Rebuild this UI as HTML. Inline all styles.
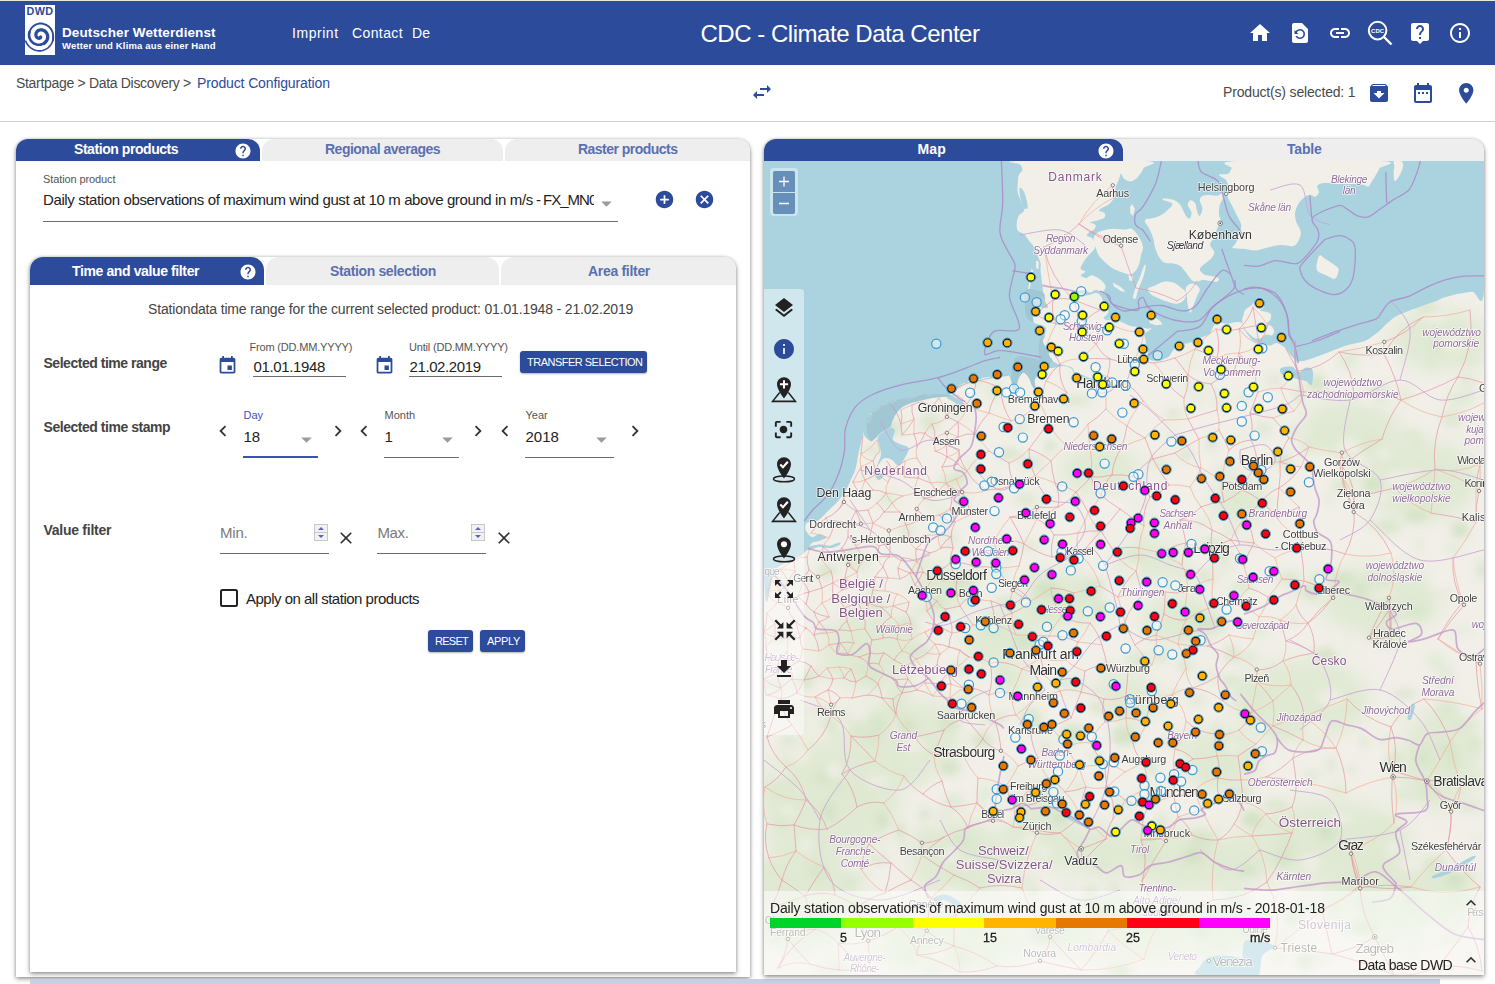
<!DOCTYPE html>
<html lang="en"><head><meta charset="utf-8"><title>CDC - Climate Data Center</title>
<style>
*{box-sizing:border-box;margin:0;padding:0}
html,body{width:1495px;height:984px;overflow:hidden;background:#fff}
body{position:relative;font-family:"Liberation Sans",sans-serif;color:#3c3c3c;font-size:14px}
.a{position:absolute;white-space:nowrap;line-height:1}
svg{position:absolute;display:block}
.hdr{left:0;top:0;width:1495px;height:65px;background:#2d4b9b}
.w{color:#fff}.b{font-weight:bold}.blue{color:#2d4b9b}
.ic{fill:#2d4b9b}.icw{fill:#fff}
.tab{position:absolute;height:23px;background:#eeeeee;border-radius:12px 12px 0 0}
.tab.on{background:#2d4b9b}
.tl{color:#5b70b0;font-weight:bold;font-size:14px}
.ul{position:absolute;height:1px;background:#6b6b6b}
.btn{position:absolute;background:#2d4b9b;color:#fff;border-radius:3px;box-shadow:0 1px 2px rgba(0,0,0,.3)}
.lbl{font-size:11px;color:#555}
</style></head><body>
<!--HEADER-->
<div class="a hdr"></div>
<div class="a" style="left:25px;top:5px;width:30px;height:50px;background:#fff"></div>
<span class="a b blue" id="t_dwd" style="letter-spacing:0.434px;left:26.500px;top:6px;font-size:10.800px">DWD</span>
<svg style="left:25px;top:20px" width="30" height="35" viewBox="0 0 30 35"><g fill="none" stroke="#2d4b9b" stroke-linecap="round" stroke-linejoin="round"><path d="M15.7 17.0 15.6 17.3 15.5 17.5 15.3 17.8 15.0 17.9 14.7 18.1 14.4 18.2 14.0 18.3 13.6 18.2 13.2 18.1 12.8 18.0 12.3 17.7 12.0 17.4 11.6 17.0 11.3 16.5 11.1 16.0 11.0 15.4 10.9 14.8 10.9 14.1 11.1 13.5 11.3 12.8 11.7 12.2 12.1 11.6 12.7 11.1 13.3 10.6 14.1 10.2 14.9 10.0 15.7 9.8 16.6 9.9 17.5 10.0 18.4 10.3 19.2 10.7 20.0 11.2 20.8 11.9 21.4 12.7 21.9 13.5 22.3 14.5 22.6 15.5 22.7 16.5 22.7 17.6 22.5 18.7 22.1 19.7 21.6 20.7 20.9 21.6 20.1 22.4 19.2 23.2" stroke-width="3.3"/><path d="M21.3 21.2 20.5 22.0 19.7 22.8 18.7 23.5 17.7 24.0 16.6 24.4 15.4 24.6 14.2 24.7 12.9 24.7 11.7 24.5 10.4 24.1 9.2 23.6 8.0 22.8 7.0 21.9 6.0 20.8 5.3 19.6 4.7 18.2 4.2 16.8 4.1 15.2 4.1 13.7 4.5 12.1" stroke-width="2.6"/><path d="M4.1 16.0 4.1 14.5 4.3 12.9 4.7 11.4 5.3 9.9 6.2 8.5 7.2 7.2 8.4 6.1 9.8 5.2 11.3 4.4 13.0 3.9 14.7 3.5 16.4 3.5 18.1 3.8 19.8 4.3 21.5 5.0 23.0 6.0 24.3 7.1 25.5 8.4 26.5 9.9 27.3 11.6 27.8 13.3 28.1 15.1 28.2 16.9 28.1 18.8 27.8 20.6" stroke-width="1.9"/><path d="M28.2 16.0 28.2 17.8 28.0 19.7 27.5 21.5 26.8 23.3 25.7 24.9 24.5 26.4 23.1 27.8 21.4 28.9 19.6 29.8 17.7 30.5 15.6 30.9 13.5 30.9 11.5 30.5 9.5 29.9 7.6 29.1 5.8 27.9 4.2 26.5 2.8 24.9 1.6 23.2 0.7 21.2" stroke-width="1.6"/></g></svg>
<span class="a b w" id="t_dw" style="letter-spacing:0.109px;left:62px;top:26px;font-size:13.500px">Deutscher Wetterdienst</span>
<span class="a b w" id="t_wk" style="letter-spacing:0.161px;left:62px;top:41px;font-size:9.500px">Wetter und Klima aus einer Hand</span>
<span class="a w" id="t_imp" style="letter-spacing:0.543px;left:292px;top:26px;font-size:14px">Imprint</span>
<span class="a w" id="t_con" style="letter-spacing:0.393px;left:352px;top:26px;font-size:14px">Contact</span>
<span class="a w" id="t_de" style="letter-spacing:0.047px;left:412px;top:26px;font-size:14px">De</span>
<span class="a w" id="t_title" style="letter-spacing:-0.470px;left:700.500px;top:22px;font-size:24px">CDC - Climate Data Center</span>
<div class="a" id="topstrip" style="left:0;top:0;width:1495px;height:1px;background:#e9e6dc"></div>
<svg style="left:1248.0px;top:21.0px" width="24" height="24" viewBox="0 0 24 24"><path fill="#fff" d="M10 20v-6h4v6h5v-8h3L12 3 2 12h3v8z"/></svg>
<svg style="left:1288.0px;top:21.0px" width="24" height="24" viewBox="0 0 24 24"><path fill="#fff" d="M14 2H6c-1.1 0-1.99.9-1.99 2L4 20c0 1.1.89 2 1.99 2H18c1.1 0 2-.9 2-2V8l-6-6zm-2 16c-2.05 0-3.81-1.24-4.58-3h1.71c.63.9 1.68 1.5 2.87 1.5 1.93 0 3.5-1.57 3.5-3.5S13.93 9.5 12 9.5c-1.35 0-2.52.78-3.1 1.9l1.6 1.6h-4V9l1.3 1.3C8.69 8.92 10.23 8 12 8c2.76 0 5 2.24 5 5s-2.24 5-5 5z"/></svg>
<svg style="left:1328.0px;top:21.0px" width="24" height="24" viewBox="0 0 24 24"><path fill="#fff" d="M3.9 12c0-1.71 1.39-3.1 3.1-3.1h4V7H7c-2.76 0-5 2.24-5 5s2.24 5 5 5h4v-1.9H7c-1.71 0-3.1-1.39-3.1-3.1zM8 13h8v-2H8v2zm9-6h-4v1.9h4c1.71 0 3.1 1.39 3.1 3.1s-1.39 3.1-3.1 3.1h-4V17h4c2.76 0 5-2.24 5-5s-2.24-5-5-5z"/></svg>
<svg style="left:1364px;top:18px" width="32" height="32" viewBox="0 0 32 32"><circle cx="13.6" cy="12.600" r="8.800" fill="none" stroke="#fff" stroke-width="2"/><path d="M20 19l7.500 7.500" stroke="#fff" stroke-width="2.400" fill="none"/><text x="13.600" y="14.600" text-anchor="middle" font-family="Liberation Sans,sans-serif" font-weight="bold" font-size="6" fill="#fff" id="t_cdc">CDC</text></svg>
<svg style="left:1408.0px;top:21.0px" width="24" height="24" viewBox="0 0 24 24"><path fill="#fff" d="M19 2H5c-1.11 0-2 .9-2 2v14c0 1.1.89 2 2 2h4l3 3 3-3h4c1.1 0 2-.9 2-2V4c0-1.1-.9-2-2-2zm-6 16h-2v-2h2v2zm2.070-7.750l-.9.920C13.450 11.900 13 12.500 13 14h-2v-.5c0-1.100.450-2.100 1.170-2.830l1.240-1.260c.370-.360.590-.860.590-1.410 0-1.100-.9-2-2-2s-2 .9-2 2H8c0-2.210 1.790-4 4-4s4 1.790 4 4c0 .880-.360 1.680-.930 2.250z"/></svg>
<svg style="left:1448.0px;top:21.0px" width="24" height="24" viewBox="0 0 24 24"><path fill="#fff" d="M11 17h2v-6h-2v6zm1-15C6.480 2 2 6.480 2 12s4.480 10 10 10 10-4.480 10-10S17.520 2 12 2zm0 18c-4.410 0-8-3.590-8-8s3.590-8 8-8 8 3.590 8 8-3.590 8-8 8zM11 9h2V7h-2v2z"/></svg>
<svg style="left:750.0px;top:80.0px" width="24" height="24" viewBox="0 0 24 24"><path fill="#2d4b9b" d="M6.990 11L3 15l3.990 4v-3H14v-2H6.990v-3zM21 9l-3.990-4v3H10v2h7.010v3L21 9z"/></svg>
<svg style="left:1367.3px;top:81.0px" width="24" height="24" viewBox="0 0 24 24"><path fill="#2d4b9b" d="M20.540 5.230l-1.390-1.680C18.880 3.210 18.470 3 18 3H6c-.470 0-.880.210-1.160.550L3.460 5.230C3.170 5.570 3 6.020 3 6.500V19c0 1.100.9 2 2 2h14c1.100 0 2-.9 2-2V6.500c0-.480-.170-.930-.460-1.270zM12 17.500L6.500 12H10v-2h4v2h3.500L12 17.500zM5.120 5l.810-1h12l.940 1H5.120z"/></svg>
<svg style="left:1410.7px;top:81.0px" width="24" height="24" viewBox="0 0 24 24"><path fill="#2d4b9b" d="M9 11H7v2h2v-2zm4 0h-2v2h2v-2zm4 0h-2v2h2v-2zm2-7h-1V2h-2v2H8V2H6v2H5c-1.110 0-1.990.9-1.990 2L3 20c0 1.100.890 2 2 2h14c1.100 0 2-.9 2-2V6c0-1.100-.9-2-2-2zm0 16H5V9h14v11z"/></svg>
<svg style="left:1453.8px;top:80.8px" width="24.5" height="24.5" viewBox="0 0 24 24"><path fill="#2d4b9b" d="M12 2C8.130 2 5 5.130 5 9c0 5.250 7 13 7 13s7-7.750 7-13c0-3.870-3.130-7-7-7zm0 9.500c-1.380 0-2.500-1.120-2.500-2.500s1.120-2.500 2.500-2.500 2.500 1.120 2.500 2.500-1.120 2.500-2.500 2.500z"/></svg>
<!--SUBHEADER-->
<span class="a" id="t_bc1" style="letter-spacing:-0.313px;left:16px;top:76px;font-size:14px;color:#4a4a4a">Startpage &gt; Data Discovery &gt;</span>
<span class="a blue" id="t_bc2" style="letter-spacing:-0.125px;left:197px;top:76px;font-size:14px">Product Configuration</span>
<span class="a" id="t_ps" style="letter-spacing:-0.171px;left:1223px;top:85px;font-size:14px;color:#4a4a4a">Product(s) selected: 1</span>
<div class="a" style="left:0;top:121px;width:1495px;height:1px;background:#cfcfcf"></div>
<div class="a" style="left:16px;top:139px;width:734px;height:838px;background:#fff;border-radius:12px 12px 0 0;box-shadow:0 2px 5px rgba(0,0,0,.38),0 0 3px rgba(0,0,0,.2)"></div>
<div class="tab on" style="left:16px;top:139px;width:244px;height:22px"></div>
<div class="tab" style="left:262px;top:139px;width:241px;height:22px"></div>
<div class="tab" style="left:505px;top:139px;width:245px;height:22px"></div>
<span class="a b w" id="t_tab1" style="letter-spacing:-0.440px;left:74px;top:142px;font-size:14px">Station products</span>
<svg style="left:233.8px;top:141.5px" width="18" height="18" viewBox="0 0 24 24"><path fill="#fff" d="M12 2C6.480 2 2 6.480 2 12s4.480 10 10 10 10-4.480 10-10S17.520 2 12 2zm1 17h-2v-2h2v2zm2.070-7.750l-.9.920C13.450 12.900 13 13.500 13 15h-2v-.5c0-1.100.450-2.100 1.170-2.830l1.240-1.260c.370-.360.590-.860.590-1.410 0-1.100-.9-2-2-2s-2 .9-2 2H8c0-2.210 1.790-4 4-4s4 1.790 4 4c0 .880-.360 1.680-.930 2.250z"/></svg>
<span class="a tl" id="t_tab2" style="letter-spacing:-0.508px;left:325px;top:142px">Regional averages</span>
<span class="a tl" id="t_tab3" style="letter-spacing:-0.524px;left:578px;top:142px">Raster products</span>
<span class="a lbl" id="t_sp" style="letter-spacing:-0.107px;left:43px;top:174px;font-size:11px">Station product</span>
<span class="a" id="t_daily" style="letter-spacing:-0.384px;left:43px;top:190.300px;line-height:20px;height:20px;font-size:15px;color:#222;width:551px;overflow:hidden">Daily station observations of maximum wind gust at 10 m above ground in m/s<span style="letter-spacing:-1px"> - FX_MN003</span></span>
<svg style="left:593.7px;top:191.2px" width="25" height="25" viewBox="0 0 24 24"><path fill="#9a9a9a" d="M7 10l5 5 5-5z"/></svg>
<div class="ul" style="left:43px;top:221px;width:575px"></div>
<svg style="left:653.5px;top:189.0px" width="21" height="21" viewBox="0 0 24 24"><path fill="#2d4b9b" d="M12 2C6.480 2 2 6.480 2 12s4.480 10 10 10 10-4.480 10-10S17.520 2 12 2zm5 11h-4v4h-2v-4H7v-2h4V7h2v4h4v2z"/></svg>
<svg style="left:693.9px;top:189.0px" width="21" height="21" viewBox="0 0 24 24"><path fill="#2d4b9b" d="M12 2C6.470 2 2 6.470 2 12s4.470 10 10 10 10-4.470 10-10S17.530 2 12 2zm5 13.590L15.590 17 12 13.410 8.410 17 7 15.590 10.590 12 7 8.410 8.410 7 12 10.590 15.590 7 17 8.410 13.410 12 17 15.590z"/></svg>
<div class="a" style="left:30px;top:257px;width:706px;height:715px;background:#fff;border-radius:12px 12px 0 0;box-shadow:0 2px 5px rgba(0,0,0,.4),0 0 3px rgba(0,0,0,.2)"></div>
<div class="tab on" style="left:30px;top:257px;width:234px;height:27.500px;border-radius:13px 13px 0 0"></div>
<div class="tab" style="left:266px;top:257px;width:233px;height:27.500px;border-radius:13px 13px 0 0"></div>
<div class="tab" style="left:501px;top:257px;width:235px;height:27.500px;border-radius:13px 13px 0 0"></div>
<span class="a b w" id="t_itab1" style="letter-spacing:-0.382px;left:72px;top:264px;font-size:14px">Time and value filter</span>
<svg style="left:238.8px;top:262.6px" width="18" height="18" viewBox="0 0 24 24"><path fill="#fff" d="M12 2C6.480 2 2 6.480 2 12s4.480 10 10 10 10-4.480 10-10S17.520 2 12 2zm1 17h-2v-2h2v2zm2.070-7.750l-.9.920C13.450 12.900 13 13.500 13 15h-2v-.5c0-1.100.450-2.100 1.170-2.830l1.240-1.260c.370-.360.590-.860.590-1.410 0-1.100-.9-2-2-2s-2 .9-2 2H8c0-2.210 1.790-4 4-4s4 1.790 4 4c0 .880-.360 1.680-.930 2.250z"/></svg>
<span class="a tl" id="t_itab2" style="letter-spacing:-0.361px;left:330px;top:264px">Station selection</span>
<span class="a tl" id="t_itab3" style="letter-spacing:-0.305px;left:588px;top:264px">Area filter</span>
<span class="a" id="t_range" style="letter-spacing:-0.172px;left:148px;top:302px;font-size:14px;color:#444">Stationdata time range for the current selected product: 01.01.1948 - 21.02.2019</span>
<span class="a b" id="t_str" style="letter-spacing:-0.473px;left:43.500px;top:356px;font-size:14px;color:#444">Selected time range</span>
<svg style="left:217.0px;top:355.0px" width="21" height="21" viewBox="0 0 24 24"><path fill="#2d4b9b" d="M17 12h-5v5h5v-5zM16 1v2H8V1H6v2H5c-1.110 0-1.990.9-1.990 2L3 19c0 1.100.890 2 2 2h14c1.100 0 2-.9 2-2V5c0-1.100-.9-2-2-2h-1V1h-2zm3 18H5V8h14v11z"/></svg>
<span class="a lbl" id="t_from" style="letter-spacing:-0.178px;left:249.500px;top:342px">From (DD.MM.YYYY)</span>
<span class="a" id="t_d1" style="letter-spacing:-0.358px;left:253.500px;top:359px;font-size:15px;color:#222">01.01.1948</span>
<div class="ul" style="left:253px;top:376px;width:93px"></div>
<svg style="left:373.5px;top:355.0px" width="21" height="21" viewBox="0 0 24 24"><path fill="#2d4b9b" d="M17 12h-5v5h5v-5zM16 1v2H8V1H6v2H5c-1.110 0-1.990.9-1.990 2L3 19c0 1.100.890 2 2 2h14c1.100 0 2-.9 2-2V5c0-1.100-.9-2-2-2h-1V1h-2zm3 18H5V8h14v11z"/></svg>
<span class="a lbl" id="t_until" style="letter-spacing:-0.181px;left:409px;top:342px">Until (DD.MM.YYYY)</span>
<span class="a" id="t_d2" style="letter-spacing:-0.398px;left:409.500px;top:359px;font-size:15px;color:#222">21.02.2019</span>
<div class="ul" style="left:409px;top:376px;width:93px"></div>
<div class="btn" style="left:520px;top:351px;width:127px;height:22px"></div>
<span class="a w" id="t_trans" style="letter-spacing:-0.510px;left:527px;top:357px;font-size:11px;font-weight:500">TRANSFER SELECTION</span>
<span class="a b" id="t_sts" style="letter-spacing:-0.457px;left:43.500px;top:420px;font-size:14px;color:#444">Selected time stamp</span>
<svg style="left:211.5px;top:419.5px" width="22" height="22" viewBox="0 0 24 24"><path fill="#333" d="M15.410 7.410L14 6l-6 6 6 6 1.410-1.410L10.830 12z"/></svg>
<svg style="left:353.0px;top:419.5px" width="22" height="22" viewBox="0 0 24 24"><path fill="#333" d="M15.410 7.410L14 6l-6 6 6 6 1.410-1.410L10.830 12z"/></svg>
<svg style="left:494.0px;top:419.5px" width="22" height="22" viewBox="0 0 24 24"><path fill="#333" d="M15.410 7.410L14 6l-6 6 6 6 1.410-1.410L10.830 12z"/></svg>
<svg style="left:327.0px;top:419.5px" width="22" height="22" viewBox="0 0 24 24"><path fill="#333" d="M10 6L8.590 7.410 13.170 12l-4.580 4.590L10 18l6-6z"/></svg>
<svg style="left:467.0px;top:419.5px" width="22" height="22" viewBox="0 0 24 24"><path fill="#333" d="M10 6L8.590 7.410 13.170 12l-4.580 4.590L10 18l6-6z"/></svg>
<svg style="left:623.5px;top:419.5px" width="22" height="22" viewBox="0 0 24 24"><path fill="#333" d="M10 6L8.590 7.410 13.170 12l-4.580 4.590L10 18l6-6z"/></svg>
<span class="a lbl" id="t_day" style="left:243.500px;top:410px;color:#3f51b5">Day</span>
<span class="a lbl" id="t_month" style="left:384.500px;top:410px">Month</span>
<span class="a lbl" id="t_year" style="left:525.500px;top:410px">Year</span>
<span class="a" id="t_18" style="left:243.500px;top:429px;font-size:15px;color:#222">18</span>
<span class="a" id="t_1" style="left:384.500px;top:429px;font-size:15px;color:#222">1</span>
<span class="a" id="t_2018" style="left:525.500px;top:429px;font-size:15px;color:#222">2018</span>
<svg style="left:293.5px;top:427.0px" width="25" height="25" viewBox="0 0 24 24"><path fill="#9a9a9a" d="M7 10l5 5 5-5z"/></svg>
<svg style="left:434.5px;top:427.0px" width="25" height="25" viewBox="0 0 24 24"><path fill="#9a9a9a" d="M7 10l5 5 5-5z"/></svg>
<svg style="left:588.5px;top:427.0px" width="25" height="25" viewBox="0 0 24 24"><path fill="#9a9a9a" d="M7 10l5 5 5-5z"/></svg>
<div class="ul" style="left:243px;top:456px;width:75px;height:2px;background:#3f51b5"></div>
<div class="ul" style="left:384px;top:457px;width:75px"></div>
<div class="ul" style="left:525px;top:457px;width:89px"></div>
<span class="a b" id="t_vf" style="letter-spacing:-0.268px;left:43.500px;top:523px;font-size:14px;color:#444">Value filter</span>
<span class="a" id="t_min" style="letter-spacing:-0.186px;left:220px;top:525px;font-size:15px;color:#7a7a7a">Min.</span>
<span class="a" id="t_max" style="letter-spacing:-0.379px;left:377.500px;top:525px;font-size:15px;color:#7a7a7a">Max.</span>
<svg style="left:314px;top:524px" width="14" height="17" viewBox="0 0 14 17"><rect x=".5" y=".5" width="13" height="16" fill="#f1f1f1" stroke="#c8c8c8"/><path d="M0 8.500h14" stroke="#c8c8c8"/><path d="M4 6l3-3 3 3zM4 11l3 3 3-3z" fill="#5566bb"/></svg>
<svg style="left:471px;top:524px" width="14" height="17" viewBox="0 0 14 17"><rect x=".5" y=".5" width="13" height="16" fill="#f1f1f1" stroke="#c8c8c8"/><path d="M0 8.500h14" stroke="#c8c8c8"/><path d="M4 6l3-3 3 3zM4 11l3 3 3-3z" fill="#5566bb"/></svg>
<div class="ul" style="left:220px;top:553px;width:109px"></div>
<div class="ul" style="left:377px;top:553px;width:109px"></div>
<svg style="left:336.0px;top:527.5px" width="20" height="20" viewBox="0 0 24 24"><path fill="#333" d="M19 6.410L17.590 5 12 10.590 6.410 5 5 6.410 10.590 12 5 17.590 6.410 19 12 13.410 17.590 19 19 17.590 13.410 12z"/></svg>
<svg style="left:493.5px;top:527.5px" width="20" height="20" viewBox="0 0 24 24"><path fill="#333" d="M19 6.410L17.590 5 12 10.590 6.410 5 5 6.410 10.590 12 5 17.590 6.410 19 12 13.410 17.590 19 19 17.590 13.410 12z"/></svg>
<div class="a" style="left:220px;top:589px;width:18px;height:18px;border:2px solid #222;border-radius:2.500px"></div>
<span class="a" id="t_apply" style="letter-spacing:-0.501px;left:246px;top:591px;font-size:15px;color:#222">Apply on all station products</span>
<div class="btn" style="left:428px;top:630px;width:45px;height:21.500px"></div>
<div class="btn" style="left:480px;top:630px;width:45px;height:21.500px"></div>
<span class="a w" id="t_reset" style="letter-spacing:-0.737px;left:435px;top:636px;font-size:11px">RESET</span>
<span class="a w" id="t_appl" style="letter-spacing:-0.351px;left:487px;top:636px;font-size:11px">APPLY</span>
<div class="a" style="left:30px;top:979px;width:1410px;height:5px;background:#c9d0e6"></div>
<div class="a" style="left:764px;top:139px;width:720px;height:836px;background:#f2efe9;border-radius:12px 12px 0 0;box-shadow:0 2px 5px rgba(0,0,0,.4),0 0 3px rgba(0,0,0,.2)"></div>
<div class="tab on" style="left:764px;top:139px;width:359px;height:22px"></div>
<div class="tab" style="left:1125px;top:139px;width:359px;height:22px"></div>
<span class="a b w" id="t_map" style="letter-spacing:0.200px;left:917.500px;top:142px;font-size:14px">Map</span>
<svg style="left:1097.0px;top:141.5px" width="18" height="18" viewBox="0 0 24 24"><path fill="#fff" d="M12 2C6.480 2 2 6.480 2 12s4.480 10 10 10 10-4.480 10-10S17.520 2 12 2zm1 17h-2v-2h2v2zm2.070-7.750l-.9.920C13.450 12.900 13 13.500 13 15h-2v-.5c0-1.100.450-2.100 1.170-2.830l1.240-1.260c.370-.360.590-.860.590-1.410 0-1.100-.9-2-2-2s-2 .9-2 2H8c0-2.210 1.790-4 4-4s4 1.790 4 4c0 .880-.360 1.680-.930 2.250z"/></svg>
<span class="a tl" id="t_table" style="letter-spacing:-0.166px;left:1287px;top:142px">Table</span>
<svg style="left:764px;top:161px" width="720" height="814" viewBox="764 161 720 814" font-family="Liberation Sans,sans-serif">
<defs><filter id="bl" x="-30%" y="-30%" width="160%" height="160%"><feGaussianBlur stdDeviation="9"/></filter><filter id="bs" x="-30%" y="-30%" width="160%" height="160%"><feGaussianBlur stdDeviation="4"/></filter></defs>
<rect x="764" y="161" width="720" height="814" fill="#f1efe8"/>
<g filter="url(#bl)" fill="#d3e5c3" opacity=".55">
<ellipse cx="830" cy="800" rx="70" ry="60"/>
<ellipse cx="900" cy="740" rx="60" ry="40"/>
<ellipse cx="870" cy="650" rx="50" ry="40"/>
<ellipse cx="960" cy="860" rx="50" ry="40"/>
<ellipse cx="1000" cy="640" rx="35" ry="30"/>
<ellipse cx="1060" cy="600" rx="40" ry="30"/>
<ellipse cx="1130" cy="700" rx="30" ry="25"/>
<ellipse cx="1180" cy="620" rx="40" ry="25"/>
<ellipse cx="1040" cy="820" rx="30" ry="40"/>
<ellipse cx="1100" cy="850" rx="60" ry="25"/>
<ellipse cx="1200" cy="860" rx="80" ry="30"/>
<ellipse cx="1330" cy="840" rx="80" ry="40"/>
<ellipse cx="1300" cy="700" rx="70" ry="40"/>
<ellipse cx="1380" cy="600" rx="60" ry="35"/>
<ellipse cx="1420" cy="480" rx="60" ry="40"/>
<ellipse cx="1350" cy="430" rx="50" ry="30"/>
<ellipse cx="1240" cy="500" rx="30" ry="25"/>
<ellipse cx="1100" cy="470" rx="40" ry="25"/>
<ellipse cx="1150" cy="560" rx="35" ry="20"/>
<ellipse cx="1300" cy="200" rx="50" ry="25"/>
<ellipse cx="800" cy="900" rx="60" ry="50"/>
<ellipse cx="950" cy="940" rx="80" ry="30"/>
<ellipse cx="1150" cy="930" rx="120" ry="30"/>
<ellipse cx="1400" cy="900" rx="80" ry="40"/>
<ellipse cx="1440" cy="760" rx="40" ry="50"/>
<ellipse cx="1440" cy="340" rx="50" ry="30"/>
<ellipse cx="940" cy="590" rx="30" ry="25"/>
<ellipse cx="1220" cy="760" rx="40" ry="30"/>
</g>
<g filter="url(#bs)">
<ellipse cx="935" cy="604" rx="9" ry="7" fill="#cde1be" opacity="0.7"/>
<ellipse cx="1102" cy="609" rx="10" ry="6" fill="#c8ddb8" opacity="0.6"/>
<ellipse cx="872" cy="678" rx="9" ry="7" fill="#cde1be" opacity="0.4"/>
<ellipse cx="1326" cy="831" rx="9" ry="9" fill="#c8ddb8" opacity="0.5"/>
<ellipse cx="981" cy="574" rx="7" ry="7" fill="#dae9ce" opacity="0.6"/>
<ellipse cx="1174" cy="742" rx="11" ry="6" fill="#cde1be" opacity="0.5"/>
<ellipse cx="1224" cy="555" rx="5" ry="8" fill="#c8ddb8" opacity="0.7"/>
<ellipse cx="1128" cy="974" rx="5" ry="7" fill="#d4e5c6" opacity="0.7"/>
<ellipse cx="1009" cy="454" rx="12" ry="5" fill="#c8ddb8" opacity="0.6"/>
<ellipse cx="1193" cy="616" rx="12" ry="6" fill="#d4e5c6" opacity="0.7"/>
<ellipse cx="1079" cy="371" rx="7" ry="8" fill="#dae9ce" opacity="0.4"/>
<ellipse cx="1207" cy="676" rx="10" ry="6" fill="#dae9ce" opacity="0.6"/>
<ellipse cx="1030" cy="672" rx="9" ry="4" fill="#dae9ce" opacity="0.7"/>
<ellipse cx="954" cy="802" rx="11" ry="9" fill="#d4e5c6" opacity="0.5"/>
<ellipse cx="924" cy="815" rx="6" ry="6" fill="#cde1be" opacity="0.6"/>
<ellipse cx="1447" cy="710" rx="11" ry="9" fill="#d4e5c6" opacity="0.7"/>
<ellipse cx="1089" cy="344" rx="9" ry="4" fill="#d4e5c6" opacity="0.7"/>
<ellipse cx="1009" cy="835" rx="10" ry="7" fill="#dae9ce" opacity="0.5"/>
<ellipse cx="1212" cy="576" rx="13" ry="7" fill="#c8ddb8" opacity="0.7"/>
<ellipse cx="1241" cy="583" rx="7" ry="4" fill="#dae9ce" opacity="0.4"/>
<ellipse cx="1342" cy="578" rx="12" ry="6" fill="#c8ddb8" opacity="0.6"/>
<ellipse cx="1241" cy="588" rx="12" ry="7" fill="#dae9ce" opacity="0.7"/>
<ellipse cx="1154" cy="822" rx="6" ry="4" fill="#cde1be" opacity="0.4"/>
<ellipse cx="1334" cy="911" rx="11" ry="3" fill="#c8ddb8" opacity="0.4"/>
<ellipse cx="1144" cy="505" rx="11" ry="3" fill="#d4e5c6" opacity="0.4"/>
<ellipse cx="788" cy="741" rx="8" ry="4" fill="#c8ddb8" opacity="0.6"/>
<ellipse cx="1186" cy="455" rx="7" ry="4" fill="#c8ddb8" opacity="0.7"/>
<ellipse cx="1096" cy="690" rx="10" ry="3" fill="#cde1be" opacity="0.5"/>
<ellipse cx="1121" cy="733" rx="10" ry="6" fill="#dae9ce" opacity="0.6"/>
<ellipse cx="1033" cy="892" rx="6" ry="6" fill="#c8ddb8" opacity="0.6"/>
<ellipse cx="1292" cy="620" rx="9" ry="3" fill="#c8ddb8" opacity="0.4"/>
<ellipse cx="781" cy="846" rx="12" ry="7" fill="#dae9ce" opacity="0.6"/>
<ellipse cx="1317" cy="577" rx="5" ry="7" fill="#cde1be" opacity="0.6"/>
<ellipse cx="820" cy="974" rx="8" ry="7" fill="#dae9ce" opacity="0.5"/>
<ellipse cx="1050" cy="446" rx="5" ry="6" fill="#c8ddb8" opacity="0.7"/>
<ellipse cx="1181" cy="913" rx="5" ry="5" fill="#d4e5c6" opacity="0.4"/>
<ellipse cx="1303" cy="907" rx="8" ry="7" fill="#dae9ce" opacity="0.7"/>
<ellipse cx="1377" cy="599" rx="10" ry="8" fill="#dae9ce" opacity="0.7"/>
<ellipse cx="908" cy="625" rx="8" ry="8" fill="#c8ddb8" opacity="0.6"/>
<ellipse cx="816" cy="932" rx="12" ry="3" fill="#d4e5c6" opacity="0.6"/>
<ellipse cx="1405" cy="793" rx="10" ry="7" fill="#dae9ce" opacity="0.4"/>
<ellipse cx="829" cy="811" rx="6" ry="8" fill="#c8ddb8" opacity="0.6"/>
<ellipse cx="1250" cy="167" rx="8" ry="6" fill="#c8ddb8" opacity="0.5"/>
<ellipse cx="962" cy="703" rx="12" ry="8" fill="#dae9ce" opacity="0.6"/>
<ellipse cx="1246" cy="930" rx="5" ry="9" fill="#cde1be" opacity="0.6"/>
<ellipse cx="1130" cy="209" rx="11" ry="7" fill="#d4e5c6" opacity="0.4"/>
<ellipse cx="1405" cy="694" rx="12" ry="4" fill="#c8ddb8" opacity="0.6"/>
<ellipse cx="1230" cy="534" rx="6" ry="3" fill="#c8ddb8" opacity="0.5"/>
<ellipse cx="794" cy="572" rx="11" ry="5" fill="#c8ddb8" opacity="0.5"/>
<ellipse cx="1123" cy="971" rx="9" ry="7" fill="#cde1be" opacity="0.4"/>
<ellipse cx="1351" cy="770" rx="5" ry="5" fill="#d4e5c6" opacity="0.6"/>
<ellipse cx="1040" cy="611" rx="10" ry="9" fill="#dae9ce" opacity="0.7"/>
<ellipse cx="1245" cy="186" rx="10" ry="4" fill="#d4e5c6" opacity="0.5"/>
<ellipse cx="1141" cy="536" rx="9" ry="3" fill="#c8ddb8" opacity="0.4"/>
<ellipse cx="968" cy="696" rx="8" ry="4" fill="#cde1be" opacity="0.5"/>
<ellipse cx="1152" cy="918" rx="12" ry="7" fill="#cde1be" opacity="0.6"/>
<ellipse cx="1435" cy="862" rx="11" ry="6" fill="#cde1be" opacity="0.5"/>
<ellipse cx="1373" cy="736" rx="8" ry="3" fill="#d4e5c6" opacity="0.6"/>
<ellipse cx="1282" cy="460" rx="9" ry="7" fill="#cde1be" opacity="0.7"/>
<ellipse cx="780" cy="637" rx="10" ry="4" fill="#c8ddb8" opacity="0.5"/>
<ellipse cx="1212" cy="443" rx="4" ry="7" fill="#c8ddb8" opacity="0.7"/>
<ellipse cx="1479" cy="419" rx="8" ry="4" fill="#cde1be" opacity="0.4"/>
<ellipse cx="1235" cy="894" rx="13" ry="6" fill="#dae9ce" opacity="0.7"/>
<ellipse cx="1201" cy="931" rx="7" ry="8" fill="#c8ddb8" opacity="0.6"/>
<ellipse cx="1150" cy="795" rx="12" ry="8" fill="#dae9ce" opacity="0.7"/>
<ellipse cx="1025" cy="499" rx="11" ry="6" fill="#d4e5c6" opacity="0.6"/>
<ellipse cx="1306" cy="906" rx="13" ry="3" fill="#cde1be" opacity="0.7"/>
<ellipse cx="830" cy="724" rx="7" ry="7" fill="#cde1be" opacity="0.7"/>
<ellipse cx="1292" cy="433" rx="5" ry="5" fill="#cde1be" opacity="0.5"/>
<ellipse cx="1377" cy="581" rx="12" ry="5" fill="#d4e5c6" opacity="0.5"/>
<ellipse cx="1345" cy="648" rx="5" ry="9" fill="#cde1be" opacity="0.5"/>
<ellipse cx="924" cy="836" rx="10" ry="8" fill="#dae9ce" opacity="0.5"/>
<ellipse cx="1240" cy="794" rx="13" ry="6" fill="#cde1be" opacity="0.6"/>
<ellipse cx="1098" cy="754" rx="7" ry="6" fill="#dae9ce" opacity="0.5"/>
<ellipse cx="1231" cy="654" rx="7" ry="9" fill="#c8ddb8" opacity="0.5"/>
<ellipse cx="1394" cy="759" rx="10" ry="8" fill="#d4e5c6" opacity="0.7"/>
<ellipse cx="974" cy="921" rx="5" ry="7" fill="#cde1be" opacity="0.6"/>
<ellipse cx="793" cy="768" rx="8" ry="5" fill="#dae9ce" opacity="0.4"/>
<ellipse cx="1084" cy="900" rx="6" ry="6" fill="#dae9ce" opacity="0.7"/>
<ellipse cx="1469" cy="874" rx="5" ry="5" fill="#d4e5c6" opacity="0.5"/>
<ellipse cx="1378" cy="393" rx="12" ry="8" fill="#d4e5c6" opacity="0.7"/>
<ellipse cx="1472" cy="807" rx="13" ry="5" fill="#c8ddb8" opacity="0.4"/>
<ellipse cx="942" cy="814" rx="6" ry="3" fill="#d4e5c6" opacity="0.7"/>
<ellipse cx="1346" cy="362" rx="11" ry="8" fill="#dae9ce" opacity="0.6"/>
<ellipse cx="776" cy="684" rx="12" ry="6" fill="#c8ddb8" opacity="0.5"/>
<ellipse cx="1219" cy="400" rx="5" ry="8" fill="#dae9ce" opacity="0.5"/>
<ellipse cx="968" cy="592" rx="5" ry="3" fill="#d4e5c6" opacity="0.7"/>
<ellipse cx="1435" cy="660" rx="9" ry="6" fill="#dae9ce" opacity="0.7"/>
<ellipse cx="1077" cy="223" rx="8" ry="8" fill="#c8ddb8" opacity="0.4"/>
<ellipse cx="1427" cy="308" rx="11" ry="5" fill="#cde1be" opacity="0.7"/>
<ellipse cx="993" cy="481" rx="5" ry="5" fill="#cde1be" opacity="0.5"/>
<ellipse cx="1453" cy="761" rx="5" ry="7" fill="#cde1be" opacity="0.7"/>
<ellipse cx="1466" cy="724" rx="13" ry="6" fill="#cde1be" opacity="0.4"/>
<ellipse cx="872" cy="735" rx="8" ry="5" fill="#c8ddb8" opacity="0.4"/>
<ellipse cx="901" cy="831" rx="4" ry="9" fill="#c8ddb8" opacity="0.7"/>
<ellipse cx="1076" cy="309" rx="5" ry="4" fill="#c8ddb8" opacity="0.5"/>
<ellipse cx="1470" cy="361" rx="13" ry="6" fill="#dae9ce" opacity="0.5"/>
<ellipse cx="1296" cy="593" rx="8" ry="5" fill="#dae9ce" opacity="0.5"/>
<ellipse cx="1149" cy="839" rx="9" ry="9" fill="#d4e5c6" opacity="0.5"/>
<ellipse cx="1382" cy="942" rx="12" ry="4" fill="#cde1be" opacity="0.5"/>
<ellipse cx="774" cy="869" rx="13" ry="7" fill="#dae9ce" opacity="0.4"/>
<ellipse cx="1153" cy="520" rx="9" ry="5" fill="#dae9ce" opacity="0.6"/>
<ellipse cx="1190" cy="733" rx="11" ry="5" fill="#dae9ce" opacity="0.5"/>
<ellipse cx="1467" cy="381" rx="9" ry="7" fill="#d4e5c6" opacity="0.5"/>
<ellipse cx="1460" cy="530" rx="9" ry="8" fill="#c8ddb8" opacity="0.7"/>
<ellipse cx="1160" cy="658" rx="6" ry="5" fill="#cde1be" opacity="0.5"/>
<ellipse cx="919" cy="608" rx="8" ry="8" fill="#dae9ce" opacity="0.4"/>
<ellipse cx="1032" cy="463" rx="12" ry="7" fill="#c8ddb8" opacity="0.4"/>
<ellipse cx="995" cy="391" rx="9" ry="9" fill="#dae9ce" opacity="0.7"/>
<ellipse cx="1367" cy="904" rx="10" ry="4" fill="#c8ddb8" opacity="0.4"/>
<ellipse cx="1162" cy="257" rx="12" ry="6" fill="#c8ddb8" opacity="0.4"/>
<ellipse cx="961" cy="477" rx="8" ry="7" fill="#c8ddb8" opacity="0.5"/>
<ellipse cx="1225" cy="768" rx="5" ry="8" fill="#dae9ce" opacity="0.4"/>
<ellipse cx="1068" cy="889" rx="7" ry="6" fill="#dae9ce" opacity="0.4"/>
<ellipse cx="783" cy="922" rx="9" ry="4" fill="#c8ddb8" opacity="0.7"/>
<ellipse cx="1425" cy="483" rx="8" ry="9" fill="#dae9ce" opacity="0.5"/>
<ellipse cx="1187" cy="635" rx="9" ry="5" fill="#d4e5c6" opacity="0.5"/>
<ellipse cx="1283" cy="859" rx="8" ry="8" fill="#cde1be" opacity="0.7"/>
<ellipse cx="850" cy="905" rx="6" ry="4" fill="#c8ddb8" opacity="0.4"/>
<ellipse cx="1398" cy="715" rx="6" ry="5" fill="#dae9ce" opacity="0.5"/>
<ellipse cx="954" cy="726" rx="5" ry="4" fill="#d4e5c6" opacity="0.4"/>
<ellipse cx="1247" cy="657" rx="11" ry="5" fill="#d4e5c6" opacity="0.6"/>
<ellipse cx="957" cy="893" rx="6" ry="8" fill="#dae9ce" opacity="0.5"/>
<ellipse cx="1210" cy="778" rx="8" ry="8" fill="#dae9ce" opacity="0.4"/>
<ellipse cx="1144" cy="854" rx="9" ry="8" fill="#c8ddb8" opacity="0.4"/>
<ellipse cx="1014" cy="678" rx="10" ry="9" fill="#dae9ce" opacity="0.6"/>
<ellipse cx="1476" cy="841" rx="7" ry="3" fill="#dae9ce" opacity="0.5"/>
<ellipse cx="1365" cy="741" rx="5" ry="8" fill="#c8ddb8" opacity="0.5"/>
<ellipse cx="1418" cy="611" rx="11" ry="7" fill="#d4e5c6" opacity="0.6"/>
<ellipse cx="1151" cy="912" rx="9" ry="5" fill="#dae9ce" opacity="0.6"/>
<ellipse cx="1030" cy="716" rx="11" ry="9" fill="#d4e5c6" opacity="0.7"/>
<ellipse cx="835" cy="734" rx="6" ry="6" fill="#dae9ce" opacity="0.7"/>
<ellipse cx="1117" cy="971" rx="12" ry="6" fill="#c8ddb8" opacity="0.7"/>
<ellipse cx="1074" cy="401" rx="12" ry="4" fill="#c8ddb8" opacity="0.6"/>
<ellipse cx="916" cy="778" rx="13" ry="8" fill="#dae9ce" opacity="0.5"/>
<ellipse cx="921" cy="939" rx="8" ry="5" fill="#dae9ce" opacity="0.6"/>
<ellipse cx="862" cy="670" rx="5" ry="3" fill="#c8ddb8" opacity="0.6"/>
<ellipse cx="1162" cy="701" rx="6" ry="8" fill="#c8ddb8" opacity="0.4"/>
<ellipse cx="788" cy="583" rx="13" ry="4" fill="#c8ddb8" opacity="0.4"/>
<ellipse cx="1150" cy="923" rx="10" ry="6" fill="#cde1be" opacity="0.5"/>
<ellipse cx="930" cy="500" rx="7" ry="6" fill="#d4e5c6" opacity="0.5"/>
<ellipse cx="1197" cy="700" rx="9" ry="6" fill="#cde1be" opacity="0.4"/>
<ellipse cx="1089" cy="593" rx="12" ry="9" fill="#d4e5c6" opacity="0.5"/>
<ellipse cx="1140" cy="345" rx="7" ry="3" fill="#d4e5c6" opacity="0.6"/>
<ellipse cx="1318" cy="178" rx="10" ry="3" fill="#c8ddb8" opacity="0.7"/>
<ellipse cx="799" cy="711" rx="8" ry="5" fill="#d4e5c6" opacity="0.5"/>
<ellipse cx="846" cy="715" rx="5" ry="5" fill="#d4e5c6" opacity="0.6"/>
<ellipse cx="824" cy="710" rx="13" ry="3" fill="#c8ddb8" opacity="0.7"/>
<ellipse cx="1068" cy="740" rx="8" ry="6" fill="#cde1be" opacity="0.5"/>
<ellipse cx="1110" cy="678" rx="11" ry="4" fill="#dae9ce" opacity="0.6"/>
<ellipse cx="1453" cy="549" rx="7" ry="3" fill="#cde1be" opacity="0.6"/>
<ellipse cx="1171" cy="438" rx="4" ry="7" fill="#dae9ce" opacity="0.7"/>
<ellipse cx="1046" cy="589" rx="12" ry="8" fill="#c8ddb8" opacity="0.6"/>
<ellipse cx="839" cy="785" rx="7" ry="6" fill="#d4e5c6" opacity="0.5"/>
<ellipse cx="806" cy="617" rx="4" ry="6" fill="#cde1be" opacity="0.7"/>
<ellipse cx="863" cy="793" rx="5" ry="7" fill="#dae9ce" opacity="0.6"/>
<ellipse cx="878" cy="723" rx="8" ry="7" fill="#cde1be" opacity="0.5"/>
<ellipse cx="777" cy="934" rx="7" ry="9" fill="#cde1be" opacity="0.4"/>
<ellipse cx="1044" cy="857" rx="7" ry="7" fill="#dae9ce" opacity="0.7"/>
<ellipse cx="1352" cy="356" rx="7" ry="7" fill="#dae9ce" opacity="0.4"/>
<ellipse cx="1422" cy="615" rx="8" ry="3" fill="#dae9ce" opacity="0.6"/>
<ellipse cx="1360" cy="589" rx="6" ry="5" fill="#c8ddb8" opacity="0.7"/>
<ellipse cx="1191" cy="365" rx="9" ry="3" fill="#dae9ce" opacity="0.6"/>
<ellipse cx="1325" cy="655" rx="12" ry="6" fill="#c8ddb8" opacity="0.7"/>
<ellipse cx="1079" cy="786" rx="5" ry="4" fill="#c8ddb8" opacity="0.5"/>
<ellipse cx="1291" cy="921" rx="9" ry="6" fill="#cde1be" opacity="0.6"/>
<ellipse cx="898" cy="960" rx="12" ry="4" fill="#dae9ce" opacity="0.5"/>
<ellipse cx="1025" cy="165" rx="7" ry="3" fill="#c8ddb8" opacity="0.4"/>
<ellipse cx="1225" cy="570" rx="8" ry="3" fill="#c8ddb8" opacity="0.7"/>
<ellipse cx="1279" cy="192" rx="12" ry="4" fill="#dae9ce" opacity="0.7"/>
<ellipse cx="1267" cy="173" rx="9" ry="9" fill="#c8ddb8" opacity="0.4"/>
<ellipse cx="1374" cy="523" rx="10" ry="4" fill="#dae9ce" opacity="0.7"/>
<ellipse cx="883" cy="893" rx="8" ry="6" fill="#dae9ce" opacity="0.5"/>
<ellipse cx="1012" cy="772" rx="7" ry="4" fill="#dae9ce" opacity="0.6"/>
<ellipse cx="1055" cy="941" rx="6" ry="4" fill="#dae9ce" opacity="0.5"/>
<ellipse cx="803" cy="683" rx="11" ry="5" fill="#c8ddb8" opacity="0.7"/>
<ellipse cx="827" cy="723" rx="11" ry="5" fill="#dae9ce" opacity="0.6"/>
<ellipse cx="1455" cy="899" rx="13" ry="9" fill="#d4e5c6" opacity="0.5"/>
<ellipse cx="1349" cy="707" rx="8" ry="6" fill="#dae9ce" opacity="0.7"/>
<ellipse cx="988" cy="962" rx="6" ry="4" fill="#cde1be" opacity="0.5"/>
<ellipse cx="1377" cy="634" rx="10" ry="7" fill="#d4e5c6" opacity="0.6"/>
<ellipse cx="994" cy="626" rx="7" ry="8" fill="#c8ddb8" opacity="0.4"/>
<ellipse cx="1073" cy="732" rx="12" ry="8" fill="#cde1be" opacity="0.7"/>
<ellipse cx="956" cy="410" rx="6" ry="8" fill="#cde1be" opacity="0.5"/>
<ellipse cx="1396" cy="779" rx="12" ry="3" fill="#dae9ce" opacity="0.4"/>
<ellipse cx="1417" cy="444" rx="4" ry="4" fill="#d4e5c6" opacity="0.6"/>
<ellipse cx="1351" cy="462" rx="10" ry="4" fill="#cde1be" opacity="0.4"/>
<ellipse cx="1311" cy="592" rx="8" ry="8" fill="#c8ddb8" opacity="0.7"/>
<ellipse cx="1477" cy="779" rx="6" ry="7" fill="#dae9ce" opacity="0.7"/>
<ellipse cx="1078" cy="684" rx="7" ry="9" fill="#dae9ce" opacity="0.6"/>
<ellipse cx="903" cy="726" rx="11" ry="7" fill="#d4e5c6" opacity="0.5"/>
<ellipse cx="1305" cy="961" rx="9" ry="9" fill="#c8ddb8" opacity="0.7"/>
<ellipse cx="787" cy="806" rx="9" ry="5" fill="#d4e5c6" opacity="0.6"/>
<ellipse cx="859" cy="903" rx="13" ry="8" fill="#dae9ce" opacity="0.6"/>
<ellipse cx="880" cy="859" rx="11" ry="3" fill="#cde1be" opacity="0.7"/>
<ellipse cx="1248" cy="870" rx="8" ry="4" fill="#c8ddb8" opacity="0.7"/>
<ellipse cx="1020" cy="891" rx="5" ry="9" fill="#dae9ce" opacity="0.5"/>
<ellipse cx="818" cy="628" rx="10" ry="7" fill="#dae9ce" opacity="0.4"/>
<ellipse cx="1330" cy="499" rx="4" ry="7" fill="#dae9ce" opacity="0.6"/>
<ellipse cx="897" cy="722" rx="8" ry="7" fill="#d4e5c6" opacity="0.6"/>
<ellipse cx="964" cy="883" rx="12" ry="7" fill="#dae9ce" opacity="0.7"/>
<ellipse cx="1452" cy="419" rx="11" ry="9" fill="#c8ddb8" opacity="0.4"/>
<ellipse cx="1463" cy="630" rx="12" ry="4" fill="#dae9ce" opacity="0.4"/>
<ellipse cx="1101" cy="865" rx="13" ry="3" fill="#d4e5c6" opacity="0.6"/>
<ellipse cx="1003" cy="906" rx="5" ry="8" fill="#dae9ce" opacity="0.6"/>
<ellipse cx="809" cy="927" rx="5" ry="5" fill="#dae9ce" opacity="0.6"/>
<ellipse cx="1211" cy="543" rx="12" ry="6" fill="#cde1be" opacity="0.5"/>
<ellipse cx="876" cy="606" rx="11" ry="5" fill="#c8ddb8" opacity="0.4"/>
<ellipse cx="949" cy="722" rx="10" ry="9" fill="#cde1be" opacity="0.6"/>
<ellipse cx="1444" cy="589" rx="10" ry="4" fill="#c8ddb8" opacity="0.5"/>
<ellipse cx="1239" cy="901" rx="11" ry="4" fill="#cde1be" opacity="0.4"/>
<ellipse cx="1062" cy="818" rx="9" ry="5" fill="#c8ddb8" opacity="0.7"/>
<ellipse cx="982" cy="740" rx="11" ry="8" fill="#c8ddb8" opacity="0.6"/>
<ellipse cx="951" cy="539" rx="6" ry="8" fill="#c8ddb8" opacity="0.4"/>
<ellipse cx="1121" cy="740" rx="11" ry="7" fill="#dae9ce" opacity="0.4"/>
<ellipse cx="1138" cy="660" rx="12" ry="8" fill="#cde1be" opacity="0.5"/>
<ellipse cx="1389" cy="527" rx="12" ry="7" fill="#cde1be" opacity="0.6"/>
<ellipse cx="1335" cy="672" rx="7" ry="7" fill="#dae9ce" opacity="0.5"/>
<ellipse cx="1278" cy="957" rx="6" ry="9" fill="#dae9ce" opacity="0.6"/>
<ellipse cx="814" cy="674" rx="12" ry="5" fill="#d4e5c6" opacity="0.6"/>
<ellipse cx="942" cy="515" rx="5" ry="8" fill="#cde1be" opacity="0.4"/>
<ellipse cx="1061" cy="932" rx="8" ry="8" fill="#d4e5c6" opacity="0.7"/>
<ellipse cx="1411" cy="900" rx="5" ry="8" fill="#cde1be" opacity="0.7"/>
<ellipse cx="858" cy="612" rx="9" ry="6" fill="#d4e5c6" opacity="0.4"/>
<ellipse cx="817" cy="871" rx="7" ry="7" fill="#cde1be" opacity="0.6"/>
<ellipse cx="935" cy="704" rx="10" ry="4" fill="#dae9ce" opacity="0.4"/>
<ellipse cx="1091" cy="895" rx="7" ry="8" fill="#cde1be" opacity="0.7"/>
<ellipse cx="1259" cy="632" rx="9" ry="5" fill="#dae9ce" opacity="0.7"/>
<ellipse cx="895" cy="701" rx="5" ry="7" fill="#d4e5c6" opacity="0.5"/>
<ellipse cx="871" cy="586" rx="9" ry="4" fill="#dae9ce" opacity="0.5"/>
<ellipse cx="1275" cy="805" rx="13" ry="4" fill="#cde1be" opacity="0.7"/>
<ellipse cx="1135" cy="558" rx="7" ry="4" fill="#cde1be" opacity="0.7"/>
<ellipse cx="1446" cy="749" rx="9" ry="4" fill="#c8ddb8" opacity="0.6"/>
<ellipse cx="1035" cy="573" rx="10" ry="5" fill="#dae9ce" opacity="0.4"/>
<ellipse cx="1332" cy="656" rx="4" ry="5" fill="#c8ddb8" opacity="0.4"/>
<ellipse cx="1000" cy="572" rx="7" ry="4" fill="#c8ddb8" opacity="0.6"/>
<ellipse cx="1230" cy="681" rx="11" ry="6" fill="#d4e5c6" opacity="0.7"/>
<ellipse cx="1309" cy="446" rx="8" ry="6" fill="#cde1be" opacity="0.4"/>
<ellipse cx="1084" cy="400" rx="9" ry="5" fill="#dae9ce" opacity="0.7"/>
<ellipse cx="1441" cy="692" rx="6" ry="4" fill="#cde1be" opacity="0.4"/>
<ellipse cx="802" cy="579" rx="6" ry="4" fill="#dae9ce" opacity="0.4"/>
<ellipse cx="1482" cy="570" rx="6" ry="9" fill="#cde1be" opacity="0.6"/>
<ellipse cx="858" cy="728" rx="5" ry="8" fill="#d4e5c6" opacity="0.6"/>
<ellipse cx="1251" cy="692" rx="12" ry="5" fill="#dae9ce" opacity="0.6"/>
<ellipse cx="1018" cy="862" rx="10" ry="6" fill="#d4e5c6" opacity="0.5"/>
<ellipse cx="1422" cy="758" rx="7" ry="8" fill="#cde1be" opacity="0.7"/>
<ellipse cx="1201" cy="523" rx="8" ry="3" fill="#cde1be" opacity="0.4"/>
<ellipse cx="1342" cy="485" rx="11" ry="7" fill="#d4e5c6" opacity="0.7"/>
<ellipse cx="1126" cy="803" rx="13" ry="3" fill="#c8ddb8" opacity="0.5"/>
<ellipse cx="1331" cy="575" rx="5" ry="7" fill="#dae9ce" opacity="0.4"/>
<ellipse cx="1114" cy="886" rx="6" ry="5" fill="#c8ddb8" opacity="0.4"/>
<ellipse cx="1042" cy="934" rx="13" ry="8" fill="#c8ddb8" opacity="0.7"/>
<ellipse cx="1189" cy="385" rx="5" ry="5" fill="#cde1be" opacity="0.5"/>
<ellipse cx="1163" cy="467" rx="8" ry="4" fill="#dae9ce" opacity="0.7"/>
<ellipse cx="1003" cy="673" rx="11" ry="5" fill="#d4e5c6" opacity="0.7"/>
<ellipse cx="1132" cy="824" rx="11" ry="4" fill="#dae9ce" opacity="0.7"/>
<ellipse cx="826" cy="777" rx="11" ry="6" fill="#cde1be" opacity="0.7"/>
<ellipse cx="804" cy="725" rx="8" ry="5" fill="#dae9ce" opacity="0.4"/>
<ellipse cx="1292" cy="916" rx="8" ry="7" fill="#c8ddb8" opacity="0.4"/>
<ellipse cx="1325" cy="439" rx="9" ry="6" fill="#dae9ce" opacity="0.6"/>
<ellipse cx="1015" cy="857" rx="9" ry="7" fill="#d4e5c6" opacity="0.5"/>
<ellipse cx="950" cy="768" rx="10" ry="8" fill="#c8ddb8" opacity="0.6"/>
<ellipse cx="1318" cy="383" rx="12" ry="9" fill="#c8ddb8" opacity="0.6"/>
<ellipse cx="1327" cy="831" rx="7" ry="8" fill="#cde1be" opacity="0.4"/>
<ellipse cx="900" cy="691" rx="12" ry="7" fill="#d4e5c6" opacity="0.5"/>
<ellipse cx="971" cy="465" rx="5" ry="3" fill="#cde1be" opacity="0.7"/>
<ellipse cx="926" cy="811" rx="4" ry="5" fill="#d4e5c6" opacity="0.6"/>
<ellipse cx="1386" cy="827" rx="12" ry="6" fill="#dae9ce" opacity="0.6"/>
<ellipse cx="1458" cy="880" rx="12" ry="5" fill="#d4e5c6" opacity="0.4"/>
<ellipse cx="920" cy="651" rx="13" ry="7" fill="#c8ddb8" opacity="0.4"/>
<ellipse cx="962" cy="580" rx="13" ry="7" fill="#c8ddb8" opacity="0.6"/>
<ellipse cx="780" cy="824" rx="5" ry="8" fill="#d4e5c6" opacity="0.6"/>
<ellipse cx="938" cy="583" rx="6" ry="6" fill="#dae9ce" opacity="0.6"/>
<ellipse cx="1363" cy="178" rx="12" ry="6" fill="#cde1be" opacity="0.5"/>
<ellipse cx="907" cy="531" rx="7" ry="8" fill="#d4e5c6" opacity="0.6"/>
<ellipse cx="1289" cy="578" rx="12" ry="7" fill="#d4e5c6" opacity="0.7"/>
<ellipse cx="1173" cy="414" rx="7" ry="4" fill="#cde1be" opacity="0.7"/>
<ellipse cx="1206" cy="623" rx="12" ry="7" fill="#cde1be" opacity="0.6"/>
<ellipse cx="1370" cy="445" rx="8" ry="8" fill="#d4e5c6" opacity="0.4"/>
<ellipse cx="959" cy="670" rx="8" ry="7" fill="#cde1be" opacity="0.5"/>
<ellipse cx="1312" cy="776" rx="9" ry="6" fill="#d4e5c6" opacity="0.5"/>
<ellipse cx="1232" cy="740" rx="12" ry="5" fill="#d4e5c6" opacity="0.6"/>
<ellipse cx="896" cy="705" rx="9" ry="6" fill="#d4e5c6" opacity="0.4"/>
<ellipse cx="1419" cy="545" rx="4" ry="8" fill="#dae9ce" opacity="0.5"/>
<ellipse cx="907" cy="726" rx="9" ry="6" fill="#c8ddb8" opacity="0.5"/>
<ellipse cx="1256" cy="757" rx="8" ry="4" fill="#d4e5c6" opacity="0.5"/>
<ellipse cx="1411" cy="951" rx="10" ry="8" fill="#dae9ce" opacity="0.4"/>
<ellipse cx="966" cy="852" rx="11" ry="9" fill="#dae9ce" opacity="0.5"/>
<ellipse cx="952" cy="710" rx="6" ry="4" fill="#dae9ce" opacity="0.7"/>
<ellipse cx="1243" cy="439" rx="7" ry="7" fill="#dae9ce" opacity="0.5"/>
<ellipse cx="1427" cy="760" rx="9" ry="9" fill="#dae9ce" opacity="0.4"/>
<ellipse cx="1020" cy="429" rx="10" ry="5" fill="#dae9ce" opacity="0.7"/>
<ellipse cx="1096" cy="756" rx="6" ry="3" fill="#d4e5c6" opacity="0.6"/>
<ellipse cx="1222" cy="923" rx="7" ry="4" fill="#d4e5c6" opacity="0.7"/>
<ellipse cx="1008" cy="686" rx="13" ry="8" fill="#d4e5c6" opacity="0.4"/>
<ellipse cx="1196" cy="398" rx="5" ry="6" fill="#d4e5c6" opacity="0.4"/>
<ellipse cx="1435" cy="510" rx="11" ry="7" fill="#dae9ce" opacity="0.4"/>
<ellipse cx="862" cy="564" rx="9" ry="8" fill="#dae9ce" opacity="0.6"/>
<ellipse cx="932" cy="974" rx="9" ry="3" fill="#cde1be" opacity="0.5"/>
<ellipse cx="1435" cy="871" rx="9" ry="4" fill="#d4e5c6" opacity="0.7"/>
<ellipse cx="1283" cy="938" rx="10" ry="4" fill="#c8ddb8" opacity="0.4"/>
<ellipse cx="1149" cy="972" rx="4" ry="6" fill="#d4e5c6" opacity="0.5"/>
<ellipse cx="1252" cy="819" rx="11" ry="9" fill="#c8ddb8" opacity="0.7"/>
<ellipse cx="1193" cy="856" rx="10" ry="7" fill="#c8ddb8" opacity="0.6"/>
<ellipse cx="828" cy="570" rx="11" ry="5" fill="#c8ddb8" opacity="0.5"/>
<ellipse cx="994" cy="716" rx="12" ry="7" fill="#c8ddb8" opacity="0.5"/>
<ellipse cx="1186" cy="574" rx="13" ry="8" fill="#dae9ce" opacity="0.6"/>
<ellipse cx="1274" cy="380" rx="9" ry="6" fill="#cde1be" opacity="0.4"/>
<ellipse cx="1162" cy="654" rx="9" ry="4" fill="#cde1be" opacity="0.4"/>
<ellipse cx="1470" cy="396" rx="4" ry="6" fill="#d4e5c6" opacity="0.6"/>
<ellipse cx="1432" cy="363" rx="6" ry="7" fill="#dae9ce" opacity="0.6"/>
<ellipse cx="1348" cy="929" rx="5" ry="5" fill="#dae9ce" opacity="0.4"/>
<ellipse cx="1475" cy="744" rx="7" ry="9" fill="#d4e5c6" opacity="0.7"/>
<ellipse cx="850" cy="882" rx="8" ry="5" fill="#c8ddb8" opacity="0.4"/>
<ellipse cx="1262" cy="225" rx="5" ry="7" fill="#dae9ce" opacity="0.5"/>
<ellipse cx="1024" cy="826" rx="4" ry="6" fill="#cde1be" opacity="0.6"/>
<ellipse cx="1374" cy="866" rx="12" ry="5" fill="#dae9ce" opacity="0.7"/>
<ellipse cx="1299" cy="395" rx="5" ry="9" fill="#cde1be" opacity="0.5"/>
<ellipse cx="1331" cy="765" rx="4" ry="8" fill="#cde1be" opacity="0.6"/>
<ellipse cx="1404" cy="395" rx="5" ry="7" fill="#dae9ce" opacity="0.7"/>
<ellipse cx="1174" cy="694" rx="4" ry="5" fill="#c8ddb8" opacity="0.5"/>
<ellipse cx="1382" cy="739" rx="8" ry="8" fill="#d4e5c6" opacity="0.4"/>
<ellipse cx="1095" cy="584" rx="10" ry="5" fill="#c8ddb8" opacity="0.5"/>
<ellipse cx="861" cy="876" rx="9" ry="6" fill="#dae9ce" opacity="0.5"/>
<ellipse cx="1194" cy="351" rx="6" ry="6" fill="#d4e5c6" opacity="0.5"/>
<ellipse cx="802" cy="949" rx="8" ry="6" fill="#dae9ce" opacity="0.6"/>
<ellipse cx="1331" cy="645" rx="4" ry="7" fill="#dae9ce" opacity="0.4"/>
<ellipse cx="1249" cy="543" rx="5" ry="6" fill="#d4e5c6" opacity="0.4"/>
<ellipse cx="872" cy="596" rx="5" ry="8" fill="#dae9ce" opacity="0.7"/>
<ellipse cx="1302" cy="907" rx="4" ry="7" fill="#d4e5c6" opacity="0.5"/>
<ellipse cx="1024" cy="167" rx="12" ry="8" fill="#cde1be" opacity="0.6"/>
<ellipse cx="918" cy="927" rx="6" ry="8" fill="#cde1be" opacity="0.4"/>
<ellipse cx="927" cy="748" rx="11" ry="6" fill="#d4e5c6" opacity="0.4"/>
<ellipse cx="1068" cy="920" rx="12" ry="3" fill="#d4e5c6" opacity="0.7"/>
<ellipse cx="961" cy="499" rx="7" ry="6" fill="#cde1be" opacity="0.5"/>
<ellipse cx="769" cy="837" rx="5" ry="5" fill="#dae9ce" opacity="0.5"/>
<ellipse cx="1263" cy="429" rx="9" ry="8" fill="#cde1be" opacity="0.4"/>
<ellipse cx="1030" cy="688" rx="11" ry="4" fill="#dae9ce" opacity="0.6"/>
<ellipse cx="888" cy="499" rx="8" ry="8" fill="#dae9ce" opacity="0.7"/>
<ellipse cx="1099" cy="913" rx="11" ry="8" fill="#cde1be" opacity="0.7"/>
<ellipse cx="1251" cy="712" rx="6" ry="5" fill="#d4e5c6" opacity="0.7"/>
<ellipse cx="1243" cy="401" rx="5" ry="6" fill="#dae9ce" opacity="0.6"/>
<ellipse cx="1271" cy="624" rx="7" ry="3" fill="#dae9ce" opacity="0.4"/>
<ellipse cx="1026" cy="642" rx="12" ry="8" fill="#c8ddb8" opacity="0.5"/>
<ellipse cx="852" cy="558" rx="10" ry="9" fill="#cde1be" opacity="0.5"/>
<ellipse cx="1045" cy="747" rx="5" ry="8" fill="#cde1be" opacity="0.5"/>
<ellipse cx="1035" cy="504" rx="5" ry="8" fill="#dae9ce" opacity="0.4"/>
<ellipse cx="1077" cy="624" rx="7" ry="3" fill="#cde1be" opacity="0.7"/>
<ellipse cx="949" cy="482" rx="11" ry="8" fill="#cde1be" opacity="0.5"/>
<ellipse cx="1280" cy="735" rx="12" ry="5" fill="#d4e5c6" opacity="0.5"/>
<ellipse cx="1337" cy="789" rx="8" ry="8" fill="#dae9ce" opacity="0.5"/>
<ellipse cx="963" cy="840" rx="11" ry="8" fill="#d4e5c6" opacity="0.5"/>
<ellipse cx="863" cy="910" rx="9" ry="3" fill="#c8ddb8" opacity="0.7"/>
<ellipse cx="1034" cy="725" rx="9" ry="8" fill="#c8ddb8" opacity="0.4"/>
<ellipse cx="1240" cy="923" rx="11" ry="7" fill="#d4e5c6" opacity="0.6"/>
<ellipse cx="920" cy="564" rx="8" ry="8" fill="#dae9ce" opacity="0.6"/>
<ellipse cx="1309" cy="910" rx="5" ry="4" fill="#dae9ce" opacity="0.7"/>
<ellipse cx="962" cy="958" rx="9" ry="6" fill="#c8ddb8" opacity="0.5"/>
<ellipse cx="1107" cy="667" rx="6" ry="6" fill="#dae9ce" opacity="0.5"/>
<ellipse cx="1206" cy="384" rx="4" ry="8" fill="#dae9ce" opacity="0.7"/>
<ellipse cx="1443" cy="668" rx="12" ry="5" fill="#dae9ce" opacity="0.4"/>
<ellipse cx="1026" cy="879" rx="12" ry="5" fill="#dae9ce" opacity="0.6"/>
<ellipse cx="1201" cy="839" rx="12" ry="9" fill="#c8ddb8" opacity="0.4"/>
<ellipse cx="1215" cy="627" rx="10" ry="5" fill="#d4e5c6" opacity="0.7"/>
<ellipse cx="1003" cy="552" rx="9" ry="8" fill="#dae9ce" opacity="0.7"/>
<ellipse cx="1028" cy="546" rx="13" ry="4" fill="#c8ddb8" opacity="0.4"/>
<ellipse cx="1098" cy="531" rx="7" ry="5" fill="#cde1be" opacity="0.4"/>
<ellipse cx="902" cy="917" rx="7" ry="6" fill="#cde1be" opacity="0.6"/>
<ellipse cx="1287" cy="845" rx="5" ry="8" fill="#d4e5c6" opacity="0.7"/>
<ellipse cx="1400" cy="797" rx="10" ry="6" fill="#d4e5c6" opacity="0.4"/>
<ellipse cx="1160" cy="821" rx="8" ry="8" fill="#c8ddb8" opacity="0.4"/>
<ellipse cx="873" cy="450" rx="10" ry="4" fill="#cde1be" opacity="0.6"/>
<ellipse cx="1217" cy="727" rx="4" ry="3" fill="#c8ddb8" opacity="0.7"/>
<ellipse cx="1358" cy="877" rx="8" ry="6" fill="#dae9ce" opacity="0.5"/>
<ellipse cx="1416" cy="516" rx="12" ry="6" fill="#c8ddb8" opacity="0.6"/>
<ellipse cx="978" cy="380" rx="6" ry="6" fill="#d4e5c6" opacity="0.6"/>
<ellipse cx="874" cy="478" rx="7" ry="5" fill="#cde1be" opacity="0.7"/>
<ellipse cx="985" cy="792" rx="6" ry="8" fill="#dae9ce" opacity="0.6"/>
<ellipse cx="1238" cy="495" rx="7" ry="5" fill="#dae9ce" opacity="0.6"/>
<ellipse cx="1412" cy="435" rx="11" ry="5" fill="#d4e5c6" opacity="0.7"/>
<ellipse cx="1460" cy="399" rx="13" ry="8" fill="#dae9ce" opacity="0.7"/>
<ellipse cx="898" cy="776" rx="12" ry="8" fill="#dae9ce" opacity="0.5"/>
<ellipse cx="1221" cy="947" rx="5" ry="3" fill="#c8ddb8" opacity="0.6"/>
<ellipse cx="782" cy="923" rx="10" ry="7" fill="#c8ddb8" opacity="0.5"/>
<ellipse cx="825" cy="917" rx="4" ry="4" fill="#d4e5c6" opacity="0.5"/>
<ellipse cx="1170" cy="894" rx="9" ry="6" fill="#dae9ce" opacity="0.6"/>
<ellipse cx="1446" cy="938" rx="13" ry="7" fill="#cde1be" opacity="0.4"/>
<ellipse cx="910" cy="960" rx="6" ry="4" fill="#cde1be" opacity="0.5"/>
<ellipse cx="1158" cy="462" rx="10" ry="6" fill="#dae9ce" opacity="0.6"/>
<ellipse cx="893" cy="428" rx="10" ry="8" fill="#c8ddb8" opacity="0.5"/>
<ellipse cx="1475" cy="964" rx="4" ry="4" fill="#dae9ce" opacity="0.5"/>
<ellipse cx="1455" cy="879" rx="9" ry="6" fill="#c8ddb8" opacity="0.7"/>
<ellipse cx="1387" cy="638" rx="11" ry="8" fill="#cde1be" opacity="0.5"/>
<ellipse cx="930" cy="422" rx="10" ry="9" fill="#cde1be" opacity="0.6"/>
<ellipse cx="1152" cy="767" rx="5" ry="9" fill="#cde1be" opacity="0.6"/>
<ellipse cx="1125" cy="736" rx="13" ry="9" fill="#cde1be" opacity="0.7"/>
<ellipse cx="1006" cy="601" rx="12" ry="5" fill="#cde1be" opacity="0.5"/>
<ellipse cx="1218" cy="197" rx="5" ry="8" fill="#c8ddb8" opacity="0.7"/>
<ellipse cx="1095" cy="708" rx="7" ry="5" fill="#cde1be" opacity="0.7"/>
<ellipse cx="1059" cy="683" rx="12" ry="6" fill="#d4e5c6" opacity="0.7"/>
<ellipse cx="1372" cy="485" rx="8" ry="8" fill="#c8ddb8" opacity="0.6"/>
<ellipse cx="1185" cy="665" rx="8" ry="8" fill="#d4e5c6" opacity="0.6"/>
<ellipse cx="1446" cy="679" rx="9" ry="8" fill="#d4e5c6" opacity="0.5"/>
<ellipse cx="1222" cy="470" rx="11" ry="3" fill="#d4e5c6" opacity="0.6"/>
<ellipse cx="882" cy="820" rx="5" ry="8" fill="#c8ddb8" opacity="0.7"/>
<ellipse cx="1280" cy="242" rx="9" ry="5" fill="#cde1be" opacity="0.5"/>
<ellipse cx="1440" cy="347" rx="9" ry="5" fill="#cde1be" opacity="0.5"/>
<ellipse cx="1321" cy="959" rx="10" ry="4" fill="#cde1be" opacity="0.6"/>
<ellipse cx="904" cy="844" rx="5" ry="7" fill="#dae9ce" opacity="0.6"/>
<ellipse cx="1364" cy="928" rx="12" ry="5" fill="#c8ddb8" opacity="0.7"/>
<ellipse cx="1305" cy="887" rx="10" ry="3" fill="#c8ddb8" opacity="0.5"/>
<ellipse cx="1389" cy="613" rx="5" ry="9" fill="#c8ddb8" opacity="0.6"/>
<ellipse cx="788" cy="773" rx="4" ry="9" fill="#c8ddb8" opacity="0.6"/>
<ellipse cx="834" cy="968" rx="12" ry="9" fill="#dae9ce" opacity="0.7"/>
<ellipse cx="981" cy="801" rx="4" ry="6" fill="#dae9ce" opacity="0.7"/>
<ellipse cx="825" cy="572" rx="7" ry="8" fill="#d4e5c6" opacity="0.6"/>
<ellipse cx="1113" cy="899" rx="12" ry="5" fill="#d4e5c6" opacity="0.7"/>
<ellipse cx="857" cy="649" rx="4" ry="8" fill="#dae9ce" opacity="0.5"/>
<ellipse cx="774" cy="790" rx="9" ry="7" fill="#d4e5c6" opacity="0.4"/>
<ellipse cx="1423" cy="792" rx="12" ry="8" fill="#d4e5c6" opacity="0.4"/>
<ellipse cx="1371" cy="374" rx="12" ry="6" fill="#f4f1ea" opacity=".7"/>
<ellipse cx="1220" cy="575" rx="14" ry="6" fill="#f4f1ea" opacity=".7"/>
<ellipse cx="1133" cy="569" rx="7" ry="9" fill="#f4f1ea" opacity=".7"/>
<ellipse cx="914" cy="746" rx="13" ry="7" fill="#f4f1ea" opacity=".7"/>
<ellipse cx="1453" cy="343" rx="13" ry="8" fill="#f4f1ea" opacity=".7"/>
<ellipse cx="1069" cy="502" rx="9" ry="8" fill="#f4f1ea" opacity=".7"/>
<ellipse cx="1082" cy="649" rx="7" ry="5" fill="#f4f1ea" opacity=".7"/>
<ellipse cx="1290" cy="232" rx="13" ry="7" fill="#f4f1ea" opacity=".7"/>
<ellipse cx="1372" cy="179" rx="12" ry="7" fill="#f4f1ea" opacity=".7"/>
<ellipse cx="1261" cy="324" rx="12" ry="5" fill="#f4f1ea" opacity=".7"/>
<ellipse cx="1189" cy="946" rx="10" ry="5" fill="#f4f1ea" opacity=".7"/>
<ellipse cx="938" cy="493" rx="12" ry="8" fill="#f4f1ea" opacity=".7"/>
<ellipse cx="1046" cy="639" rx="8" ry="6" fill="#f4f1ea" opacity=".7"/>
<ellipse cx="992" cy="930" rx="8" ry="6" fill="#f4f1ea" opacity=".7"/>
<ellipse cx="1212" cy="340" rx="6" ry="6" fill="#f4f1ea" opacity=".7"/>
<ellipse cx="1359" cy="460" rx="8" ry="5" fill="#f4f1ea" opacity=".7"/>
<ellipse cx="1198" cy="380" rx="10" ry="7" fill="#f4f1ea" opacity=".7"/>
<ellipse cx="1116" cy="505" rx="11" ry="4" fill="#f4f1ea" opacity=".7"/>
<ellipse cx="852" cy="490" rx="13" ry="7" fill="#f4f1ea" opacity=".7"/>
<ellipse cx="1384" cy="594" rx="14" ry="4" fill="#f4f1ea" opacity=".7"/>
<ellipse cx="1390" cy="369" rx="7" ry="7" fill="#f4f1ea" opacity=".7"/>
<ellipse cx="1065" cy="971" rx="13" ry="8" fill="#f4f1ea" opacity=".7"/>
<ellipse cx="1081" cy="422" rx="7" ry="5" fill="#f4f1ea" opacity=".7"/>
<ellipse cx="954" cy="404" rx="6" ry="6" fill="#f4f1ea" opacity=".7"/>
<ellipse cx="1449" cy="842" rx="11" ry="9" fill="#f4f1ea" opacity=".7"/>
<ellipse cx="1147" cy="973" rx="5" ry="7" fill="#f4f1ea" opacity=".7"/>
<ellipse cx="1335" cy="375" rx="12" ry="8" fill="#f4f1ea" opacity=".7"/>
<ellipse cx="831" cy="697" rx="9" ry="8" fill="#f4f1ea" opacity=".7"/>
<ellipse cx="872" cy="701" rx="5" ry="4" fill="#f4f1ea" opacity=".7"/>
<ellipse cx="1075" cy="443" rx="9" ry="5" fill="#f4f1ea" opacity=".7"/>
<ellipse cx="1481" cy="498" rx="9" ry="6" fill="#f4f1ea" opacity=".7"/>
<ellipse cx="1435" cy="317" rx="13" ry="6" fill="#f4f1ea" opacity=".7"/>
<ellipse cx="1196" cy="353" rx="12" ry="5" fill="#f4f1ea" opacity=".7"/>
<ellipse cx="1330" cy="697" rx="13" ry="9" fill="#f4f1ea" opacity=".7"/>
<ellipse cx="1348" cy="912" rx="6" ry="4" fill="#f4f1ea" opacity=".7"/>
<ellipse cx="1348" cy="446" rx="11" ry="8" fill="#f4f1ea" opacity=".7"/>
<ellipse cx="1442" cy="583" rx="13" ry="9" fill="#f4f1ea" opacity=".7"/>
<ellipse cx="1319" cy="462" rx="13" ry="6" fill="#f4f1ea" opacity=".7"/>
<ellipse cx="1413" cy="473" rx="9" ry="4" fill="#f4f1ea" opacity=".7"/>
<ellipse cx="840" cy="917" rx="9" ry="8" fill="#f4f1ea" opacity=".7"/>
<ellipse cx="1105" cy="752" rx="10" ry="5" fill="#f4f1ea" opacity=".7"/>
<ellipse cx="991" cy="678" rx="6" ry="9" fill="#f4f1ea" opacity=".7"/>
<ellipse cx="808" cy="620" rx="13" ry="8" fill="#f4f1ea" opacity=".7"/>
<ellipse cx="1273" cy="494" rx="6" ry="5" fill="#f4f1ea" opacity=".7"/>
<ellipse cx="1243" cy="182" rx="8" ry="9" fill="#f4f1ea" opacity=".7"/>
<ellipse cx="945" cy="854" rx="5" ry="5" fill="#f4f1ea" opacity=".7"/>
<ellipse cx="800" cy="756" rx="10" ry="8" fill="#f4f1ea" opacity=".7"/>
<ellipse cx="1350" cy="749" rx="6" ry="6" fill="#f4f1ea" opacity=".7"/>
<ellipse cx="788" cy="810" rx="8" ry="6" fill="#f4f1ea" opacity=".7"/>
<ellipse cx="1406" cy="968" rx="10" ry="6" fill="#f4f1ea" opacity=".7"/>
<ellipse cx="1392" cy="848" rx="7" ry="6" fill="#f4f1ea" opacity=".7"/>
<ellipse cx="1447" cy="962" rx="13" ry="6" fill="#f4f1ea" opacity=".7"/>
<ellipse cx="882" cy="886" rx="7" ry="7" fill="#f4f1ea" opacity=".7"/>
<ellipse cx="1044" cy="851" rx="8" ry="6" fill="#f4f1ea" opacity=".7"/>
<ellipse cx="1375" cy="752" rx="14" ry="5" fill="#f4f1ea" opacity=".7"/>
<ellipse cx="859" cy="712" rx="9" ry="8" fill="#f4f1ea" opacity=".7"/>
<ellipse cx="1098" cy="200" rx="9" ry="5" fill="#f4f1ea" opacity=".7"/>
<ellipse cx="1340" cy="819" rx="13" ry="5" fill="#f4f1ea" opacity=".7"/>
<ellipse cx="1233" cy="745" rx="7" ry="7" fill="#f4f1ea" opacity=".7"/>
<ellipse cx="1081" cy="713" rx="13" ry="5" fill="#f4f1ea" opacity=".7"/>
<ellipse cx="1107" cy="722" rx="8" ry="6" fill="#f4f1ea" opacity=".7"/>
<ellipse cx="1030" cy="840" rx="8" ry="8" fill="#f4f1ea" opacity=".7"/>
<ellipse cx="878" cy="483" rx="12" ry="7" fill="#f4f1ea" opacity=".7"/>
<ellipse cx="1479" cy="418" rx="8" ry="5" fill="#f4f1ea" opacity=".7"/>
<ellipse cx="1119" cy="262" rx="12" ry="6" fill="#f4f1ea" opacity=".7"/>
<ellipse cx="794" cy="573" rx="9" ry="5" fill="#f4f1ea" opacity=".7"/>
<ellipse cx="982" cy="706" rx="14" ry="7" fill="#f4f1ea" opacity=".7"/>
<ellipse cx="1069" cy="527" rx="8" ry="5" fill="#f4f1ea" opacity=".7"/>
<ellipse cx="1434" cy="933" rx="12" ry="9" fill="#f4f1ea" opacity=".7"/>
<ellipse cx="1173" cy="764" rx="9" ry="7" fill="#f4f1ea" opacity=".7"/>
<ellipse cx="1374" cy="736" rx="12" ry="7" fill="#f4f1ea" opacity=".7"/>
<ellipse cx="1012" cy="814" rx="13" ry="5" fill="#f4f1ea" opacity=".7"/>
<ellipse cx="773" cy="911" rx="8" ry="8" fill="#f4f1ea" opacity=".7"/>
<ellipse cx="791" cy="912" rx="5" ry="6" fill="#f4f1ea" opacity=".7"/>
<ellipse cx="953" cy="685" rx="8" ry="8" fill="#f4f1ea" opacity=".7"/>
<ellipse cx="918" cy="599" rx="14" ry="7" fill="#f4f1ea" opacity=".7"/>
<ellipse cx="1398" cy="479" rx="14" ry="8" fill="#f4f1ea" opacity=".7"/>
<ellipse cx="948" cy="787" rx="7" ry="7" fill="#f4f1ea" opacity=".7"/>
<ellipse cx="806" cy="845" rx="7" ry="8" fill="#f4f1ea" opacity=".7"/>
<ellipse cx="1103" cy="319" rx="13" ry="6" fill="#f4f1ea" opacity=".7"/>
<ellipse cx="953" cy="892" rx="14" ry="6" fill="#f4f1ea" opacity=".7"/>
<ellipse cx="1335" cy="637" rx="7" ry="6" fill="#f4f1ea" opacity=".7"/>
<ellipse cx="994" cy="710" rx="9" ry="6" fill="#f4f1ea" opacity=".7"/>
<ellipse cx="1244" cy="444" rx="6" ry="6" fill="#f4f1ea" opacity=".7"/>
<ellipse cx="1387" cy="356" rx="7" ry="9" fill="#f4f1ea" opacity=".7"/>
<ellipse cx="881" cy="942" rx="8" ry="5" fill="#f4f1ea" opacity=".7"/>
<ellipse cx="1285" cy="886" rx="9" ry="5" fill="#f4f1ea" opacity=".7"/>
<ellipse cx="1271" cy="764" rx="8" ry="6" fill="#f4f1ea" opacity=".7"/>
<ellipse cx="1315" cy="728" rx="11" ry="9" fill="#f4f1ea" opacity=".7"/>
<ellipse cx="939" cy="953" rx="11" ry="6" fill="#f4f1ea" opacity=".7"/>
<ellipse cx="1255" cy="409" rx="9" ry="8" fill="#f4f1ea" opacity=".7"/>
<ellipse cx="1345" cy="648" rx="12" ry="8" fill="#f4f1ea" opacity=".7"/>
<ellipse cx="1044" cy="222" rx="13" ry="4" fill="#f4f1ea" opacity=".7"/>
<ellipse cx="1084" cy="244" rx="10" ry="8" fill="#f4f1ea" opacity=".7"/>
<ellipse cx="789" cy="565" rx="9" ry="7" fill="#f4f1ea" opacity=".7"/>
<ellipse cx="1383" cy="454" rx="8" ry="5" fill="#f4f1ea" opacity=".7"/>
<ellipse cx="1151" cy="818" rx="6" ry="6" fill="#f4f1ea" opacity=".7"/>
<ellipse cx="1050" cy="679" rx="11" ry="9" fill="#f4f1ea" opacity=".7"/>
<ellipse cx="1270" cy="918" rx="12" ry="7" fill="#f4f1ea" opacity=".7"/>
<ellipse cx="1411" cy="865" rx="12" ry="6" fill="#f4f1ea" opacity=".7"/>
<ellipse cx="967" cy="865" rx="5" ry="6" fill="#f4f1ea" opacity=".7"/>
<ellipse cx="1367" cy="400" rx="9" ry="6" fill="#f4f1ea" opacity=".7"/>
<ellipse cx="1225" cy="836" rx="6" ry="6" fill="#f4f1ea" opacity=".7"/>
<ellipse cx="1380" cy="497" rx="14" ry="5" fill="#f4f1ea" opacity=".7"/>
<ellipse cx="1389" cy="552" rx="12" ry="7" fill="#f4f1ea" opacity=".7"/>
<ellipse cx="953" cy="855" rx="6" ry="9" fill="#f4f1ea" opacity=".7"/>
<ellipse cx="1329" cy="361" rx="10" ry="6" fill="#f4f1ea" opacity=".7"/>
<ellipse cx="1101" cy="933" rx="9" ry="7" fill="#f4f1ea" opacity=".7"/>
<ellipse cx="1107" cy="504" rx="13" ry="7" fill="#f4f1ea" opacity=".7"/>
<ellipse cx="1404" cy="628" rx="13" ry="6" fill="#f4f1ea" opacity=".7"/>
<ellipse cx="783" cy="773" rx="11" ry="5" fill="#f4f1ea" opacity=".7"/>
<ellipse cx="920" cy="545" rx="13" ry="7" fill="#f4f1ea" opacity=".7"/>
<ellipse cx="1075" cy="627" rx="8" ry="6" fill="#f4f1ea" opacity=".7"/>
<ellipse cx="896" cy="727" rx="5" ry="7" fill="#f4f1ea" opacity=".7"/>
<ellipse cx="1311" cy="863" rx="10" ry="9" fill="#f4f1ea" opacity=".7"/>
<ellipse cx="1274" cy="600" rx="10" ry="4" fill="#f4f1ea" opacity=".7"/>
<ellipse cx="834" cy="771" rx="8" ry="9" fill="#f4f1ea" opacity=".7"/>
<ellipse cx="916" cy="919" rx="10" ry="5" fill="#f4f1ea" opacity=".7"/>
<ellipse cx="811" cy="635" rx="5" ry="8" fill="#f4f1ea" opacity=".7"/>
<ellipse cx="878" cy="781" rx="13" ry="5" fill="#f4f1ea" opacity=".7"/>
</g>
<path d="M764.0 161.0C884.0 161.0 1364.0 139.3 1484.0 161.0C1604.0 182.7 1485.9 269.4 1484.0 291.2C1482.1 313.0 1476.6 291.4 1472.6 291.8C1468.6 292.2 1464.4 292.7 1459.8 293.6C1455.2 294.5 1449.5 295.9 1445.2 297.3C1440.9 298.7 1437.9 300.4 1434.2 301.8C1430.5 303.2 1427.6 304.0 1423.3 305.5C1419.0 307.0 1413.2 309.2 1408.6 311.0C1404.0 312.8 1399.4 314.4 1395.8 316.5C1392.2 318.6 1389.4 321.4 1386.7 323.8C1384.0 326.2 1381.9 329.0 1379.4 331.1C1377.0 333.2 1374.5 335.0 1372.0 336.6C1369.5 338.2 1369.0 339.5 1364.7 341.0C1360.4 342.5 1351.9 343.9 1346.4 345.6C1340.9 347.3 1336.7 349.3 1331.8 351.1C1326.9 352.9 1321.8 354.9 1317.2 356.5C1312.6 358.1 1307.8 360.0 1304.4 360.8C1301.0 361.6 1298.0 361.1 1297.0 361.5C1296.0 361.9 1299.2 364.1 1298.3 363.2C1297.4 362.3 1294.1 358.9 1291.8 356.3C1289.5 353.7 1287.1 349.6 1284.6 347.4C1282.1 345.2 1279.0 343.2 1276.6 342.9C1274.2 342.6 1272.6 345.3 1270.2 345.5C1267.8 345.7 1264.8 344.6 1262.1 343.9C1259.4 343.1 1256.4 342.4 1254.1 341.0C1251.8 339.6 1250.1 337.3 1248.5 335.4C1246.9 333.5 1245.6 331.8 1244.5 329.8C1243.4 327.8 1243.4 324.6 1242.1 323.3C1240.8 322.0 1238.8 322.0 1236.5 322.1C1234.2 322.2 1231.1 323.6 1228.4 323.7C1225.7 323.8 1222.7 322.9 1220.4 323.0C1218.1 323.1 1216.2 323.6 1214.8 324.6C1213.4 325.6 1212.9 327.5 1212.1 329.0C1211.3 330.5 1211.6 332.5 1210.0 333.8C1208.4 335.1 1205.0 336.0 1202.7 337.0C1200.4 338.0 1198.6 338.7 1196.3 339.7C1194.0 340.7 1191.5 342.1 1189.1 342.9C1186.7 343.6 1184.2 343.4 1181.9 344.2C1179.6 344.9 1177.2 346.1 1175.5 347.4C1173.8 348.7 1173.1 350.6 1171.9 352.2C1170.7 353.8 1169.5 356.0 1168.2 357.1C1166.9 358.2 1165.8 358.3 1164.2 359.0C1162.6 359.7 1160.7 360.9 1158.6 361.1C1156.5 361.3 1153.3 361.0 1151.4 360.3C1149.5 359.6 1147.9 358.1 1147.4 356.7C1146.9 355.3 1148.3 353.8 1148.2 352.2C1148.1 350.6 1147.1 349.3 1146.6 347.4C1146.1 345.5 1145.7 343.1 1145.3 341.0C1144.9 338.9 1143.8 336.6 1144.1 334.6C1144.4 332.6 1157.9 326.3 1147.4 329.0C1136.9 331.7 1093.2 343.2 1081.2 350.9C1069.2 358.5 1077.3 371.9 1075.7 374.9C1074.1 377.9 1073.6 370.2 1071.6 368.7C1069.5 367.2 1065.9 366.2 1063.4 366.0C1060.9 365.8 1058.6 367.0 1056.5 367.3C1054.4 367.6 1052.8 368.0 1051.0 368.0C1049.2 368.0 1047.3 366.9 1045.5 367.3C1043.7 367.7 1041.4 368.7 1040.0 370.1C1038.6 371.5 1038.2 373.8 1037.3 375.6C1036.4 377.4 1034.7 378.6 1034.5 381.1C1034.3 383.6 1036.7 390.0 1036.2 390.7C1035.8 391.4 1033.0 387.3 1031.8 385.2C1030.6 383.1 1030.5 380.4 1029.1 378.3C1027.7 376.2 1025.3 372.8 1023.6 372.8C1021.9 372.8 1019.9 376.2 1018.8 378.3C1017.6 380.4 1016.8 382.9 1016.7 385.2C1016.6 387.5 1018.8 391.1 1018.1 392.0C1017.4 392.9 1013.8 392.5 1012.6 390.7C1011.5 388.9 1011.9 383.6 1011.2 381.1C1010.5 378.6 1010.1 376.5 1008.5 375.6C1006.9 374.7 1003.7 375.4 1001.6 375.6C999.5 375.8 998.8 376.4 996.1 376.9C993.4 377.3 988.9 377.7 985.2 378.3C981.6 378.9 977.6 379.5 974.2 380.4C970.8 381.3 967.4 382.6 964.6 383.8C961.9 385.1 959.8 386.8 957.7 387.9C955.6 389.0 953.6 389.5 952.2 390.7C950.8 391.9 949.0 393.7 949.5 394.8C950.0 395.9 953.2 396.6 955.0 397.5C956.8 398.4 958.9 399.2 960.5 400.3C962.1 401.4 964.8 403.6 964.6 404.4C964.4 405.2 961.2 405.7 959.1 405.1C957.0 404.5 954.3 402.3 952.2 401.0C950.1 399.7 946.4 398.4 946.7 397.5C947.0 396.6 954.8 396.0 954.2 395.9C953.6 395.8 946.9 396.5 943.3 396.8C939.6 397.1 936.0 397.1 932.3 397.7C928.6 398.3 925.0 399.5 921.3 400.4C917.6 401.3 913.6 402.0 910.3 403.2C906.9 404.4 903.6 406.0 901.2 407.8C898.8 409.6 897.2 411.9 895.7 414.2C894.2 416.5 892.9 419.4 892.0 421.5C891.1 423.6 892.0 425.2 890.2 427.0C888.4 428.8 883.5 430.7 881.1 432.5C878.7 434.3 877.4 436.5 875.6 437.9C873.8 439.3 871.9 441.0 870.1 440.7C868.3 440.4 865.7 437.5 864.6 436.1C863.5 434.7 864.3 431.3 863.7 432.5C863.1 433.7 861.8 439.8 860.9 443.4C860.0 447.0 859.1 450.1 858.2 454.4C857.3 458.7 856.9 464.4 855.5 469.0C854.1 473.6 851.8 477.8 850.0 481.8C848.2 485.8 846.6 489.4 844.5 492.8C842.4 496.2 839.7 499.2 837.2 502.0C834.8 504.8 832.2 506.9 829.8 509.3C827.3 511.7 824.6 514.6 822.5 516.6C820.4 518.6 819.6 520.0 817.0 521.0C814.4 522.0 808.9 521.3 807.0 522.8C805.1 524.3 804.9 527.7 805.7 530.1C806.5 532.5 809.7 536.4 811.9 537.1C814.1 537.8 816.5 534.1 818.9 534.2C821.3 534.3 826.2 536.4 826.2 537.5C826.2 538.6 821.3 540.2 818.9 541.1C816.5 542.0 813.7 541.7 811.9 542.9C810.1 544.1 809.8 546.2 807.9 548.4C806.0 550.5 804.3 553.3 800.6 555.8C796.9 558.2 790.2 561.0 785.9 563.1C781.6 565.2 778.6 566.9 775.0 568.6C771.4 570.3 765.8 641.0 764.0 573.1C762.2 505.2 764.0 229.7 764.0 161.0C764.0 92.3 644.0 161.0 764.0 161.0Z" fill="#aad3df"/>
<path d="M1017.7 161.0C997.0 161.6 1019.7 163.2 1020.5 164.7C1021.3 166.2 1022.6 168.3 1022.3 170.1C1022.0 171.9 1019.4 173.1 1018.6 175.6C1017.8 178.1 1017.9 182.1 1017.7 184.8C1017.6 187.6 1017.1 189.1 1017.7 192.1C1018.3 195.1 1020.3 200.0 1021.4 203.1C1022.5 206.2 1024.6 208.3 1024.1 210.4C1023.6 212.5 1019.8 213.8 1018.6 215.9C1017.4 218.0 1016.9 220.8 1016.8 223.2C1016.6 225.6 1016.5 228.7 1017.7 230.5C1018.9 232.3 1022.1 232.4 1024.1 234.2C1026.1 236.0 1027.9 239.4 1029.6 241.5C1031.3 243.6 1032.8 244.6 1034.2 247.0C1035.6 249.4 1036.7 253.4 1037.8 256.1C1038.9 258.8 1040.1 261.0 1040.6 263.4C1041.1 265.8 1040.3 267.0 1040.6 270.7C1040.9 274.4 1042.0 281.7 1042.4 285.4C1042.9 289.1 1042.8 290.0 1043.3 292.7C1043.8 295.4 1045.3 301.2 1045.2 301.8C1045.1 302.4 1043.7 295.6 1042.8 296.0C1041.9 296.4 1040.7 301.9 1040.0 304.2C1039.3 306.5 1039.8 308.1 1038.7 309.7C1037.6 311.3 1034.1 311.7 1033.2 313.8C1032.3 315.9 1032.1 320.3 1033.2 322.1C1034.3 323.9 1038.0 323.9 1040.0 324.8C1042.0 325.7 1044.7 325.8 1045.5 327.6C1046.3 329.4 1045.2 333.5 1044.8 335.8C1044.3 338.1 1042.7 339.5 1042.8 341.3C1042.9 343.1 1044.6 345.2 1045.5 346.8C1046.4 348.4 1047.6 349.3 1048.3 350.9C1049.0 352.5 1048.9 354.8 1049.6 356.4C1050.3 358.0 1051.0 359.2 1052.4 360.5C1053.8 361.8 1055.9 363.1 1057.9 363.9C1060.0 364.7 1062.3 364.6 1064.7 365.3C1067.1 366.0 1070.2 366.4 1072.3 368.0C1074.4 369.6 1073.3 373.2 1077.1 374.9C1080.9 376.6 1085.7 380.2 1094.9 378.3C1104.1 376.4 1123.8 369.2 1132.1 363.5C1140.4 357.8 1143.0 349.0 1145.0 344.2C1147.0 339.4 1143.7 337.1 1144.1 334.6C1144.5 332.1 1148.3 330.3 1147.4 329.0C1146.5 327.7 1141.6 327.6 1138.5 327.0C1135.4 326.4 1132.6 326.5 1128.9 325.4C1125.2 324.2 1119.8 321.2 1116.1 320.1C1112.3 319.0 1106.4 318.9 1106.4 318.5C1106.4 318.1 1115.0 318.4 1115.9 317.9C1116.8 317.4 1113.0 315.2 1111.9 315.6C1110.8 316.0 1110.6 319.7 1109.2 320.1C1107.8 320.6 1103.9 319.5 1103.7 318.3C1103.5 317.1 1107.8 314.6 1108.3 312.8C1108.8 311.0 1107.8 307.9 1106.4 307.3C1105.0 306.7 1100.6 309.5 1100.0 309.2C1099.4 308.9 1102.5 307.4 1102.8 305.5C1103.1 303.6 1103.0 299.9 1101.9 297.8C1100.8 295.7 1099.0 293.5 1096.4 293.1C1093.8 292.7 1089.5 295.6 1086.3 295.4C1083.1 295.2 1077.5 292.7 1077.2 291.8C1076.9 290.9 1082.4 289.9 1084.5 290.0C1086.6 290.1 1088.2 292.7 1090.0 292.7C1091.8 292.7 1093.4 290.2 1095.5 290.0C1097.6 289.8 1101.1 291.8 1102.8 291.2C1104.5 290.6 1105.8 288.2 1105.5 286.3C1105.2 284.4 1103.2 281.7 1100.9 279.9C1098.6 278.1 1094.2 275.6 1091.8 275.3C1089.4 275.0 1088.1 278.1 1086.3 278.1C1084.5 278.1 1080.9 276.4 1080.8 275.3C1080.7 274.2 1085.4 272.8 1085.4 271.7C1085.4 270.6 1081.4 270.0 1080.8 268.9C1080.2 267.8 1080.8 267.1 1081.7 265.3C1082.6 263.5 1084.7 260.0 1086.3 257.9C1087.9 255.8 1089.9 254.3 1091.4 252.5C1092.9 250.7 1094.9 249.3 1095.1 247.0C1095.3 244.7 1094.0 240.5 1092.7 238.7C1091.4 236.9 1088.0 236.9 1087.2 236.0C1086.4 235.1 1087.0 234.4 1088.1 233.3C1089.2 232.2 1092.8 231.0 1094.0 229.6C1095.2 228.2 1096.2 226.2 1095.5 225.0C1094.8 223.8 1089.7 223.1 1090.0 222.3C1090.3 221.5 1094.9 221.2 1097.3 220.4C1099.7 219.6 1103.0 218.9 1104.2 217.7C1105.4 216.5 1105.4 214.3 1104.6 213.1C1103.8 211.9 1099.4 211.3 1099.1 210.4C1098.8 209.5 1101.1 208.7 1102.8 207.6C1104.5 206.5 1107.4 205.5 1109.2 204.0C1111.0 202.5 1112.8 200.3 1113.7 198.5C1114.6 196.7 1114.4 195.0 1114.8 193.0C1115.2 191.0 1115.2 188.9 1115.9 186.6C1116.6 184.3 1118.0 181.4 1118.9 179.3C1119.8 177.2 1120.3 174.0 1121.1 173.8C1121.9 173.7 1122.3 177.1 1123.8 178.4C1125.3 179.7 1128.3 181.3 1130.2 181.5C1132.1 181.7 1133.7 180.4 1135.3 179.3C1136.9 178.2 1138.3 176.5 1139.7 174.7C1141.1 172.9 1142.6 170.6 1143.4 168.3C1144.2 166.0 1165.8 162.2 1144.8 161.0C1123.8 159.8 1038.4 160.4 1017.7 161.0Z" fill="#f1efe8"/>
<path d="M1148.2 318.2 1154.6 316.9 1160.2 320.9 1162.6 324.6 1156.2 325.3 1149.8 323.3Z" fill="#f1efe8"/>
<path d="M1031.4 268.9 1033.3 270.7 1031.4 279.9 1029.6 289.0 1028.1 289.0 1029.6 279.9Z" fill="#f1efe8"/>
<path d="M1034.2 299.1 1039.7 300.0 1039.7 303.7 1035.1 304.0Z" fill="#f1efe8"/>
<path d="M1035.1 247.0 1037.3 248.4 1038.0 253.4 1036.2 252.5Z" fill="#f1efe8"/>
<path d="M1036.0 260.7 1038.8 261.6 1038.4 268.9 1036.2 268.6Z" fill="#f1efe8"/>
<path d="M1095.5 234.2C1097.0 232.7 1099.8 231.4 1102.8 230.5C1105.8 229.6 1110.0 228.8 1113.7 228.7C1117.4 228.5 1121.7 229.5 1124.7 229.6C1127.8 229.7 1129.5 227.6 1132.0 229.0C1134.5 230.4 1137.6 234.8 1139.4 237.8C1141.2 240.8 1142.7 244.2 1143.0 247.0C1143.3 249.8 1141.8 251.6 1141.2 254.3C1140.6 257.0 1140.3 260.7 1139.4 263.4C1138.5 266.1 1137.2 268.9 1135.7 270.7C1134.2 272.5 1132.3 274.1 1130.2 274.4C1128.1 274.7 1125.7 273.5 1122.9 272.6C1120.2 271.7 1116.5 270.4 1113.7 268.9C1111.0 267.4 1108.8 265.5 1106.4 263.4C1104.0 261.3 1100.9 258.8 1099.1 256.1C1097.3 253.4 1096.4 249.7 1095.5 247.0C1094.6 244.3 1093.6 241.8 1093.6 239.7C1093.6 237.6 1094.0 235.7 1095.5 234.2Z" fill="#f1efe8"/>
<path d="M1145.8 266.2C1145.6 268.2 1144.2 274.3 1143.0 278.1C1141.8 281.9 1139.6 285.6 1138.4 289.0C1137.2 292.4 1136.6 296.8 1135.7 298.2C1134.8 299.6 1133.0 299.1 1133.0 297.3C1133.0 295.5 1134.5 290.7 1135.7 287.2C1136.9 283.7 1138.9 279.7 1140.3 276.2C1141.7 272.7 1143.0 267.9 1143.9 266.2C1144.8 264.5 1146.0 264.2 1145.8 266.2Z" fill="#f1efe8"/>
<path d="M1112.8 282.6 1121.1 287.2 1125.6 291.8 1121.1 291.2 1113.7 286.3Z" fill="#f1efe8"/>
<path d="M1128.4 275.3 1133.0 275.9 1133.5 280.8 1129.3 280.8Z" fill="#f1efe8"/>
<path d="M1132.0 204.0 1134.8 208.6 1133.0 215.9 1130.2 213.1 1130.2 206.7Z" fill="#f1efe8"/>
<path d="M1144.8 220.4C1145.4 218.6 1150.2 219.0 1153.0 218.1C1155.8 217.2 1159.0 216.2 1161.3 215.0C1163.6 213.8 1165.0 212.6 1166.8 210.8C1168.6 209.0 1172.8 205.8 1172.3 204.0C1171.8 202.2 1165.5 201.2 1164.0 200.3C1162.5 199.4 1161.6 198.6 1163.1 198.5C1164.6 198.4 1170.5 198.9 1173.2 199.8C1176.0 200.7 1177.9 202.2 1179.6 204.0C1181.3 205.8 1182.1 208.4 1183.2 210.4C1184.3 212.4 1184.9 214.5 1186.0 215.9C1187.1 217.3 1188.7 219.2 1189.6 218.6C1190.5 218.0 1191.8 214.5 1191.5 212.2C1191.2 209.9 1188.0 206.9 1187.8 204.9C1187.6 202.9 1189.3 200.6 1190.5 200.3C1191.7 200.0 1194.0 201.4 1195.1 203.1C1196.2 204.8 1196.1 208.3 1196.9 210.4C1197.7 212.5 1198.8 216.2 1199.7 215.9C1200.6 215.6 1202.4 211.2 1202.4 208.6C1202.4 206.0 1199.7 202.4 1199.7 200.3C1199.7 198.2 1200.7 197.0 1202.4 196.1C1204.1 195.2 1207.2 195.1 1209.7 195.0C1212.2 194.9 1215.0 196.0 1217.1 195.8C1219.2 195.6 1221.2 193.2 1222.2 193.6C1223.2 194.0 1223.3 196.6 1222.9 198.5C1222.5 200.4 1220.5 202.3 1219.8 204.9C1219.1 207.5 1218.8 211.2 1218.9 214.0C1219.1 216.8 1221.0 219.0 1220.7 221.4C1220.4 223.8 1218.2 226.0 1217.1 228.7C1215.9 231.4 1215.0 235.1 1213.8 237.8C1212.6 240.5 1210.0 242.4 1210.1 244.8C1210.2 247.2 1214.0 249.9 1214.3 252.1C1214.5 254.3 1213.1 256.0 1211.6 257.9C1210.1 259.8 1207.2 261.6 1205.2 263.4C1203.2 265.2 1199.9 267.1 1199.7 268.9C1199.5 270.7 1202.3 273.2 1204.3 274.4C1206.3 275.6 1209.2 275.3 1211.6 275.9C1214.0 276.5 1217.6 277.1 1218.5 278.1C1219.4 279.1 1218.6 281.2 1217.1 281.7C1215.6 282.1 1212.2 281.1 1209.7 280.8C1207.2 280.5 1204.5 279.8 1202.4 279.9C1200.3 280.0 1198.7 281.7 1196.9 281.7C1195.1 281.7 1193.3 281.4 1191.5 279.9C1189.7 278.4 1187.8 274.9 1186.0 272.6C1184.2 270.3 1182.6 267.7 1180.5 266.2C1178.4 264.7 1176.0 264.0 1173.2 263.4C1170.5 262.8 1166.5 263.7 1164.0 262.5C1161.5 261.3 1160.0 258.7 1158.5 256.1C1157.0 253.5 1155.8 250.1 1154.9 247.0C1154.0 243.9 1153.9 240.9 1153.0 237.8C1152.1 234.8 1150.8 231.6 1149.4 228.7C1148.0 225.8 1144.2 222.2 1144.8 220.4Z" fill="#f1efe8"/>
<path d="M1147.9 289.0C1148.5 287.5 1152.2 286.6 1154.9 285.4C1157.6 284.2 1161.0 282.2 1164.0 281.7C1167.0 281.2 1170.5 281.7 1173.2 282.6C1176.0 283.5 1178.4 285.5 1180.5 287.2C1182.6 288.9 1185.4 290.6 1186.0 292.7C1186.6 294.8 1185.6 298.2 1184.1 300.0C1182.6 301.8 1179.5 303.4 1176.8 303.7C1174.1 304.0 1170.8 302.7 1167.7 301.8C1164.7 300.9 1161.2 299.4 1158.5 298.2C1155.8 297.0 1153.0 296.0 1151.2 294.5C1149.4 293.0 1147.3 290.5 1147.9 289.0Z" fill="#f1efe8"/>
<path d="M1186.0 287.2C1187.1 285.1 1191.0 283.3 1193.3 283.6C1195.6 283.9 1199.1 286.9 1199.7 289.0C1200.3 291.1 1198.0 293.6 1196.9 296.4C1195.8 299.1 1194.4 302.8 1193.3 305.5C1192.2 308.2 1191.4 312.8 1190.5 312.8C1189.6 312.8 1188.4 308.2 1187.8 305.5C1187.2 302.8 1187.2 299.4 1186.9 296.4C1186.6 293.3 1184.9 289.3 1186.0 287.2Z" fill="#f1efe8"/>
<path d="M1236.3 161.0C1211.5 162.2 1233.1 166.2 1231.7 168.3C1230.3 170.4 1230.1 172.7 1228.0 173.8C1225.9 174.9 1219.2 173.6 1218.9 174.7C1218.6 175.8 1224.7 178.2 1226.2 180.2C1227.7 182.2 1227.9 184.3 1228.0 186.6C1228.1 188.9 1226.0 190.8 1226.6 193.9C1227.2 197.0 1229.9 201.2 1231.7 204.9C1233.5 208.6 1235.6 212.6 1237.2 215.9C1238.8 219.2 1240.8 221.9 1241.2 225.0C1241.6 228.1 1240.3 231.1 1239.4 234.2C1238.5 237.2 1236.8 241.0 1235.7 243.3C1234.6 245.6 1231.2 247.2 1232.6 248.1C1234.0 249.0 1240.3 248.4 1244.0 248.8C1247.7 249.2 1251.3 250.8 1255.0 250.6C1258.7 250.4 1261.6 248.8 1265.9 247.9C1270.2 247.0 1276.0 245.4 1280.6 245.1C1285.2 244.8 1290.4 247.0 1293.4 246.1C1296.5 245.2 1297.7 242.1 1298.9 239.7C1300.1 237.2 1301.2 234.4 1300.7 231.4C1300.2 228.4 1297.0 224.6 1296.1 221.4C1295.2 218.2 1294.7 215.2 1295.2 212.2C1295.7 209.1 1297.4 205.5 1298.9 203.1C1300.4 200.7 1302.6 199.0 1304.4 197.6C1306.2 196.2 1308.0 195.0 1309.8 194.8C1311.6 194.7 1313.8 197.1 1315.3 196.7C1316.8 196.2 1318.7 193.9 1319.0 192.1C1319.3 190.3 1316.3 187.2 1317.2 185.7C1318.1 184.2 1320.8 183.2 1324.5 182.9C1328.2 182.6 1334.2 183.7 1339.1 183.9C1344.0 184.1 1349.7 183.8 1353.7 183.9C1357.7 184.1 1360.5 184.4 1362.9 184.8C1365.4 185.2 1366.9 187.2 1368.4 186.6C1369.9 186.0 1370.6 183.2 1372.0 181.1C1373.4 179.0 1375.4 175.9 1376.6 173.8C1377.8 171.7 1378.8 170.4 1379.4 168.3C1380.0 166.2 1404.2 162.2 1380.3 161.0C1356.4 159.8 1261.1 159.8 1236.3 161.0Z" fill="#f1efe8"/>
<path d="M1394.0 161.0C1395.2 160.1 1399.8 160.1 1401.3 161.0C1402.8 161.9 1403.4 164.1 1403.1 166.5C1402.8 168.9 1400.9 173.2 1399.5 175.6C1398.1 178.0 1395.9 181.4 1394.9 181.1C1393.9 180.8 1393.7 176.2 1393.6 173.8C1393.5 171.4 1394.3 168.6 1394.4 166.5C1394.5 164.4 1392.8 161.9 1394.0 161.0Z" fill="#f1efe8"/>
<path d="M1319.9 255.2C1321.3 254.7 1322.5 256.9 1325.4 258.9C1328.3 260.9 1335.2 264.8 1337.3 267.1C1339.4 269.4 1338.7 270.6 1338.2 272.6C1337.7 274.6 1336.5 278.6 1334.5 279.0C1332.5 279.4 1329.2 276.7 1326.3 275.3C1323.4 273.9 1318.7 272.7 1317.2 270.4C1315.7 268.1 1316.8 264.1 1317.2 261.6C1317.7 259.1 1318.5 255.7 1319.9 255.2Z" fill="#f1efe8"/>
<path d="M1245.3 309.7C1246.5 308.2 1249.0 307.2 1250.9 305.7C1252.8 304.2 1254.6 301.6 1256.5 300.9C1258.4 300.2 1260.9 300.6 1262.1 301.7C1263.3 302.8 1264.1 305.8 1263.8 307.3C1263.5 308.8 1260.0 309.7 1260.5 310.5C1261.0 311.3 1265.2 311.4 1267.0 312.1C1268.8 312.8 1270.5 313.2 1271.0 314.5C1271.5 315.8 1270.9 318.6 1270.2 320.1C1269.5 321.6 1266.7 322.2 1267.0 323.3C1267.3 324.4 1270.6 325.2 1271.8 326.6C1273.0 328.0 1274.2 329.9 1274.2 331.4C1274.2 332.9 1273.1 334.9 1271.8 335.4C1270.5 335.9 1267.8 334.2 1266.2 334.6C1264.6 335.0 1263.7 337.1 1262.1 337.8C1260.5 338.5 1258.4 339.0 1256.5 338.6C1254.6 338.2 1252.5 336.6 1250.9 335.4C1249.3 334.2 1248.1 332.9 1246.9 331.4C1245.7 329.9 1244.5 328.5 1243.7 326.6C1242.9 324.7 1242.1 322.1 1242.1 320.1C1242.1 318.1 1243.2 316.2 1243.7 314.5C1244.2 312.8 1244.1 311.2 1245.3 309.7Z" fill="#f1efe8"/>
<path d="M866.4 422.4 871.0 413.3 873.7 414.2 869.2 423.3Z" fill="#f1efe8"/>
<path d="M873.7 411.4 880.2 406.8 881.1 408.3 875.2 412.7Z" fill="#f1efe8"/>
<path d="M882.9 404.7 896.6 399.9 897.2 401.4 883.8 406.3Z" fill="#f1efe8"/>
<path d="M904.8 398.6 917.6 395.5 918.0 397.0 905.4 400.1Z" fill="#f1efe8"/>
<path d="M925.9 395.0 933.2 393.7 933.4 395.1 926.4 396.4Z" fill="#f1efe8"/>
<path d="M957.7 385.9 964.6 383.1 964.9 384.2 958.3 387.0Z" fill="#f1efe8"/>
<path d="M968.0 381.1 978.3 378.7 978.6 379.8 968.4 382.2Z" fill="#f1efe8"/>
<path d="M981.7 378.0 990.0 376.7 990.1 377.8 982.0 379.1Z" fill="#f1efe8"/>
<path d="M992.7 376.3 999.6 375.2 999.7 376.3 993.0 377.4Z" fill="#f1efe8"/>
<path d="M878.3 436.1C880.1 433.2 887.5 428.8 890.2 427.9C893.0 427.0 894.3 428.6 894.8 430.6C895.3 432.6 892.1 437.5 893.0 439.8C893.9 442.1 897.7 442.9 900.3 444.3C902.9 445.7 907.8 445.7 908.5 448.0C909.2 450.3 906.5 455.2 904.8 458.1C903.1 461.0 900.5 465.1 898.4 465.4C896.3 465.7 894.3 461.1 892.0 459.9C889.7 458.7 886.8 457.5 884.7 458.1C882.6 458.7 880.4 461.8 879.2 463.6C878.0 465.4 876.8 467.0 877.4 469.0C878.0 471.0 882.6 473.6 882.9 475.4C883.2 477.2 880.4 479.8 879.2 480.0C878.0 480.2 876.1 478.5 875.6 476.4C875.1 474.3 875.6 470.9 876.5 467.2C877.4 463.5 880.6 458.0 881.1 454.4C881.6 450.8 879.7 448.4 879.2 445.3C878.7 442.2 876.5 439.0 878.3 436.1Z" fill="#aad3df"/>
<path d="M1280.6 368.4C1282.1 367.0 1288.5 366.0 1291.6 366.6C1294.6 367.2 1296.5 372.0 1298.9 372.1C1301.3 372.2 1303.9 367.8 1306.2 367.5C1308.5 367.2 1311.7 367.4 1312.6 370.3C1313.5 373.2 1312.8 383.1 1311.7 384.9C1310.6 386.7 1308.3 382.1 1306.2 381.2C1304.1 380.3 1301.3 380.0 1298.9 379.4C1296.5 378.8 1294.3 378.4 1291.6 377.6C1288.8 376.8 1284.2 376.3 1282.4 374.8C1280.6 373.3 1279.1 369.8 1280.6 368.4Z" fill="#aad3df"/>
<path d="M1066.2 816.2C1067.7 816.4 1073.9 818.4 1077.2 819.9C1080.5 821.4 1084.2 823.9 1086.3 825.4C1088.4 826.9 1090.3 828.7 1090.0 829.0C1089.7 829.3 1087.0 828.3 1084.5 827.2C1082.0 826.1 1078.0 824.0 1075.3 822.6C1072.5 821.2 1069.5 820.1 1068.0 819.0C1066.5 817.9 1064.7 816.1 1066.2 816.2Z" fill="#aad3df"/>
<path d="M1411.4 704.7C1412.5 703.6 1415.0 703.3 1415.0 705.6C1415.0 707.9 1412.6 716.1 1411.4 718.4C1410.2 720.7 1408.2 720.4 1407.7 719.3C1407.2 718.2 1408.0 714.4 1408.6 712.0C1409.2 709.6 1410.3 705.8 1411.4 704.7Z" fill="#aad3df"/>
<path d="M1433.3 875.5C1435.9 873.8 1444.2 871.4 1450.7 868.2C1457.2 865.0 1468.8 857.8 1472.6 856.3C1476.4 854.8 1476.9 856.4 1473.6 859.0C1470.2 861.6 1458.9 868.6 1452.5 871.8C1446.1 875.0 1438.3 877.6 1435.1 878.2C1431.9 878.8 1430.7 877.2 1433.3 875.5Z" fill="#aad3df"/>
<path d="M1244.0 943.2C1245.8 937.6 1250.7 941.3 1255.0 941.3C1259.3 941.3 1266.5 942.1 1269.6 943.2C1272.6 944.3 1274.5 945.6 1273.3 947.7C1272.1 949.8 1264.8 951.5 1262.3 956.0C1259.8 960.5 1261.6 971.8 1258.6 975.0C1255.5 978.2 1246.4 980.3 1244.0 975.0C1241.6 969.7 1242.2 948.8 1244.0 943.2Z" fill="#aad3df"/>
<path d="M1019.5 188.4C1020.0 186.6 1022.7 189.1 1024.1 192.1C1025.5 195.1 1027.8 203.9 1027.8 206.7C1027.8 209.4 1025.2 209.2 1024.1 208.6C1023.0 208.0 1022.2 206.5 1021.4 203.1C1020.6 199.7 1019.0 190.2 1019.5 188.4Z" fill="#aad3df"/>
<path d="M1075.3 372.1C1077.1 372.5 1082.9 375.3 1086.3 376.7C1089.7 378.1 1092.8 378.9 1095.5 380.3C1098.2 381.7 1101.6 383.9 1102.8 384.9C1104.0 385.8 1103.8 386.5 1102.4 386.0C1101.0 385.5 1097.3 383.2 1094.5 382.0C1091.7 380.8 1088.6 379.8 1085.4 378.5C1082.2 377.2 1077.0 375.4 1075.3 374.3C1073.6 373.2 1073.5 371.7 1075.3 372.1Z" fill="#aad3df"/>
<path d="M1199.7 966.9C1202.1 963.7 1205.1 957.2 1212.5 956.0C1219.9 954.8 1238.8 956.4 1244.0 959.6C1249.2 962.8 1251.7 972.4 1244.0 975.0C1236.3 977.6 1205.3 976.4 1197.9 975.0C1190.5 973.6 1197.3 970.1 1199.7 966.9Z" fill="#aad3df"/>
<path d="M934.1 897.4C935.9 896.2 942.5 893.8 946.9 894.7C951.3 895.6 958.8 900.9 960.6 902.9C962.4 904.9 960.5 907.0 957.9 906.6C955.3 906.2 948.8 901.0 945.1 900.2C941.4 899.4 937.7 902.5 935.9 902.0C934.1 901.5 932.3 898.6 934.1 897.4Z" fill="#aad3df"/>
<path d="M807.0 547.5C808.7 546.5 815.1 544.7 818.9 544.4C822.7 544.1 826.4 546.0 829.8 545.7C833.1 545.4 837.3 542.8 839.0 542.6C840.7 542.4 841.3 543.5 839.9 544.4C838.5 545.3 834.3 547.7 830.8 548.1C827.3 548.5 822.6 546.6 818.9 547.0C815.2 547.4 810.8 550.2 808.8 550.3C806.8 550.4 805.3 548.5 807.0 547.5Z" fill="#aad3df"/>
<g fill="#9fc4d2" opacity=".8">
<path d="M1026.3 296.0C1029.3 294.6 1040.5 294.6 1042.8 296.0C1045.1 297.4 1040.7 301.9 1040.0 304.2C1039.3 306.5 1039.8 308.1 1038.7 309.7C1037.6 311.3 1034.1 311.7 1033.2 313.8C1032.3 315.9 1034.4 321.6 1033.2 322.1C1032.0 322.6 1027.7 319.6 1026.3 316.6C1024.9 313.6 1024.9 307.6 1024.9 304.2C1024.9 300.8 1023.3 297.4 1026.3 296.0Z"/>
<path d="M1044.8 335.8C1045.1 336.5 1042.7 339.5 1042.8 341.3C1042.9 343.1 1044.6 345.2 1045.5 346.8C1046.4 348.4 1047.6 349.3 1048.3 350.9C1049.0 352.5 1048.9 354.8 1049.6 356.4C1050.3 358.0 1053.1 358.7 1052.4 360.5C1051.7 362.3 1047.6 367.1 1045.5 367.3C1043.4 367.5 1041.1 365.1 1040.0 361.9C1038.9 358.7 1038.6 352.2 1038.7 348.1C1038.8 344.0 1039.7 339.2 1040.7 337.2C1041.7 335.1 1044.5 335.1 1044.8 335.8Z"/>
<path d="M1018.1 356.4C1022.7 355.3 1035.4 358.7 1040.0 360.5C1044.6 362.3 1045.5 365.7 1045.5 367.3C1045.5 368.9 1041.4 368.7 1040.0 370.1C1038.6 371.5 1038.2 373.8 1037.3 375.6C1036.4 377.4 1034.7 378.6 1034.5 381.1C1034.3 383.6 1036.7 390.0 1036.2 390.7C1035.8 391.4 1033.0 387.3 1031.8 385.2C1030.6 383.1 1030.5 380.4 1029.1 378.3C1027.7 376.2 1025.3 372.8 1023.6 372.8C1021.9 372.8 1019.9 376.2 1018.8 378.3C1017.6 380.4 1017.7 384.3 1016.7 385.2C1015.7 386.1 1013.5 384.9 1012.6 383.8C1011.7 382.7 1011.2 381.1 1011.2 378.3C1011.2 375.6 1011.5 371.0 1012.6 367.3C1013.8 363.6 1013.5 357.5 1018.1 356.4Z"/>
<path d="M957.7 385.9C966.5 383.1 991.1 376.9 999.6 375.2C1008.1 373.5 1008.2 375.3 1008.5 375.6C1008.8 375.9 1005.5 376.3 1001.6 376.9C997.7 377.5 991.4 378.1 985.2 379.4C979.0 380.7 970.1 382.5 964.6 384.5C959.1 386.5 954.7 389.6 952.2 391.3C949.7 393.0 950.4 394.7 949.5 394.8C948.6 394.9 945.3 393.5 946.7 392.0C948.1 390.5 948.9 388.7 957.7 385.9Z"/>
<path d="M866.4 422.4C867.0 417.5 871.0 414.3 873.7 411.4C876.5 408.4 879.1 406.6 882.9 404.7C886.7 402.8 890.8 401.4 896.6 399.9C902.4 398.4 911.5 396.5 917.6 395.5C923.7 394.5 927.1 393.6 933.2 393.7C939.3 393.8 954.4 395.2 954.2 395.9C954.1 396.6 939.6 396.8 932.3 398.1C925.0 399.4 915.5 401.9 910.3 403.6C905.1 405.3 903.6 406.3 901.2 408.1C898.8 409.9 897.2 412.2 895.7 414.5C894.2 416.8 892.9 419.7 892.0 421.8C891.1 423.9 892.0 425.2 890.2 427.0C888.4 428.8 883.5 430.7 881.1 432.5C878.7 434.3 877.4 436.5 875.6 437.9C873.8 439.3 871.6 443.3 870.1 440.7C868.6 438.1 865.8 427.3 866.4 422.4Z"/>
<path d="M1027.8 289.0C1031.0 288.4 1040.4 290.6 1043.3 292.7C1046.2 294.8 1044.4 299.4 1045.2 301.8C1046.0 304.2 1048.7 306.4 1047.9 307.3C1047.1 308.2 1043.3 307.9 1040.6 307.3C1037.8 306.7 1034.2 305.5 1031.4 303.7C1028.7 301.9 1024.7 298.8 1024.1 296.4C1023.5 293.9 1024.6 289.6 1027.8 289.0Z"/>
</g>
<g fill="none" stroke-width=".750" stroke-linecap="round" opacity=".85">
<path stroke="#e78d9d" d="M1113 185Q1111 191 1113 198M1121 246Q1121 245 1121 243M1121 246Q1098 239 1079 224M1121 246Q1128 267 1136 288M947 417Q947 414 945 412M947 417Q949 409 955 405M947 417Q953 419 958 422M947 433Q952 427 958 422M844 502Q842 507 837 511M844 502Q849 507 856 511M962 492Q969 503 970 515M962 492Q953 490 946 483M917 509Q916 515 917 521M917 509Q921 515 928 517M1384 342Q1407 334 1423 317M1342 453Q1338 465 1342 477M1354 512Q1348 494 1342 477M1354 512Q1352 505 1354 497M1354 512Q1379 527 1391 553M1354 512Q1356 534 1345 554M1479 491Q1475 506 1476 522M861 524Q859 517 856 511M889 531Q890 537 890 543M848 565Q848 563 848 560M848 565Q846 571 845 578M818 577Q820 582 822 588M818 577Q813 573 809 570M788 608Q790 616 796 622M1333 598Q1319 609 1308 623M1389 598Q1377 617 1369 638M1389 598Q1391 604 1389 610M1389 598Q1393 617 1389 637M1464 605Q1464 603 1463 602M1464 605Q1451 583 1453 558M1464 605Q1450 621 1438 639M1369 638Q1380 624 1389 610M1369 638Q1379 640 1389 637M1257 670Q1256 676 1257 682M1257 670Q1272 670 1283 661M1480 664Q1478 663 1476 661M1480 664Q1458 653 1438 639M831 705Q837 703 840 698M1001 751Q1000 735 995 721M1001 751Q990 748 983 739M922 843Q934 843 944 837M922 843Q911 835 899 830M993 821Q985 812 977 803M993 821Q979 821 968 828M1037 833Q1048 836 1060 833M1037 833Q1026 828 1013 827M1166 841Q1167 839 1167 837M1166 841Q1153 861 1142 881M1081 849Q1083 857 1081 865M1081 849Q1094 844 1106 839M1393 777Q1410 777 1427 781M1393 777Q1392 774 1393 771M1427 781Q1410 776 1393 771M1427 781Q1444 778 1461 785M1427 781Q1437 797 1451 809M1451 812Q1452 831 1446 850M1351 854Q1353 872 1360 888M1351 854Q1352 851 1351 849M1351 854Q1356 869 1360 885M1360 888Q1361 914 1375 937M1360 888Q1352 869 1351 849M1360 888Q1385 883 1411 887M1375 937Q1355 949 1332 954M1375 937Q1384 956 1394 975M1275 948Q1304 949 1332 954M1013 590Q1012 589 1013 587M1013 590Q1021 598 1031 601M1037 507Q1035 513 1037 519M1037 507Q1025 516 1010 517M1037 507Q1048 508 1058 507M868 941Q884 936 898 927M927 931Q939 941 954 946M927 931Q928 914 931 898M927 931Q918 942 917 955M788 939Q798 952 810 964M788 939Q800 929 816 929M788 939Q777 925 771 908M788 939Q786 954 778 968M1050 937Q1049 951 1040 961M1050 937Q1065 954 1081 970M1040 961Q1019 969 997 966M1040 961Q1060 966 1081 970M1121 243Q1098 237 1079 224M945 412Q940 408 933 407M945 412Q949 406 955 405M946 445Q951 439 958 437M946 445Q947 451 947 457M946 445Q953 447 959 451M844 497Q852 493 860 493M844 497Q843 505 837 511M935 496Q930 497 924 499M935 496Q936 489 931 483M917 521Q912 524 906 525M970 515Q960 513 950 509M1132 363Q1121 363 1110 359M1132 363Q1143 361 1154 363M1132 363Q1130 374 1126 384M1167 382Q1178 378 1188 375M1167 382Q1174 392 1184 398M1103 387Q1110 374 1110 359M1103 387Q1115 387 1126 384M1048 423Q1039 436 1029 449M1242 490Q1234 497 1224 502M1242 490Q1234 482 1222 481M1242 490Q1253 494 1262 502M1037 519Q1023 520 1010 517M1037 519Q1048 524 1054 535M1015 485Q1001 490 987 490M1015 485Q1009 475 1009 463M1384 354Q1396 376 1401 400M1384 354Q1397 329 1423 317M1384 354Q1361 357 1339 352M1342 466Q1343 471 1342 477M1342 466Q1353 480 1354 497M1342 466Q1361 451 1382 439M1342 477Q1344 494 1354 509M1354 497Q1374 493 1395 488M1257 464Q1257 451 1251 440M1480 464Q1477 475 1476 487M1476 522Q1454 516 1431 513M1500 393Q1482 379 1458 377M833 528Q828 524 826 518M833 528Q832 533 829 538M833 528Q841 523 850 524M890 543Q891 550 889 557M890 543Q884 544 879 546M848 560Q845 554 842 548M803 582Q805 575 809 570M803 582Q807 586 809 592M803 582Q797 578 795 571M957 579Q966 573 975 567M957 579Q955 587 957 595M925 594Q921 589 915 585M971 597Q963 600 960 606M994 624Q995 613 991 601M994 624Q1001 616 1012 613M1080 555Q1066 556 1052 557M1080 555Q1090 543 1101 531M1212 552Q1213 566 1213 579M1212 552Q1210 541 1212 530M1212 552Q1219 543 1231 540M1187 592Q1176 594 1165 592M1013 587Q1024 592 1031 601M1013 587Q1003 579 997 568M1237 605Q1225 603 1213 607M1041 658Q1043 666 1043 674M1128 672Q1127 684 1126 696M1128 672Q1117 669 1107 665M1152 703Q1146 713 1146 724M1301 538Q1301 522 1299 507M1301 550Q1304 566 1304 581M1301 550Q1323 545 1345 554M1334 595Q1320 586 1304 581M1334 595Q1324 612 1308 623M1389 610Q1391 623 1389 637M1463 602Q1448 619 1438 639M1389 637Q1388 642 1390 648M1257 682Q1266 690 1273 701M1476 661Q1477 686 1482 709M831 716Q825 737 808 750M831 716Q833 706 840 698M966 719Q958 709 950 698M966 719Q953 720 944 730M966 719Q975 729 983 739M964 756Q949 751 934 755M964 756Q976 750 983 739M922 855Q932 845 944 837M922 855Q937 866 954 875M993 818Q986 810 977 803M993 818Q1004 820 1013 827M1031 734Q1032 747 1038 758M1031 734Q1041 732 1050 726M1144 763Q1135 755 1133 743M1029 790Q1017 786 1006 786M1029 790Q1040 787 1048 778M1029 790Q1022 798 1014 806M1039 802Q1027 807 1014 806M1174 796Q1186 797 1195 790M1174 796Q1175 807 1178 817M1242 802Q1241 814 1234 824M1242 802Q1243 791 1241 780M1242 802Q1231 797 1220 799M1037 830Q1048 833 1060 833M1167 837Q1154 841 1141 840M1081 865Q1092 850 1106 839M1393 771Q1390 797 1394 823M1393 771Q1399 748 1391 727M1451 809Q1452 830 1446 850M1446 850Q1461 871 1480 887M1360 885Q1385 891 1411 887M1360 885Q1343 901 1322 910M1150 497Q1145 485 1135 477M1150 497Q1161 493 1169 485M1150 497Q1142 511 1144 526M806 604Q809 609 814 612M806 604Q801 600 798 596M806 604Q808 598 809 592M1180 520Q1197 519 1212 530M1180 520Q1192 516 1201 507M1180 520Q1184 531 1186 543M1382 439Q1388 418 1401 400M894 660Q889 656 884 653M894 660Q900 663 905 666M894 660Q897 654 902 651M1224 502Q1212 502 1201 507M1224 502Q1221 491 1222 481M1254 543Q1247 554 1244 566M1254 543Q1252 530 1246 517M1254 543Q1242 542 1231 540M990 663Q994 679 989 695M990 663Q1007 660 1022 669M1090 447Q1079 444 1067 446M1336 748Q1313 747 1293 758M1336 748Q1346 769 1346 793M940 654Q937 659 937 665M1142 881Q1149 860 1141 840M1289 438Q1282 427 1273 418M1289 438Q1281 449 1280 462M1470 310Q1475 345 1458 377M1065 792Q1076 791 1086 787M1065 792Q1058 783 1048 778M873 590Q872 597 869 603M873 590Q875 584 875 577M792 725Q780 732 767 737M792 725Q782 714 781 699M1314 653Q1301 645 1286 641M1314 653Q1298 655 1283 661M1314 653Q1316 637 1308 623M1182 565Q1182 554 1186 543M1105 722Q1101 711 1104 699M780 569Q777 575 771 579M780 569Q785 574 788 581M806 800Q821 811 827 829M806 800Q802 780 786 767M806 800Q801 813 794 825M822 560Q822 554 823 547M1022 888Q1001 883 980 888M1188 419Q1203 414 1217 410M1188 419Q1193 429 1199 439M1450 742Q1442 717 1424 699M782 880Q786 864 796 851M782 880Q773 870 769 858M782 880Q794 888 805 896M782 880Q778 895 771 908M1100 586Q1109 591 1118 597M1011 421Q1001 406 1001 389M952 497Q952 503 950 509M884 803Q870 800 857 807M1147 808Q1148 797 1148 786M1001 389Q991 399 989 413M1001 389Q990 382 976 380M927 611Q932 618 936 625M927 611Q933 606 937 601M1439 966Q1454 947 1468 927M1439 966Q1461 965 1482 971M1213 900Q1243 900 1267 882M1234 824Q1229 834 1218 840M1304 581Q1293 579 1282 579M1286 349Q1292 360 1298 371M869 844Q880 854 891 863M869 844Q883 835 899 830M869 844Q862 856 861 869M951 537Q952 542 953 548M951 537Q951 529 955 522M951 537Q944 541 941 548M951 537Q945 535 939 534M858 907Q870 897 885 893M858 907Q847 900 835 895M1019 566Q1022 555 1024 544M1125 622Q1130 606 1143 595M1125 622Q1129 634 1135 645M1081 359Q1096 358 1110 359M767 824Q763 841 769 858M767 824Q780 827 794 825M888 578Q882 578 875 577M888 578Q886 572 883 567M1286 641Q1283 630 1280 620M1286 641Q1300 636 1308 623M840 643Q847 641 854 643M840 643Q845 648 848 654M840 643Q835 644 829 645M1090 623Q1075 624 1062 616M1090 623Q1098 632 1102 645M1108 931Q1097 952 1081 970M1267 882Q1283 859 1292 833M1442 417Q1432 442 1435 469M1442 417Q1446 395 1458 377M875 761Q857 765 842 774M875 761Q863 748 851 736M1239 329Q1228 332 1216 329M1239 329Q1247 340 1259 344M1239 329Q1249 320 1253 307M1239 329Q1254 325 1268 325M1051 588Q1063 588 1074 593M1135 477Q1124 474 1112 475M1135 477Q1141 465 1153 459M905 461Q897 465 892 472M1163 553Q1173 545 1186 543M810 964Q824 969 839 970M1332 954Q1327 932 1322 910M1332 954Q1364 962 1394 975M1175 749Q1186 751 1193 759M816 929Q791 943 778 968M824 867Q814 881 805 896M824 867Q834 879 835 895M1091 477Q1101 478 1112 475M1091 477Q1094 487 1101 495M1091 477Q1084 485 1076 492M1143 401Q1137 390 1126 384M989 451Q999 457 1009 463M900 579Q906 577 910 573M900 579Q898 574 898 568M1055 483Q1052 472 1051 461M1055 483Q1061 495 1058 507M1391 727Q1402 707 1424 699M1391 727Q1365 719 1347 699M967 404Q976 393 976 380M967 404Q961 396 952 393M975 567Q986 566 997 568M975 567Q963 561 950 563M877 557Q883 556 889 557M877 557Q878 552 879 546M954 946Q937 955 917 955M954 946Q977 952 997 966M954 946Q953 931 956 915M987 490Q974 484 967 471M909 602Q909 607 906 612M1186 620Q1174 621 1164 614M1304 717Q1303 699 1291 685M796 851Q795 838 794 825M1292 833Q1272 835 1252 836M864 616Q861 609 858 602M864 616Q866 623 865 629M1256 744Q1247 750 1238 756M860 493Q855 488 853 482M860 493Q867 492 873 490M1215 734Q1198 733 1186 721M1120 509Q1111 521 1101 531M1120 509Q1132 518 1144 526M1120 509Q1110 503 1101 495M1251 440Q1238 441 1229 450M1251 440Q1254 427 1250 413M1136 571Q1124 582 1118 597M1136 571Q1139 583 1143 595M1100 310Q1087 305 1074 300M1100 310Q1088 316 1080 327M1468 927Q1480 947 1482 971M1468 927Q1469 905 1480 887M1088 424Q1098 418 1106 409M916 659Q922 658 927 653M931 898Q945 904 956 915M931 898Q923 887 911 880M767 592Q771 586 771 579M865 480Q870 478 875 475M865 480Q861 474 861 467M865 480Q869 485 873 490M765 787Q778 780 786 767M1024 544Q1037 553 1052 557M1024 544Q1009 537 994 541M1024 544Q1018 530 1010 517M978 778Q977 791 977 803M1062 616Q1070 606 1074 593M1035 476Q1029 463 1029 449M1126 696Q1116 701 1104 699M1126 696Q1127 707 1126 718M1052 557Q1050 546 1054 535M1229 450Q1225 440 1219 430M933 407Q935 402 939 398M933 407Q928 404 923 402M1255 370Q1244 373 1233 374M1255 370Q1246 363 1239 353M1354 395Q1379 391 1401 400M1354 395Q1353 371 1339 352M923 794Q936 804 951 807M923 794Q931 785 942 781M923 794Q911 787 904 776M925 535Q923 544 916 549M925 535Q918 540 909 540M917 955Q940 960 960 972M1458 377Q1431 391 1401 400M903 496Q897 498 892 503M1060 833Q1071 826 1080 817M932 579Q928 576 923 572M788 638Q781 639 775 637M788 638Q794 637 800 638M833 597Q841 601 845 608M833 597Q832 590 833 583M1106 839Q1107 828 1113 819M951 807Q964 806 977 803M951 807Q945 795 942 781M951 807Q963 815 968 828M1193 688Q1210 690 1223 701M1193 688Q1206 684 1218 676M948 673Q943 668 937 665M948 673Q954 682 964 688M948 673Q943 678 940 684M948 673Q950 679 951 684M1233 374Q1221 376 1211 384M1233 374Q1237 364 1239 353M1049 636Q1064 635 1078 642M1096 344Q1086 337 1080 327M1096 344Q1104 334 1114 326M1096 344Q1101 354 1110 359M775 637Q775 631 775 624M775 637Q769 636 764 632M828 690Q836 692 840 698M828 690Q821 693 815 697M828 690Q832 685 833 679M1031 601Q1023 609 1012 613M1066 660Q1075 653 1078 642M1071 718Q1076 705 1081 692M1071 718Q1064 705 1060 691M1071 718Q1061 724 1050 726M781 688Q778 681 777 673M781 688Q775 694 766 695M781 688Q771 686 764 679M781 688Q786 683 792 679M856 546Q853 540 848 537M1292 807Q1280 813 1266 814M1292 807Q1297 795 1296 781M914 419Q909 428 902 435M914 419Q911 412 912 405M847 621Q847 614 845 608M847 621Q842 624 839 630M847 621Q849 627 851 631M839 970Q855 970 870 971M1188 375Q1198 383 1211 384M1188 375Q1182 366 1175 358M1188 375Q1189 387 1184 398M1169 485Q1160 472 1153 459M796 622Q800 626 806 628M796 622Q798 630 800 638M908 679Q912 685 917 690M908 679Q901 679 894 680M908 679Q904 686 902 693M1301 467Q1292 480 1279 488M1301 467Q1291 466 1280 462M1175 453Q1187 446 1199 439M1175 453Q1164 456 1153 459M917 690Q925 691 933 696M917 690Q910 692 902 693M1266 777Q1281 778 1296 781M1266 777Q1281 770 1293 758M811 666Q808 673 804 680M811 666Q806 662 799 661M811 666Q814 672 819 676M1268 597Q1259 591 1249 588M1241 780Q1229 781 1218 778M1241 780Q1240 768 1238 756M942 467Q950 467 958 464M942 467Q945 462 947 457M837 511Q832 516 826 518M1044 247Q1050 278 1074 300M1044 247Q1064 239 1079 224M866 676Q861 679 856 682M866 676Q873 679 878 684M1067 393Q1058 380 1060 364M989 695Q978 687 964 688M1217 410Q1218 396 1211 384M1212 530Q1222 534 1231 540M896 714Q889 706 882 698M896 714Q896 703 902 693M896 714Q893 707 893 699M837 654Q842 652 848 654M915 737Q922 749 934 755M915 737Q930 734 944 730M1046 381Q1052 371 1060 364M857 807Q844 820 827 829M857 807Q854 788 842 774M1102 645Q1105 655 1107 665M885 893Q890 878 891 863M885 893Q897 886 911 880M1223 701Q1217 689 1218 676M916 549Q923 549 930 553M916 549Q915 556 917 562M1127 426Q1135 433 1145 438M1127 426Q1125 437 1122 447M1244 566Q1241 551 1231 540M803 649Q800 644 800 638M767 737Q772 755 786 767M767 737Q773 717 781 699M1217 756Q1221 767 1218 778M1217 756Q1205 759 1193 759M827 829Q810 831 794 825M1107 665Q1096 665 1085 671M949 647Q949 639 952 633M949 647Q943 644 935 644M949 647Q960 649 969 657M1246 517Q1253 509 1262 502M865 558Q859 564 857 572M1216 329Q1221 343 1217 358M805 896Q820 891 835 895M767 613Q767 623 764 632M944 837Q955 831 968 828M777 673Q770 676 764 679M777 673Q782 668 789 667M777 673Q777 667 779 661M1056 324Q1045 321 1036 314M1056 324Q1051 313 1053 300M870 653Q865 655 859 657M870 653Q877 655 884 653M870 653Q870 646 872 640M1139 548Q1125 546 1113 550M851 669Q854 675 856 682M851 669Q847 673 844 678M827 633Q821 632 814 635M827 633Q824 627 819 622M1165 592Q1153 591 1143 595M1165 592Q1165 603 1164 614M875 475Q876 468 873 461M1296 781Q1295 770 1293 758M1081 692Q1093 694 1104 699M1081 692Q1084 682 1085 671M887 461Q891 466 892 472M1218 676Q1224 665 1234 657M1279 488Q1277 503 1277 518M1279 488Q1281 475 1280 462M1279 488Q1268 492 1262 502M1088 512Q1083 502 1076 492M939 515Q946 521 955 522M939 515Q945 513 950 509M1281 388Q1293 390 1304 392M1113 819Q1116 802 1107 787M902 435Q901 429 901 424M1018 766Q1028 761 1038 758M1273 418Q1261 417 1250 413M891 863Q875 861 861 869M891 863Q901 872 911 880M995 721Q1005 715 1016 715M1217 358Q1206 353 1195 349M952 633Q944 629 936 625M952 633Q953 626 950 619M1273 726Q1288 732 1303 740M980 888Q968 880 954 875M842 590Q842 583 845 578M842 590Q849 587 857 586M1259 344Q1256 326 1253 307M1259 344Q1265 335 1268 325M845 608Q852 605 858 602M917 447Q922 441 925 433M917 447Q917 440 914 434M1250 413Q1254 402 1258 392M903 558Q911 558 917 562M897 639Q898 632 899 626M897 639Q890 636 883 638M886 493Q883 499 877 503M886 493Q880 490 873 490M768 658Q767 652 766 647M768 658Q774 659 779 661M1296 605Q1299 616 1308 623M997 966Q979 973 960 972M1197 281Q1190 294 1177 301M899 626Q891 627 882 625M797 693Q801 687 804 680M797 693Q797 686 792 679M797 693Q789 698 781 699M842 774Q852 756 851 736M953 548Q950 555 950 563M953 548Q947 546 941 548M967 471Q962 469 958 464M967 471Q960 462 959 451M1074 300Q1078 313 1080 327M1074 300Q1063 297 1053 300M1156 635Q1144 638 1135 645M1156 635Q1161 625 1164 614M1051 461Q1041 453 1029 449M1229 635Q1219 643 1207 646M1299 507Q1288 512 1277 518M1277 518Q1270 509 1262 502M925 683Q932 683 940 684M1105 765Q1096 755 1091 743M1105 765Q1105 776 1107 787M909 540Q910 532 906 525M989 413Q980 422 975 434M925 632Q929 640 935 644M925 632Q931 630 936 625M831 571Q833 577 833 583M859 657Q865 659 868 664M859 657Q853 656 848 654M882 625Q883 631 883 638M882 625Q886 620 891 617M906 525Q904 519 900 512M851 736Q865 739 879 735M1086 787Q1080 802 1080 817M868 664Q874 662 879 664M1145 438Q1149 448 1153 459M814 635Q818 642 819 651M814 635Q810 631 806 628M814 635Q815 628 819 622M811 533Q817 524 826 518M807 557Q807 564 809 570M882 698Q875 695 868 695M882 698Q881 690 878 684M882 698Q887 698 893 699M912 405Q917 402 923 402M881 607Q875 607 869 603M881 607Q887 611 891 617M832 555Q828 550 823 547M832 555Q838 553 842 548M930 553Q922 555 917 562M930 553Q936 552 941 548M927 672Q933 670 937 665M950 563Q946 568 939 570M1175 358Q1164 362 1154 363M775 624Q769 628 764 632M804 680Q812 679 819 676M804 680Q798 680 792 679M1251 713Q1248 723 1239 730M918 478Q912 478 905 477M918 478Q919 472 923 468M918 478Q925 481 931 483M1298 371Q1321 369 1339 352M1177 301Q1157 291 1136 288M789 667Q794 664 799 661M789 667Q793 672 792 679M789 667Q784 664 779 661M991 601Q1003 604 1012 613M894 680Q897 688 902 693M894 680Q890 676 884 674M1174 770Q1184 765 1193 759M788 581Q786 587 780 591M788 581Q791 576 795 571M906 612Q910 617 911 624M906 612Q899 609 893 606M1112 475Q1113 460 1122 447M1112 475Q1103 484 1101 495M1207 646Q1221 650 1234 657M861 454Q862 444 863 435M794 560Q794 565 795 571M955 522Q953 515 950 509M935 451Q942 453 947 457M856 511Q852 517 850 524M856 511Q862 511 868 510M975 434Q966 433 958 437M1125 800Q1117 793 1107 787M1101 531Q1107 541 1113 550M1101 531Q1089 530 1078 533M814 612Q821 616 829 617M814 612Q816 618 819 622M945 609Q947 614 950 619M945 609Q952 608 960 606M936 625Q943 622 950 619M1192 835Q1205 841 1218 840M1192 835Q1188 824 1178 817M889 403Q898 412 901 424M853 482Q857 474 861 467M934 755Q939 742 944 730M856 682Q850 682 844 678M1218 778Q1216 789 1220 799M888 482Q891 477 892 472M869 603Q864 604 858 602M822 588Q815 590 809 592M822 588Q827 585 833 583M845 578Q850 583 857 586M960 606Q966 616 973 625M1146 724Q1137 718 1126 718M806 628Q801 632 800 638M958 437Q959 430 958 422M969 657Q963 655 960 650M873 523Q871 531 869 540M873 523Q880 519 884 512M873 523Q870 516 868 510M1054 535Q1066 536 1078 533M925 433Q919 432 914 434M925 433Q929 438 935 439M923 572Q920 579 915 585M923 572Q917 573 910 573M868 695Q860 696 852 698M932 424Q936 431 935 439M905 477Q900 472 892 472M848 537Q846 543 842 548M848 537Q847 530 850 524M900 512Q892 512 884 512M1060 364Q1055 353 1046 347M1036 314Q1044 307 1053 300M880 451Q875 455 873 461M829 617Q825 620 819 622M923 468Q920 463 917 458M924 499Q920 494 914 493M883 638Q878 640 872 640M798 596Q803 593 809 592M870 971Q852 959 838 943M915 585Q912 579 910 573M875 577Q878 572 883 567M884 653Q880 658 879 664M910 573Q904 571 898 568M940 684Q945 685 951 684M1280 462Q1296 457 1309 447M892 503Q889 508 884 512M889 557Q884 561 883 567M827 668Q831 673 833 679M872 640Q869 635 865 629M944 581Q943 575 939 570M901 424Q903 417 901 410M877 503Q882 507 884 512M958 464Q953 459 947 457M1058 507Q1069 502 1076 492M839 630Q845 630 851 631"/>
<path stroke="#f3aa94" d="M1113 185Q1092 201 1079 224M947 417Q941 423 932 424M947 433Q948 439 946 445M947 433Q953 434 958 437M947 433Q940 434 935 439M844 502Q845 499 844 497M962 492Q957 496 952 497M962 492Q975 495 987 490M962 492Q959 486 956 479M917 509Q919 503 924 499M1384 342Q1383 348 1384 354M1384 342Q1362 349 1339 352M1342 453Q1344 459 1342 466M1342 453Q1361 442 1382 439M1342 453Q1325 451 1309 447M1354 512Q1353 510 1354 509M1479 491Q1481 478 1480 464M1479 491Q1478 489 1476 487M861 524Q867 524 873 523M861 524Q855 523 850 524M889 531Q897 527 906 525M889 531Q881 527 873 523M848 565Q852 569 857 572M818 577Q825 574 831 571M788 608Q791 600 798 596M788 608Q783 603 777 603M1333 598Q1333 596 1334 595M1333 598Q1321 585 1304 581M1389 598Q1398 576 1391 553M1369 638Q1378 645 1390 648M1257 670Q1247 659 1234 657M1480 664Q1483 686 1482 709M831 705Q831 711 831 716M831 705Q830 697 828 690M831 705Q824 699 815 697M1001 751Q1012 756 1018 766M922 843Q921 849 922 855M993 821Q993 819 993 818M993 821Q1004 820 1013 827M1037 833Q1037 831 1037 830M1037 833Q1025 859 1022 888M1166 841Q1154 836 1141 840M1166 841Q1168 827 1178 817M1081 849Q1070 842 1060 833M1393 777Q1400 800 1394 823M1393 777Q1385 752 1391 727M1393 777Q1368 781 1346 793M1427 781Q1444 792 1451 812M1427 781Q1439 762 1450 742M1451 812Q1460 800 1461 785M1451 812Q1451 810 1451 809M1360 888Q1360 886 1360 885M1360 888Q1342 901 1322 910M1275 948Q1283 913 1267 882M1275 948Q1299 930 1322 910M1013 590Q1008 601 1012 613M868 941Q860 925 858 907M868 941Q870 956 870 971M868 941Q853 946 838 943M927 931Q913 925 898 927M927 931Q940 920 956 915M1050 937Q1031 915 1022 888M1113 198Q1094 208 1079 224M945 412Q943 404 939 398M946 445Q942 450 935 451M946 445Q941 443 935 439M935 496Q939 489 946 483M917 521Q922 519 928 517M970 515Q963 518 955 522M1132 363Q1142 349 1144 332M1167 382Q1162 371 1154 363M1103 387Q1107 397 1106 409M1039 403Q1046 412 1048 423M1039 403Q1028 416 1011 421M1039 403Q1054 402 1067 393M1039 403Q1043 392 1046 381M1048 423Q1055 436 1067 446M1242 490Q1248 476 1257 464M1037 519Q1031 531 1024 544M1037 519Q1047 513 1058 507M1015 485Q1025 480 1035 476M1342 477Q1349 487 1354 497M1354 497Q1355 503 1354 509M1257 464Q1269 462 1280 462M1480 464Q1458 474 1435 469M1476 487Q1476 504 1476 522M1476 487Q1456 476 1435 469M1476 522Q1466 541 1453 558M1500 393Q1474 412 1442 417M848 560Q851 567 857 572M803 582Q801 589 798 596M957 579Q952 572 950 563M957 579Q950 579 944 581M925 594Q927 603 927 611M925 594Q927 586 932 579M925 594Q931 597 937 601M971 597Q981 601 991 601M971 597Q964 594 957 595M994 624Q1006 628 1016 635M994 624Q983 622 973 625M1080 555Q1095 567 1100 586M1080 555Q1075 544 1078 533M1212 552Q1199 549 1186 543M1187 592Q1189 577 1182 565M1187 592Q1184 606 1186 620M1187 592Q1198 582 1213 579M1013 587Q1013 576 1019 566M1237 605Q1250 608 1259 617M1237 605Q1240 595 1249 588M1041 658Q1041 646 1049 636M1041 658Q1053 662 1066 660M1041 658Q1031 664 1022 669M1043 674Q1032 673 1022 669M1043 674Q1052 681 1060 691M1128 672Q1141 671 1152 665M1033 700Q1047 696 1060 691M1033 700Q1025 709 1016 715M1033 700Q1024 693 1012 693M1152 703Q1140 697 1126 696M1152 703Q1161 697 1172 695M1301 538Q1302 544 1301 550M1301 538Q1286 531 1277 518M1301 550Q1287 550 1275 558M1334 595Q1334 573 1345 554M1389 610Q1394 629 1390 648M1463 602Q1455 581 1453 558M1257 682Q1254 697 1251 713M1257 682Q1273 688 1291 685M1476 661Q1455 654 1438 639M831 716Q844 724 851 736M831 716Q821 709 815 697M964 756Q969 768 978 778M922 855Q918 868 911 880M1031 734Q1024 724 1016 715M1144 763Q1147 775 1148 786M1144 763Q1134 767 1125 772M1029 790Q1033 797 1039 802M1039 802Q1041 789 1048 778M1174 796Q1159 799 1147 808M1174 796Q1175 783 1174 770M1242 802Q1256 804 1266 814M1037 830Q1025 826 1013 827M1167 837Q1180 840 1192 835M1167 837Q1175 829 1178 817M1081 865Q1075 846 1060 833M1461 785Q1454 797 1451 809M1461 785Q1453 764 1450 742M1351 849Q1359 866 1360 885M1351 849Q1376 842 1394 823M1446 850Q1426 867 1411 887M1254 543Q1264 552 1275 558M990 663Q980 657 969 657M1090 447Q1093 462 1091 477M1090 447Q1088 435 1088 424M1336 748Q1324 729 1304 717M1336 748Q1347 725 1347 699M1336 748Q1318 749 1303 740M940 654Q945 651 949 647M940 654Q933 655 927 653M940 654Q937 649 935 644M1142 881Q1149 902 1162 920M1289 438Q1301 439 1309 447M1470 310Q1447 317 1423 317M1065 792Q1075 781 1079 767M1065 792Q1076 803 1080 817M873 590Q879 591 885 591M792 725Q801 737 808 750M1182 565Q1172 560 1163 553M1105 722Q1095 730 1091 743M1105 722Q1116 722 1126 718M808 750Q800 762 786 767M780 569Q788 565 794 560M780 569Q788 569 795 571M806 800Q784 801 765 787M822 560Q826 566 831 571M822 560Q828 559 832 555M1188 419Q1176 420 1164 420M1188 419Q1183 409 1184 398M1450 742Q1463 722 1482 709M946 483Q950 490 952 497M946 483Q946 475 942 467M946 483Q938 481 931 483M946 483Q951 481 956 479M1100 586Q1087 590 1074 593M1011 421Q1000 417 989 413M1144 332Q1128 333 1114 326M1144 959Q1125 947 1108 931M1144 959Q1149 937 1162 920M1144 959Q1114 971 1081 970M884 803Q898 792 904 776M884 803Q893 815 899 830M1147 808Q1141 823 1141 840M1147 808Q1136 806 1125 800M1439 966Q1418 977 1394 975M1213 900Q1190 914 1162 920M1213 900Q1210 869 1218 840M1234 824Q1243 831 1252 836M1304 581Q1299 593 1296 605M1016 635Q1032 635 1049 636M1016 635Q1011 625 1012 613M1019 566Q1008 568 997 568M1125 622Q1121 609 1118 597M1081 359Q1089 352 1096 344M1081 359Q1070 358 1060 364M767 824Q761 806 765 787M888 578Q894 578 900 579M888 578Q884 584 885 591M1286 641Q1287 651 1283 661M840 643Q840 649 837 654M1133 743Q1142 736 1146 724M1133 743Q1126 731 1126 718M1090 623Q1085 634 1078 642M1108 931Q1135 925 1162 920M1267 882Q1266 857 1252 836M1442 417Q1420 413 1401 400M875 761Q888 772 904 776M875 761Q879 748 879 735M1239 329Q1242 341 1239 353M1051 588Q1052 604 1062 616M1051 588Q1041 595 1031 601M905 461Q904 469 905 477M905 461Q910 458 917 458M1163 553Q1151 551 1139 548M1213 607Q1198 611 1186 620M1213 607Q1211 593 1213 579M810 964Q794 960 778 968M1175 749Q1184 737 1186 721M1175 749Q1172 760 1174 770M816 929Q809 913 805 896M816 929Q829 933 838 943M824 867Q809 861 796 851M1143 401Q1152 412 1164 420M1143 401Q1133 412 1127 426M989 451Q975 458 967 471M989 451Q982 442 975 434M1273 701Q1275 713 1273 726M1273 701Q1263 708 1251 713M1273 701Q1282 693 1291 685M1055 483Q1046 479 1035 476M1055 483Q1067 486 1076 492M967 404Q977 411 989 413M967 404Q961 405 955 405M967 404Q966 415 958 422M877 557Q871 558 865 558M877 557Q879 563 883 567M954 946Q960 958 960 972M909 602Q904 596 897 594M909 602Q901 604 893 606M1186 620Q1180 631 1178 644M1304 717Q1325 707 1347 699M1304 717Q1288 719 1273 726M1304 717Q1302 728 1303 740M796 851Q783 857 769 858M1292 833Q1297 820 1292 807M1292 833Q1276 828 1266 814M864 616Q868 610 869 603M1256 744Q1264 735 1273 726M1256 744Q1245 739 1239 730M860 493Q863 487 865 480M1215 734Q1214 745 1217 756M1215 734Q1228 736 1239 730M1294 411Q1284 401 1281 388M1294 411Q1283 414 1273 418M1294 411Q1302 402 1304 392M1136 571Q1140 560 1139 548M1136 571Q1121 564 1113 550M1088 424Q1080 437 1067 446M916 659Q920 667 927 672M916 659Q912 664 905 666M916 659Q910 653 902 651M931 898Q944 887 954 875M767 592Q773 589 780 591M767 592Q770 599 777 603M865 480Q859 483 853 482M978 778Q993 779 1006 786M1062 616Q1054 625 1049 636M1035 476Q1043 468 1051 461M1229 450Q1223 465 1222 481M1255 370Q1255 381 1258 392M1354 395Q1330 390 1304 392M925 535Q932 536 939 534M917 955Q913 938 898 927M1411 887Q1446 898 1480 887M1435 469Q1434 491 1431 513M1435 469Q1416 482 1395 488M903 496Q895 494 886 493M903 496Q909 495 914 493M1424 699Q1454 701 1482 709M932 579Q938 580 944 581M932 579Q936 575 939 570M1201 468Q1185 465 1175 453M1201 468Q1212 474 1222 481M1201 468Q1198 454 1199 439M1201 468Q1197 478 1190 487M788 638Q788 645 787 652M833 597Q838 593 842 590M833 597Q828 601 822 603M1275 558Q1278 569 1282 579M1106 839Q1095 826 1080 817M1193 688Q1182 688 1172 695M1193 688Q1186 679 1186 668M948 673Q951 668 957 667M1233 374Q1224 367 1217 358M775 637Q771 642 766 647M1431 513Q1410 505 1395 488M1066 660Q1074 668 1085 671M781 688Q783 693 781 699M856 546Q859 553 865 558M856 546Q862 541 869 540M914 419Q907 422 901 424M914 419Q914 427 914 434M839 970Q839 956 838 943M1186 721Q1184 706 1172 695M1188 375Q1189 362 1195 349M1169 485Q1180 484 1190 487M908 679Q904 673 905 666M1006 786Q1013 777 1018 766M1006 786Q1008 796 1014 806M1301 467Q1305 457 1309 447M1079 767Q1072 758 1067 747M1079 767Q1092 765 1105 765M1079 767Q1082 778 1086 787M917 690Q920 686 925 683M1266 777Q1254 781 1241 780M994 541Q998 554 997 568M994 541Q1001 528 1010 517M897 594Q891 592 885 591M897 594Q894 599 893 606M1268 597Q1276 589 1282 579M1268 597Q1266 608 1259 617M1266 814Q1255 823 1252 836M1044 247Q1048 273 1053 300M866 676Q868 670 868 664M1067 393Q1058 385 1046 381M989 695Q989 708 995 721M989 695Q1001 690 1012 693M1217 410Q1220 420 1219 430M1212 530Q1210 517 1201 507M896 714Q903 728 915 737M896 714Q891 727 879 735M837 654Q833 650 829 645M1067 747Q1059 736 1050 726M1067 747Q1078 741 1091 743M1102 645Q1090 643 1078 642M885 893Q870 884 861 869M1202 810Q1197 800 1195 790M1202 810Q1209 825 1218 840M1202 810Q1190 813 1178 817M1202 810Q1212 807 1220 799M1164 420Q1153 428 1145 438M1118 597Q1130 594 1143 595M1223 701Q1235 712 1251 713M916 549Q911 546 909 540M1127 426Q1115 419 1106 409M1244 566Q1248 577 1249 588M803 649Q811 650 819 651M803 649Q802 655 799 661M1217 756Q1228 755 1238 756M840 698Q846 697 852 698M949 647Q955 648 960 650M1246 517Q1236 527 1231 540M1216 329Q1204 337 1195 349M805 896Q788 902 771 908M767 613Q771 619 775 624M767 613Q773 609 777 603M777 673Q770 667 768 658M1056 324Q1068 325 1080 327M1056 324Q1050 335 1046 347M870 653Q867 658 868 664M1139 548Q1140 537 1144 526M851 669Q845 667 839 667M827 633Q830 639 829 645M827 633Q834 633 839 630M977 803Q970 815 968 828M1391 553Q1368 559 1345 554M875 475Q883 477 888 482M1296 781Q1321 785 1346 793M1201 507Q1194 498 1190 487M1022 669Q1018 681 1012 693M1081 692Q1070 688 1060 691M877 440Q871 449 861 454M877 440Q878 445 880 451M1279 488Q1289 497 1299 507M1088 512Q1092 524 1101 531M1088 512Q1085 524 1078 533M1088 512Q1096 505 1101 495M939 515Q934 517 928 517M1281 388Q1290 380 1298 371M1281 388Q1269 388 1258 392M1113 819Q1121 811 1125 800M902 435Q908 435 914 434M995 721Q986 728 983 739M1217 358Q1227 353 1239 353M1293 758Q1295 748 1303 740M952 633Q964 632 973 625M1273 726Q1260 723 1251 713M980 888Q968 902 956 915M842 590Q838 586 833 583M1172 695Q1178 681 1186 668M1259 344Q1251 352 1239 353M927 653Q932 649 935 644M917 447Q915 453 917 458M903 558Q896 555 889 557M903 558Q900 563 898 568M897 639Q905 642 912 639M897 639Q899 645 902 651M886 493Q885 487 888 482M886 493Q888 499 892 503M1296 605Q1290 614 1280 620M899 626Q905 623 911 624M899 626Q897 620 891 617M797 693Q805 698 815 697M1152 665Q1158 650 1156 635M1152 665Q1143 656 1135 645M967 471Q963 477 956 479M1156 635Q1167 639 1178 644M1051 461Q1058 452 1067 446M1229 635Q1241 638 1253 639M1229 635Q1234 645 1234 657M933 696Q928 690 925 683M933 696Q942 696 950 698M933 696Q937 690 940 684M925 683Q925 677 927 672M1105 765Q1116 765 1125 772M1253 639Q1247 651 1234 657M1253 639Q1257 628 1259 617M976 380Q962 384 952 393M925 632Q918 634 912 639M1253 307Q1261 315 1268 325M942 781Q934 769 934 755M1086 787Q1097 790 1107 787M1145 438Q1133 442 1122 447M811 533Q821 534 829 538M766 695Q764 687 764 679M766 695Q774 696 781 699M807 557Q800 557 794 560M807 557Q808 551 812 546M912 405Q906 407 901 410M839 667Q843 672 844 678M839 667Q833 668 827 668M881 607Q887 608 893 606M1029 449Q1020 459 1009 463M1175 358Q1185 355 1195 349M771 579Q776 584 780 591M1280 620Q1293 625 1308 623M1280 620Q1270 615 1259 617M857 572Q852 576 845 578M857 572Q858 579 857 586M1199 439Q1210 436 1219 430M918 478Q915 485 914 493M1298 371Q1301 381 1304 392M789 667Q790 659 787 652M1178 644Q1192 647 1207 646M1178 644Q1184 655 1186 668M917 562Q922 566 923 572M917 562Q913 567 910 573M861 454Q859 460 861 467M861 454Q866 460 873 461M1252 836Q1235 836 1218 840M935 451Q934 445 935 439M1013 827Q1016 816 1014 806M975 434Q967 427 958 422M1125 800Q1137 794 1148 786M814 612Q817 607 822 603M945 609Q940 607 937 601M902 693Q897 695 893 699M912 639Q909 632 911 624M912 639Q906 644 902 651M819 651Q824 649 829 645M856 682Q855 691 852 698M1218 778Q1205 780 1195 790M1291 685Q1291 672 1283 661M822 588Q823 596 822 603M845 578Q838 579 833 583M960 606Q957 601 957 595M964 688Q956 692 950 698M964 688Q957 687 951 684M829 538Q825 542 823 547M1038 758Q1041 769 1048 778M854 643Q850 648 848 654M854 643Q852 637 851 631M969 657Q963 663 957 667M925 433Q928 428 932 424M950 698Q950 691 951 684M787 652Q784 657 779 661M868 695Q873 690 878 684M900 512Q895 509 892 503M1016 715Q1011 704 1012 693M829 617Q827 609 822 603M923 468Q928 475 931 483M957 667Q957 658 960 650M861 467Q867 464 873 461M941 548Q937 541 939 534M869 540Q874 543 879 546M844 678Q839 678 833 679M827 668Q823 672 819 676M764 632Q767 639 766 647M877 503Q873 507 868 510M819 676Q826 678 833 679M865 629Q858 629 851 631M879 664Q883 668 884 674M780 591Q779 597 777 603M878 684Q879 678 884 674M958 464Q958 458 959 451M1125 772Q1115 779 1107 787M893 606Q891 611 891 617M947 457Q953 456 959 451"/>
</g>
<path fill="none" stroke="#c9a3d2" stroke-width="1" opacity=".85" d="M975.0 470.0C979.2 473.3 990.8 488.7 1000.0 490.0C1009.2 491.3 1021.7 476.3 1030.0 478.0C1038.3 479.7 1042.5 495.5 1050.0 500.0C1057.5 504.5 1069.2 500.0 1075.0 505.0C1080.8 510.0 1086.7 520.8 1085.0 530.0C1083.3 539.2 1068.3 555.0 1065.0 560.0M1065.0 560.0C1060.8 562.5 1047.5 568.3 1040.0 575.0C1032.5 581.7 1026.7 595.0 1020.0 600.0C1013.3 605.0 1003.3 604.2 1000.0 605.0M1000.0 605.0C995.8 606.2 984.2 608.7 975.0 612.0C965.8 615.3 953.3 623.3 945.0 625.0C936.7 626.7 928.3 622.5 925.0 622.0M1065.0 560.0C1069.2 558.0 1083.3 547.2 1090.0 548.0C1096.7 548.8 1102.5 562.2 1105.0 565.0M1105.0 565.0C1106.7 570.8 1112.5 590.0 1115.0 600.0C1117.5 610.0 1119.2 620.8 1120.0 625.0M1120.0 625.0C1115.8 627.5 1102.5 633.3 1095.0 640.0C1087.5 646.7 1080.8 658.3 1075.0 665.0C1069.2 671.7 1062.5 677.5 1060.0 680.0M1000.0 605.0C1001.7 609.2 1006.7 621.7 1010.0 630.0C1013.3 638.3 1015.8 647.5 1020.0 655.0C1024.2 662.5 1030.8 669.2 1035.0 675.0C1039.2 680.8 1043.3 687.5 1045.0 690.0M1060.0 680.0C1062.5 680.0 1068.3 676.7 1075.0 680.0C1081.7 683.3 1094.2 690.0 1100.0 700.0C1105.8 710.0 1109.2 725.0 1110.0 740.0C1110.8 755.0 1108.3 775.8 1105.0 790.0C1101.7 804.2 1092.5 819.2 1090.0 825.0M1120.0 625.0C1125.0 627.5 1138.3 638.8 1150.0 640.0C1161.7 641.2 1179.2 634.0 1190.0 632.0C1200.8 630.0 1210.8 628.7 1215.0 628.0M1105.0 565.0C1110.8 563.3 1129.2 555.0 1140.0 555.0C1150.8 555.0 1160.8 561.7 1170.0 565.0C1179.2 568.3 1189.2 569.2 1195.0 575.0C1200.8 580.8 1201.7 591.2 1205.0 600.0C1208.3 608.8 1213.3 623.3 1215.0 628.0M1195.0 575.0C1198.3 571.7 1207.5 560.0 1215.0 555.0C1222.5 550.0 1230.0 545.8 1240.0 545.0C1250.0 544.2 1263.3 550.0 1275.0 550.0C1286.7 550.0 1300.8 545.0 1310.0 545.0C1319.2 545.0 1326.7 549.2 1330.0 550.0M1240.0 545.0C1237.5 539.2 1230.8 520.8 1225.0 510.0C1219.2 499.2 1210.8 490.0 1205.0 480.0C1199.2 470.0 1195.0 457.5 1190.0 450.0C1185.0 442.5 1177.5 437.5 1175.0 435.0M1175.0 435.0C1170.8 439.2 1155.0 449.2 1150.0 460.0C1145.0 470.8 1148.3 488.3 1145.0 500.0C1141.7 511.7 1136.7 519.2 1130.0 530.0C1123.3 540.8 1109.2 559.2 1105.0 565.0M1175.0 435.0C1180.8 433.3 1197.5 428.3 1210.0 425.0C1222.5 421.7 1237.5 418.3 1250.0 415.0C1262.5 411.7 1276.7 408.3 1285.0 405.0C1293.3 401.7 1297.5 396.7 1300.0 395.0M1130.0 395.0C1133.3 397.5 1142.5 403.3 1150.0 410.0C1157.5 416.7 1170.8 430.8 1175.0 435.0M1095.0 375.0C1097.5 375.5 1107.2 375.5 1110.0 378.0C1112.8 380.5 1114.0 387.7 1112.0 390.0C1110.0 392.3 1100.8 394.5 1098.0 392.0C1095.2 389.5 1095.5 377.8 1095.0 375.0M1045.0 690.0C1042.5 692.5 1034.2 699.2 1030.0 705.0C1025.8 710.8 1021.7 721.7 1020.0 725.0M990.0 690.0C986.7 691.7 975.0 695.0 970.0 700.0C965.0 705.0 957.5 715.8 960.0 720.0C962.5 724.2 980.8 724.2 985.0 725.0M1240.0 450.0C1244.2 449.2 1259.2 443.0 1265.0 445.0C1270.8 447.0 1276.2 457.5 1275.0 462.0C1273.8 466.5 1263.5 471.5 1258.0 472.0C1252.5 472.5 1245.0 468.7 1242.0 465.0C1239.0 461.3 1240.3 452.5 1240.0 450.0M1300.0 395.0C1308.3 395.8 1333.3 402.5 1350.0 400.0C1366.7 397.5 1385.0 380.0 1400.0 380.0C1415.0 380.0 1426.0 398.3 1440.0 400.0C1454.0 401.7 1476.7 391.7 1484.0 390.0M1400.0 380.0C1401.7 371.7 1411.7 343.3 1410.0 330.0C1408.3 316.7 1393.3 305.0 1390.0 300.0M1350.0 400.0C1349.2 408.3 1340.0 436.7 1345.0 450.0C1350.0 463.3 1375.8 468.3 1380.0 480.0C1384.2 491.7 1376.7 510.0 1370.0 520.0C1363.3 530.0 1345.0 536.7 1340.0 540.0M1380.0 480.0C1390.0 478.3 1422.7 470.0 1440.0 470.0C1457.3 470.0 1476.7 478.3 1484.0 480.0M1370.0 520.0C1378.3 526.7 1401.0 555.0 1420.0 560.0C1439.0 565.0 1473.3 551.7 1484.0 550.0M1290.0 640.0C1295.0 643.3 1313.3 650.0 1320.0 660.0C1326.7 670.0 1333.3 688.3 1330.0 700.0C1326.7 711.7 1305.0 725.0 1300.0 730.0M1330.0 700.0C1338.3 698.3 1365.0 686.7 1380.0 690.0C1395.0 693.3 1410.0 708.3 1420.0 720.0C1430.0 731.7 1436.7 753.3 1440.0 760.0M1380.0 690.0C1383.3 681.7 1398.3 653.3 1400.0 640.0C1401.7 626.7 1391.7 615.0 1390.0 610.0M1290.0 790.0C1296.7 791.7 1321.7 791.7 1330.0 800.0C1338.3 808.3 1345.0 830.0 1340.0 840.0C1335.0 850.0 1313.3 858.3 1300.0 860.0C1286.7 861.7 1266.7 851.7 1260.0 850.0M1340.0 840.0C1350.0 838.3 1385.0 836.7 1400.0 830.0C1415.0 823.3 1425.0 805.0 1430.0 800.0M1400.0 830.0 1410.0 880.0M1200.0 850.0C1205.0 853.3 1220.0 870.0 1230.0 870.0C1240.0 870.0 1255.0 853.3 1260.0 850.0M800.0 700.0C806.7 703.3 831.7 708.3 840.0 720.0C848.3 731.7 840.0 758.3 850.0 770.0C860.0 781.7 886.7 791.7 900.0 790.0C913.3 788.3 925.0 765.0 930.0 760.0M850.0 770.0C845.0 778.3 823.3 801.7 820.0 820.0C816.7 838.3 820.0 866.7 830.0 880.0C840.0 893.3 861.7 900.0 880.0 900.0C898.3 900.0 930.0 883.3 940.0 880.0M764.0 760.0C770.0 765.0 790.7 780.0 800.0 790.0C809.3 800.0 816.7 815.0 820.0 820.0M880.0 420.0C883.3 425.0 891.7 446.7 900.0 450.0C908.3 453.3 920.0 440.0 930.0 440.0C940.0 440.0 955.0 448.3 960.0 450.0M860.0 470.0C866.7 471.7 888.3 475.0 900.0 480.0C911.7 485.0 920.0 497.5 930.0 500.0C940.0 502.5 955.0 495.8 960.0 495.0M830.0 520.0C836.7 521.7 858.3 523.3 870.0 530.0C881.7 536.7 890.0 555.8 900.0 560.0C910.0 564.2 925.0 555.8 930.0 555.0M850.0 500.0 870.0 530.0M1020.0 235.0C1026.7 234.2 1049.2 228.3 1060.0 230.0C1070.8 231.7 1080.8 242.5 1085.0 245.0M1270.0 190.0C1275.0 189.2 1293.3 180.8 1300.0 185.0C1306.7 189.2 1305.0 208.3 1310.0 215.0C1315.0 221.7 1326.7 223.3 1330.0 225.0M1040.0 880.0C1046.7 883.3 1066.7 898.3 1080.0 900.0C1093.3 901.7 1113.3 891.7 1120.0 890.0M940.0 820.0C943.3 825.0 950.0 843.3 960.0 850.0C970.0 856.7 993.3 858.3 1000.0 860.0"/>
<path d="M1244.0 265.3C1246.4 265.4 1253.4 267.0 1258.6 266.2C1263.8 265.4 1269.6 261.2 1275.1 260.7C1280.6 260.2 1287.3 263.2 1291.6 263.4C1295.9 263.5 1296.4 265.2 1300.7 261.6C1305.0 258.0 1314.3 246.7 1317.2 241.5C1320.1 236.3 1318.9 234.5 1318.1 230.5C1317.3 226.5 1309.4 221.8 1312.6 217.7C1315.8 213.6 1331.7 207.3 1337.3 205.8C1342.9 204.3 1343.1 206.9 1346.4 208.6C1349.8 210.3 1353.7 214.5 1357.4 215.9C1361.1 217.3 1364.7 217.9 1368.4 216.8C1372.1 215.7 1375.1 212.4 1379.4 209.5C1383.7 206.6 1389.1 202.6 1394.0 199.4C1398.9 196.2 1404.9 194.3 1408.6 190.3C1412.2 186.3 1413.9 180.5 1415.9 175.6C1417.9 170.7 1419.7 163.4 1420.5 161.0" fill="none" stroke="#a98cc9" stroke-width="1.300" opacity=".85"/>
<path d="M1324.5 239.7C1326.9 239.0 1334.8 235.6 1339.1 235.6C1343.4 235.6 1347.4 237.5 1350.1 239.7C1352.8 241.9 1354.6 243.0 1355.2 248.8C1355.8 254.6 1354.9 268.0 1353.7 274.4C1352.5 280.8 1351.3 283.8 1348.3 287.2C1345.3 290.6 1340.1 293.9 1335.5 294.5C1330.9 295.1 1325.7 293.0 1320.8 290.9C1315.9 288.8 1309.6 285.1 1306.2 281.7C1302.8 278.3 1300.9 273.8 1300.3 270.7C1299.7 267.6 1298.5 268.6 1302.5 263.4C1306.5 258.2 1320.8 243.6 1324.5 239.7" fill="none" stroke="#a98cc9" stroke-width="1.300" opacity=".85"/>
<path d="M1484.0 275.9C1480.6 275.9 1470.0 275.5 1463.5 276.2C1457.0 276.9 1451.3 278.1 1445.2 279.9C1439.1 281.7 1433.0 284.4 1426.9 287.2C1420.8 289.9 1414.7 294.0 1408.6 296.4C1402.5 298.8 1394.9 299.1 1390.3 301.8C1385.7 304.5 1383.6 309.9 1381.2 312.8C1378.8 315.7 1380.3 317.1 1375.7 319.2C1371.1 321.3 1361.0 323.3 1353.7 325.6C1346.4 327.9 1338.8 330.3 1331.8 332.9C1324.8 335.5 1315.0 339.6 1311.7 341.0" fill="none" stroke="#a98cc9" stroke-width="1.300" opacity=".85"/>
<path d="M1244.0 289.0C1245.8 288.7 1251.0 286.9 1255.0 287.2C1259.0 287.5 1263.5 288.5 1267.8 290.9C1272.1 293.3 1277.2 297.2 1280.6 301.8C1283.9 306.4 1286.5 312.8 1287.9 318.3C1289.3 323.8 1287.9 331.0 1288.8 334.8C1289.7 338.6 1292.6 340.0 1293.4 341.0" fill="none" stroke="#a98cc9" stroke-width="1.300" opacity=".85"/>
<path d="M1311.7 217.7 1309.8 195.8" fill="none" stroke="#a98cc9" stroke-width="1.300" opacity=".85"/>
<path d="M1385.8 172.0 1386.7 203.1" fill="none" stroke="#a98cc9" stroke-width="1.300" opacity=".85"/>
<path d="M1000.0 357.5C997.2 358.1 989.3 359.3 983.5 361.1C977.7 362.9 972.8 365.6 965.2 368.4C957.6 371.1 948.5 374.9 937.8 377.6C927.1 380.4 911.9 382.2 901.2 384.9C890.5 387.6 881.3 390.4 873.7 394.0C866.1 397.6 860.2 401.0 855.5 406.8C850.8 412.6 847.2 421.5 845.4 428.8C843.6 436.1 845.6 443.4 844.5 450.7C843.4 458.0 841.8 465.4 839.0 472.7C836.2 480.0 832.3 488.5 828.0 494.6C823.7 500.7 817.4 504.9 813.4 509.3C809.4 513.7 805.7 519.0 804.2 521.0" fill="none" stroke="#a98cc9" stroke-width="1.300" opacity=".85"/>
<path d="M937.8 377.6C939.3 379.4 943.1 385.0 946.9 388.6C950.7 392.2 957.5 397.4 960.6 399.5C963.7 401.6 964.4 401.1 965.2 401.4" fill="none" stroke="#a98cc9" stroke-width="1.300" opacity=".85"/>
<path d="M1001.4 161.0C1001.6 167.9 1002.9 190.3 1002.7 202.2C1002.5 214.1 999.1 224.2 1000.0 232.4C1000.9 240.6 1005.7 246.1 1008.2 251.6C1010.7 257.1 1014.4 260.7 1015.1 265.3C1015.8 269.9 1013.3 273.5 1012.4 279.0C1011.5 284.5 1008.5 290.0 1009.6 298.2C1010.7 306.4 1021.7 322.9 1019.2 328.4C1016.7 333.9 1000.0 328.4 994.5 331.1C989.0 333.9 987.9 341.0 986.3 344.9C984.7 348.8 984.2 353.1 984.9 354.5C985.6 355.9 987.9 353.8 990.4 353.1C992.9 352.4 995.2 350.4 1000.0 350.4C1004.8 350.4 1012.3 352.0 1019.2 353.1C1026.1 354.2 1037.5 356.5 1041.2 357.2" fill="none" stroke="#a98cc9" stroke-width="1.300" opacity=".85"/>
<path d="M1012.4 270.8 1030.2 273.5" fill="none" stroke="#a98cc9" stroke-width="1.300" opacity=".85"/>
<path d="M1100.0 291.2C1101.6 292.0 1107.5 294.0 1109.6 296.1C1111.7 298.2 1108.2 301.7 1112.8 304.1C1117.3 306.5 1132.6 311.0 1136.9 310.5C1141.2 310.0 1137.4 303.0 1138.5 300.9C1139.6 298.8 1141.7 296.6 1143.3 297.7C1144.9 298.8 1144.7 304.1 1148.2 307.3C1151.7 310.5 1158.3 314.5 1164.2 316.9C1170.1 319.3 1177.6 321.2 1183.5 321.7C1189.4 322.2 1194.7 322.5 1199.5 320.1C1204.3 317.7 1206.8 312.4 1212.4 307.3C1218.0 302.2 1229.5 294.2 1233.2 289.6C1237.0 285.1 1234.6 281.6 1234.9 280.0" fill="none" stroke="#a98cc9" stroke-width="1.300" opacity=".85"/>
<path d="M1177.1 331.4C1180.8 330.6 1193.6 330.6 1199.5 326.6C1205.4 322.6 1207.6 312.4 1212.4 307.3C1217.2 302.2 1223.1 299.1 1228.4 296.1C1233.8 293.2 1239.2 291.0 1244.5 289.6C1249.8 288.2 1255.2 287.2 1260.5 288.0C1265.8 288.8 1272.3 290.4 1276.6 294.4C1280.9 298.4 1284.1 305.7 1286.2 312.1C1288.3 318.5 1287.9 327.1 1289.4 333.0C1290.9 338.9 1293.6 342.4 1295.1 347.4C1296.6 352.4 1297.8 360.6 1298.3 363.2" fill="none" stroke="#a98cc9" stroke-width="1.300" opacity=".85"/>
<path d="M1295.1 346.6C1298.7 345.7 1309.2 343.5 1316.7 341.0C1324.2 338.5 1336.1 333.0 1340.0 331.4" fill="none" stroke="#a98cc9" stroke-width="1.300" opacity=".85"/>
<path d="M1177.1 331.4 1148.2 355.5" fill="none" stroke="#a98cc9" stroke-width="1.300" opacity=".85"/>
<path d="M1161.3 161.0C1160.4 164.7 1158.8 175.3 1155.8 182.9C1152.8 190.5 1146.3 201.5 1143.0 206.7C1139.7 211.9 1136.9 210.9 1135.7 214.0C1134.5 217.1 1134.5 222.2 1135.7 225.0C1136.9 227.8 1140.6 227.8 1143.0 230.5C1145.4 233.2 1149.1 239.7 1150.3 241.5" fill="none" stroke="#a98cc9" stroke-width="1.300" opacity=".85"/>
<path d="M1197.9 161.0C1198.5 162.8 1198.2 168.7 1201.5 172.0C1204.8 175.3 1214.3 176.8 1218.0 181.1C1221.7 185.4 1221.7 191.8 1223.5 197.6C1225.3 203.4 1226.2 210.4 1229.0 215.9C1231.8 221.4 1237.5 226.8 1240.0 230.5C1242.5 234.2 1243.3 236.6 1244.0 237.8" fill="none" stroke="#a98cc9" stroke-width="1.300" opacity=".85"/>
<path d="M1221.7 248.8C1223.2 253.1 1228.4 267.7 1230.8 274.4C1233.2 281.1 1234.1 285.6 1236.3 289.0C1238.5 292.4 1242.7 293.6 1244.0 294.5" fill="none" stroke="#a98cc9" stroke-width="1.300" opacity=".85"/>
<path d="M1106.4 294.5C1107.6 296.3 1110.7 302.8 1113.7 305.5C1116.8 308.2 1119.8 310.7 1124.7 311.0C1129.6 311.3 1136.9 308.2 1143.0 307.3C1149.1 306.4 1154.6 304.9 1161.3 305.5C1168.0 306.1 1177.5 311.0 1183.3 311.0C1189.1 311.0 1192.1 309.2 1196.1 305.5C1200.0 301.8 1202.7 294.8 1207.0 289.0C1211.3 283.2 1217.7 273.1 1221.7 270.7C1225.7 268.3 1229.3 273.8 1230.8 274.4" fill="none" stroke="#a98cc9" stroke-width="1.300" opacity=".85"/>
<path d="M1295.2 341.0C1295.2 344.4 1294.6 355.0 1295.2 361.1C1295.8 367.2 1297.7 370.9 1298.9 377.6C1300.1 384.3 1301.3 395.3 1302.5 401.4C1303.7 407.5 1307.1 409.9 1306.2 414.2C1305.3 418.5 1299.4 422.7 1297.0 427.0C1294.6 431.3 1291.9 436.2 1291.6 439.8C1291.3 443.4 1292.8 445.5 1295.2 448.9C1297.6 452.2 1303.5 456.8 1306.2 459.9C1309.0 462.9 1310.5 463.8 1311.7 467.2C1312.9 470.6 1312.9 476.3 1313.5 480.0C1314.1 483.7 1314.4 485.8 1315.3 489.2C1316.2 492.6 1318.7 496.2 1319.0 500.1C1319.3 504.1 1318.1 509.4 1317.2 512.9C1316.3 516.4 1314.1 519.6 1313.5 521.0" fill="none" stroke="#c39ac9" stroke-width="1.700" opacity=".8" stroke-linejoin="round"/>
<path d="M1313.5 521.0C1314.1 522.8 1314.5 528.6 1317.2 532.0C1320.0 535.4 1327.6 537.5 1330.0 541.1C1332.4 544.8 1331.8 549.3 1331.8 553.9C1331.8 558.5 1330.9 564.3 1330.0 568.6C1329.1 572.9 1324.8 577.4 1326.3 579.5C1327.8 581.6 1338.8 579.6 1339.1 581.4C1339.4 583.2 1331.8 588.4 1328.1 590.5C1324.4 592.6 1320.8 594.2 1317.2 594.2C1313.6 594.2 1308.3 591.9 1306.2 590.5C1304.1 589.1 1307.2 585.6 1304.4 585.9C1301.7 586.2 1293.7 590.6 1289.7 592.3C1285.7 594.0 1285.2 593.5 1280.6 596.0C1276.0 598.5 1268.4 604.0 1262.3 607.0C1256.2 610.0 1247.0 613.1 1244.0 614.3" fill="none" stroke="#c39ac9" stroke-width="1.700" opacity=".8" stroke-linejoin="round"/>
<path d="M1244.0 624.3C1242.1 623.7 1236.0 620.9 1232.6 620.7C1229.2 620.6 1227.2 622.0 1223.5 623.4C1219.8 624.8 1215.0 628.0 1210.7 628.9C1206.4 629.8 1198.8 628.0 1197.9 628.9C1197.0 629.8 1203.1 631.6 1205.2 634.4C1207.3 637.1 1208.6 642.0 1210.7 645.4C1212.8 648.8 1217.1 651.1 1218.0 654.5C1218.9 657.9 1215.9 661.5 1216.2 665.5C1216.5 669.5 1218.3 674.9 1219.8 678.3C1221.3 681.6 1223.5 682.5 1225.3 685.6C1227.1 688.7 1229.0 694.0 1230.8 696.6C1232.6 699.2 1235.4 700.3 1236.3 701.0" fill="none" stroke="#c39ac9" stroke-width="1.700" opacity=".8" stroke-linejoin="round"/>
<path d="M1240.3 693.7C1242.8 696.8 1250.4 706.8 1255.0 712.0C1259.6 717.2 1264.1 720.5 1267.8 724.8C1271.5 729.1 1275.7 733.0 1276.9 737.6C1278.1 742.2 1276.9 749.2 1275.1 752.2C1273.3 755.2 1268.7 754.4 1265.9 755.9C1263.2 757.4 1260.4 759.0 1258.6 761.4C1256.8 763.8 1257.4 768.4 1255.0 770.5C1252.6 772.6 1245.8 773.6 1244.0 774.2" fill="none" stroke="#c39ac9" stroke-width="1.700" opacity=".8" stroke-linejoin="round"/>
<path d="M1276.9 737.6C1279.0 739.7 1283.0 748.3 1289.7 750.4C1296.4 752.5 1311.4 752.5 1317.2 750.4C1323.0 748.3 1322.1 742.5 1324.5 737.6C1326.9 732.7 1328.1 723.2 1331.8 721.1C1335.5 719.0 1341.5 723.6 1346.4 724.8C1351.3 726.0 1355.6 726.0 1361.1 728.4C1366.6 730.8 1373.6 737.9 1379.4 739.4C1385.2 740.9 1390.9 737.5 1395.8 737.6C1400.7 737.8 1404.6 739.1 1408.6 740.3C1412.6 741.5 1416.5 746.0 1419.6 744.9C1422.6 743.8 1423.2 736.0 1426.9 733.9C1430.6 731.8 1436.0 733.0 1441.5 732.1C1447.0 731.2 1454.3 731.8 1459.8 728.4C1465.3 725.0 1470.5 716.3 1474.5 712.0C1478.5 707.7 1482.4 704.3 1484.0 702.8" fill="none" stroke="#c39ac9" stroke-width="1.700" opacity=".8" stroke-linejoin="round"/>
<path d="M1419.6 744.9C1419.0 747.6 1415.0 755.3 1415.9 761.4C1416.8 767.5 1423.3 775.7 1425.1 781.5C1426.9 787.3 1426.9 791.2 1426.9 796.1C1426.9 801.0 1430.3 807.7 1425.1 810.7C1419.9 813.8 1398.8 812.6 1395.8 814.4C1392.8 816.2 1406.8 818.7 1406.8 821.7C1406.8 824.8 1397.0 827.5 1395.8 832.7C1394.6 837.9 1401.6 847.3 1399.5 852.8C1397.4 858.3 1383.9 860.9 1383.0 865.6C1382.1 870.3 1391.9 878.0 1394.0 881.0C1396.1 884.0 1396.4 881.0 1395.8 883.9C1395.2 886.8 1394.3 895.5 1390.3 898.5C1386.3 901.5 1375.0 901.6 1372.0 902.2" fill="none" stroke="#c39ac9" stroke-width="1.700" opacity=".8" stroke-linejoin="round"/>
<path d="M1425.1 781.5C1427.8 783.9 1435.1 792.5 1441.5 796.1C1447.9 799.8 1456.4 801.0 1463.5 803.4C1470.6 805.8 1480.6 809.5 1484.0 810.7" fill="none" stroke="#c39ac9" stroke-width="1.700" opacity=".8" stroke-linejoin="round"/>
<path d="M1328.1 590.5C1331.1 591.1 1339.7 592.7 1346.4 594.2C1353.1 595.7 1360.2 596.7 1368.4 599.7C1376.6 602.8 1392.8 608.9 1395.8 612.5C1398.8 616.1 1387.3 618.9 1386.7 621.6C1386.1 624.3 1387.3 628.6 1392.2 628.9C1397.1 629.2 1411.0 622.5 1415.9 623.4C1420.8 624.3 1422.6 631.3 1421.4 634.4C1420.2 637.5 1407.7 641.1 1408.6 641.7C1409.5 642.3 1421.4 639.6 1426.9 638.1C1432.4 636.6 1436.9 633.8 1441.5 632.6C1446.1 631.4 1451.7 628.0 1454.4 630.7C1457.2 633.4 1455.0 644.7 1458.0 649.0C1461.0 653.3 1468.3 656.4 1472.6 656.4C1476.9 656.4 1482.1 650.2 1484.0 649.0" fill="none" stroke="#c39ac9" stroke-width="1.700" opacity=".8" stroke-linejoin="round"/>
<path d="M1031.4 808.9C1034.5 808.6 1045.1 806.8 1049.7 807.1C1054.3 807.4 1054.9 808.9 1058.9 810.7C1062.9 812.5 1068.3 815.1 1073.5 818.1C1078.7 821.1 1085.7 827.5 1090.0 829.0C1094.3 830.5 1095.4 826.0 1099.1 827.2C1102.8 828.4 1108.2 836.1 1111.9 836.4C1115.6 836.7 1117.8 831.8 1121.1 829.0C1124.4 826.2 1128.3 820.5 1132.0 819.9C1135.7 819.3 1139.0 823.9 1143.0 825.4C1147.0 826.9 1151.5 828.7 1155.8 829.0C1160.1 829.3 1164.6 828.7 1168.6 827.2C1172.6 825.7 1175.3 821.4 1179.6 819.9C1183.9 818.4 1189.9 819.0 1194.2 818.1C1198.5 817.2 1204.0 815.9 1205.2 814.4C1206.4 812.9 1200.0 810.7 1201.5 808.9C1203.0 807.1 1209.2 805.5 1214.4 803.4C1219.6 801.3 1228.3 796.1 1232.6 796.1C1236.9 796.1 1238.1 801.0 1240.0 803.4C1241.9 805.8 1243.3 809.5 1244.0 810.7" fill="none" stroke="#c39ac9" stroke-width="1.700" opacity=".8" stroke-linejoin="round"/>
<path d="M998.5 810.7C1000.6 810.4 1007.3 810.1 1011.3 808.9C1015.3 807.7 1018.9 803.4 1022.3 803.4C1025.7 803.4 1029.9 808.0 1031.4 808.9" fill="none" stroke="#c39ac9" stroke-width="1.700" opacity=".8" stroke-linejoin="round"/>
<path d="M1004.0 755.9C1003.3 759.0 1001.3 767.5 1000.0 774.2C998.7 780.9 997.2 790.0 996.3 796.1C995.4 802.2 995.7 806.7 994.5 810.7C993.3 814.7 992.7 817.5 989.0 819.9C985.3 822.3 976.5 823.9 972.5 825.4C968.5 826.9 966.7 826.6 965.2 829.0C963.7 831.4 965.2 836.3 963.4 840.0C961.6 843.7 957.6 847.3 954.2 851.0C950.9 854.7 946.3 857.7 943.3 862.0C940.2 866.3 938.9 872.6 935.9 876.6C932.9 880.6 926.2 882.1 925.0 885.7C923.8 889.4 928.0 896.4 928.6 898.5" fill="none" stroke="#c39ac9" stroke-width="1.700" opacity=".8" stroke-linejoin="round"/>
<path d="M946.9 701.0C948.4 702.2 951.5 706.5 956.1 708.3C960.7 710.1 968.9 710.2 974.4 712.0C979.9 713.8 984.7 717.2 989.0 719.3C993.3 721.4 997.5 723.3 1000.0 724.8C1002.5 726.3 1003.3 727.8 1004.0 728.4" fill="none" stroke="#c39ac9" stroke-width="1.700" opacity=".8" stroke-linejoin="round"/>
<path d="M915.8 575.9C917.9 579.9 925.5 593.0 928.6 599.7C931.7 606.4 933.5 610.9 934.1 616.1C934.7 621.3 933.5 626.4 932.3 630.7C931.1 635.0 928.9 639.0 926.8 641.7C924.7 644.5 922.2 644.8 919.5 647.2C916.8 649.7 910.9 653.0 910.3 656.4C909.7 659.8 912.8 663.6 915.8 667.3C918.8 670.9 924.6 674.0 928.6 678.3C932.6 682.6 936.2 689.1 939.6 692.9C943.0 696.7 946.0 699.2 948.7 701.0C951.5 702.8 954.9 703.4 956.1 703.9" fill="none" stroke="#c39ac9" stroke-width="1.700" opacity=".8" stroke-linejoin="round"/>
<path d="M764.0 573.1C765.8 573.6 770.7 572.4 775.0 575.9C779.3 579.4 784.7 587.5 789.6 594.2C794.5 600.9 800.2 611.4 804.2 616.1C808.2 620.8 811.3 620.4 813.4 622.5C815.5 624.6 813.4 627.5 817.0 628.9C820.6 630.3 831.6 628.9 835.3 630.7C839.0 632.5 838.7 636.2 839.0 639.9C839.3 643.6 835.1 650.3 837.2 652.7C839.3 655.1 846.9 656.0 851.8 654.5C856.7 653.0 863.3 643.9 866.4 643.6C869.5 643.3 869.6 649.1 870.1 652.7C870.6 656.4 867.4 662.1 869.2 665.5C871.0 668.9 876.7 670.4 881.1 672.8C885.5 675.2 892.7 677.8 895.7 680.1C898.8 682.4 896.0 685.6 899.4 686.5C902.8 687.4 910.9 687.0 915.8 685.6C920.7 684.2 926.5 679.5 928.6 678.3" fill="none" stroke="#c39ac9" stroke-width="1.700" opacity=".8" stroke-linejoin="round"/>
<path d="M807.9 548.4C810.6 549.0 818.3 551.8 824.4 552.1C830.5 552.4 839.3 550.9 844.5 550.3C849.7 549.7 850.6 549.0 855.5 548.4C860.4 547.8 869.4 545.7 873.7 546.6C878.0 547.5 877.4 552.5 881.1 553.9C884.8 555.3 892.1 553.9 895.7 554.8C899.4 555.7 900.6 557.1 903.0 559.4C905.4 561.7 908.2 565.9 910.3 568.6C912.4 571.4 914.9 574.7 915.8 575.9" fill="none" stroke="#c39ac9" stroke-width="1.700" opacity=".8" stroke-linejoin="round"/>
<path d="M974.4 405.0C974.7 407.1 976.2 413.2 976.2 417.8C976.2 422.4 975.3 427.6 974.4 432.5C973.5 437.4 973.5 442.5 970.7 447.1C968.0 451.7 960.6 456.2 957.9 459.9C955.1 463.5 953.3 466.9 954.2 469.0C955.1 471.1 961.3 470.2 963.4 472.7C965.5 475.1 967.6 480.6 967.0 483.7C966.4 486.8 961.8 488.3 959.7 491.0C957.6 493.7 953.9 497.7 954.2 500.1C954.5 502.5 961.2 502.9 961.5 505.6C961.8 508.4 958.2 512.9 956.1 516.6C954.0 520.3 951.5 524.6 948.7 527.6C946.0 530.6 943.0 532.5 939.6 534.9C936.2 537.3 931.7 537.9 928.6 542.2C925.5 546.5 923.4 554.7 921.3 560.5C919.2 566.3 916.7 574.2 915.8 577.0" fill="none" stroke="#c39ac9" stroke-width="1.700" opacity=".8" stroke-linejoin="round"/>
<path d="M1042.4 285.4C1043.9 285.7 1047.9 286.6 1051.6 287.2C1055.3 287.8 1060.1 288.2 1064.4 289.0C1068.7 289.8 1075.1 291.3 1077.2 291.8" fill="none" stroke="#c39ac9" stroke-width="1.700" opacity=".8" stroke-linejoin="round"/>
<path d="M1090.0 829.0C1089.1 830.8 1086.6 836.0 1084.5 840.0C1082.4 844.0 1077.5 849.1 1077.2 852.8C1076.9 856.5 1079.7 859.9 1082.7 862.0C1085.8 864.1 1091.5 863.8 1095.5 865.6C1099.5 867.4 1102.1 872.9 1106.4 872.9C1110.7 872.9 1118.0 865.0 1121.1 865.6C1124.1 866.2 1121.7 875.1 1124.7 876.6C1127.8 878.1 1135.1 876.6 1139.4 874.8C1143.7 873.0 1145.4 867.7 1150.3 865.6C1155.2 863.5 1162.5 863.5 1168.6 862.0C1174.7 860.5 1181.4 858.0 1186.9 856.5C1192.4 855.0 1196.9 851.9 1201.5 852.8C1206.1 853.7 1209.2 859.2 1214.4 862.0C1219.6 864.8 1227.7 867.8 1232.6 869.3C1237.5 870.8 1242.1 870.8 1244.0 871.1" fill="none" stroke="#c39ac9" stroke-width="1.700" opacity=".8" stroke-linejoin="round"/>
<path d="M1244.0 888.3C1248.6 888.6 1262.2 890.4 1271.4 890.1C1280.6 889.8 1289.8 887.7 1298.9 886.5C1308.1 885.3 1317.2 883.7 1326.3 882.8C1335.4 881.9 1345.5 882.8 1353.7 881.0C1361.9 879.2 1368.7 870.9 1375.7 871.8C1382.7 872.7 1390.3 882.2 1395.8 886.5C1401.3 890.8 1403.4 892.8 1408.6 897.4C1413.8 902.0 1419.3 907.8 1426.9 913.9C1434.5 920.0 1444.9 929.7 1454.4 934.0C1463.9 938.3 1479.1 938.6 1484.0 939.5" fill="none" stroke="#c39ac9" stroke-width="1.700" opacity=".8" stroke-linejoin="round"/>
<text x="1075.0" y="181.4" text-anchor="middle" font-size="12" font-style="normal" fill="#85548a" stroke="#fff" stroke-opacity=".75" stroke-width="1.600" paint-order="stroke" stroke-linejoin="round" textLength="53.4" lengthAdjust="spacing">Danmark</text>
<text x="1112.8" y="197.4" text-anchor="middle" font-size="10.8" font-style="normal" fill="#3d3d3d" stroke="#fff" stroke-opacity=".75" stroke-width="1.600" paint-order="stroke" stroke-linejoin="round" textLength="32.9" lengthAdjust="spacing">Aarhus</text>
<text x="1120.5" y="243.2" text-anchor="middle" font-size="10.8" font-style="normal" fill="#3d3d3d" stroke="#fff" stroke-opacity=".75" stroke-width="1.600" paint-order="stroke" stroke-linejoin="round" textLength="35.7" lengthAdjust="spacing">Odense</text>
<text x="1220.2" y="238.6" text-anchor="middle" font-size="12.3" font-style="normal" fill="#333" stroke="#fff" stroke-opacity=".75" stroke-width="1.600" paint-order="stroke" stroke-linejoin="round" textLength="63.1" lengthAdjust="spacing">København</text>
<text x="1185.1" y="248.9" text-anchor="middle" font-size="10.5" font-style="italic" fill="#333" stroke="#fff" stroke-opacity=".75" stroke-width="1.600" paint-order="stroke" stroke-linejoin="round" textLength="36.6" lengthAdjust="spacing">Sjælland</text>
<text x="1060.7" y="242.4" text-anchor="middle" font-size="10.2" font-style="italic" fill="#8f6a99" stroke="#fff" stroke-opacity=".75" stroke-width="1.600" paint-order="stroke" stroke-linejoin="round" textLength="29.3" lengthAdjust="spacing">Region</text>
<text x="1060.7" y="253.9" text-anchor="middle" font-size="10.2" font-style="italic" fill="#8f6a99" stroke="#fff" stroke-opacity=".75" stroke-width="1.600" paint-order="stroke" stroke-linejoin="round" textLength="54.9" lengthAdjust="spacing">Syddanmark</text>
<text x="1226.2" y="190.5" text-anchor="middle" font-size="10.8" font-style="normal" fill="#3d3d3d" stroke="#fff" stroke-opacity=".75" stroke-width="1.600" paint-order="stroke" stroke-linejoin="round" textLength="56.7" lengthAdjust="spacing">Helsingborg</text>
<text x="1083.6" y="330.2" text-anchor="middle" font-size="10.2" font-style="italic" fill="#8f6a99" stroke="#fff" stroke-opacity=".75" stroke-width="1.600" paint-order="stroke" stroke-linejoin="round" textLength="41.2" lengthAdjust="spacing">Schleswig-</text>
<text x="1086.3" y="341.2" text-anchor="middle" font-size="10.2" font-style="italic" fill="#8f6a99" stroke="#fff" stroke-opacity=".75" stroke-width="1.600" paint-order="stroke" stroke-linejoin="round" textLength="34.8" lengthAdjust="spacing">Holstein</text>
<text x="1349.2" y="183.0" text-anchor="middle" font-size="10.2" font-style="italic" fill="#8f6a99" stroke="#fff" stroke-opacity=".75" stroke-width="1.600" paint-order="stroke" stroke-linejoin="round" textLength="36.6" lengthAdjust="spacing">Blekinge</text>
<text x="1349.2" y="193.9" text-anchor="middle" font-size="10.2" font-style="italic" fill="#8f6a99" stroke="#fff" stroke-opacity=".75" stroke-width="1.600" paint-order="stroke" stroke-linejoin="round" textLength="12.8" lengthAdjust="spacing">län</text>
<text x="1269.6" y="211.3" text-anchor="middle" font-size="10.2" font-style="italic" fill="#8f6a99" stroke="#fff" stroke-opacity=".75" stroke-width="1.600" paint-order="stroke" stroke-linejoin="round" textLength="43.0" lengthAdjust="spacing">Skåne län</text>
<text x="945.1" y="412.2" text-anchor="middle" font-size="12.3" font-style="normal" fill="#333" stroke="#fff" stroke-opacity=".75" stroke-width="1.600" paint-order="stroke" stroke-linejoin="round" textLength="54.9" lengthAdjust="spacing">Groningen</text>
<text x="946.4" y="445.1" text-anchor="middle" font-size="10.8" font-style="normal" fill="#3d3d3d" stroke="#fff" stroke-opacity=".75" stroke-width="1.600" paint-order="stroke" stroke-linejoin="round" textLength="27.4" lengthAdjust="spacing">Assen</text>
<text x="895.7" y="475.2" text-anchor="middle" font-size="12" font-style="normal" fill="#85548a" stroke="#fff" stroke-opacity=".75" stroke-width="1.600" paint-order="stroke" stroke-linejoin="round" textLength="62.7" lengthAdjust="spacing">Nederland</text>
<text x="843.9" y="497.2" text-anchor="middle" font-size="12.3" font-style="normal" fill="#333" stroke="#fff" stroke-opacity=".75" stroke-width="1.600" paint-order="stroke" stroke-linejoin="round" textLength="54.9" lengthAdjust="spacing">Den Haag</text>
<text x="935.4" y="496.0" text-anchor="middle" font-size="10.8" font-style="normal" fill="#3d3d3d" stroke="#fff" stroke-opacity=".75" stroke-width="1.600" paint-order="stroke" stroke-linejoin="round" textLength="43.9" lengthAdjust="spacing">Enschede</text>
<text x="916.7" y="520.5" text-anchor="middle" font-size="10.8" font-style="normal" fill="#3d3d3d" stroke="#fff" stroke-opacity=".75" stroke-width="1.600" paint-order="stroke" stroke-linejoin="round" textLength="36.6" lengthAdjust="spacing">Arnhem</text>
<text x="969.8" y="515.0" text-anchor="middle" font-size="10.8" font-style="normal" fill="#3d3d3d" stroke="#fff" stroke-opacity=".75" stroke-width="1.600" paint-order="stroke" stroke-linejoin="round" textLength="36.6" lengthAdjust="spacing">Münster</text>
<text x="1132.0" y="363.2" text-anchor="middle" font-size="10.8" font-style="normal" fill="#3d3d3d" stroke="#fff" stroke-opacity=".75" stroke-width="1.600" paint-order="stroke" stroke-linejoin="round" textLength="29.3" lengthAdjust="spacing">Lübeck</text>
<text x="1167.3" y="382.0" text-anchor="middle" font-size="10.8" font-style="normal" fill="#3d3d3d" stroke="#fff" stroke-opacity=".75" stroke-width="1.600" paint-order="stroke" stroke-linejoin="round" textLength="42.1" lengthAdjust="spacing">Schwerin</text>
<text x="1102.8" y="387.7" text-anchor="middle" font-size="14" font-style="normal" fill="#2e2e2e" stroke="#fff" stroke-opacity=".75" stroke-width="1.600" paint-order="stroke" stroke-linejoin="round" textLength="53.0" lengthAdjust="spacing">Hamburg</text>
<text x="1038.8" y="403.1" text-anchor="middle" font-size="10.8" font-style="normal" fill="#3d3d3d" stroke="#fff" stroke-opacity=".75" stroke-width="1.600" paint-order="stroke" stroke-linejoin="round" textLength="62.2" lengthAdjust="spacing">Bremerhaven</text>
<text x="1048.4" y="423.2" text-anchor="middle" font-size="12.3" font-style="normal" fill="#333" stroke="#fff" stroke-opacity=".75" stroke-width="1.600" paint-order="stroke" stroke-linejoin="round" textLength="42.4" lengthAdjust="spacing">Bremen</text>
<text x="1095.5" y="450.2" text-anchor="middle" font-size="10.2" font-style="italic" fill="#8f6a99" stroke="#fff" stroke-opacity=".75" stroke-width="1.600" paint-order="stroke" stroke-linejoin="round" textLength="64.0" lengthAdjust="spacing">Niedersachsen</text>
<text x="1130.2" y="490.4" text-anchor="middle" font-size="12" font-style="normal" fill="#85548a" stroke="#fff" stroke-opacity=".75" stroke-width="1.600" paint-order="stroke" stroke-linejoin="round" textLength="74.6" lengthAdjust="spacing">Deutschland</text>
<text x="1231.5" y="363.9" text-anchor="middle" font-size="10.2" font-style="italic" fill="#8f6a99" stroke="#fff" stroke-opacity=".75" stroke-width="1.600" paint-order="stroke" stroke-linejoin="round" textLength="57.8" lengthAdjust="spacing">Mecklenburg-</text>
<text x="1231.9" y="375.8" text-anchor="middle" font-size="10.2" font-style="italic" fill="#8f6a99" stroke="#fff" stroke-opacity=".75" stroke-width="1.600" paint-order="stroke" stroke-linejoin="round" textLength="57.8" lengthAdjust="spacing">Vorpommern</text>
<text x="1242.0" y="490.3" text-anchor="middle" font-size="10.8" font-style="normal" fill="#3d3d3d" stroke="#fff" stroke-opacity=".75" stroke-width="1.600" paint-order="stroke" stroke-linejoin="round" textLength="40.6" lengthAdjust="spacing">Potsdam</text>
<text x="1036.6" y="518.7" text-anchor="middle" font-size="10.8" font-style="normal" fill="#3d3d3d" stroke="#fff" stroke-opacity=".75" stroke-width="1.600" paint-order="stroke" stroke-linejoin="round" textLength="39.3" lengthAdjust="spacing">Bielefeld</text>
<text x="1014.8" y="484.8" text-anchor="middle" font-size="10.8" font-style="normal" fill="#3d3d3d" stroke="#fff" stroke-opacity=".75" stroke-width="1.600" paint-order="stroke" stroke-linejoin="round" textLength="49.8" lengthAdjust="spacing">Osnabrück</text>
<text x="1177.8" y="517.2" text-anchor="middle" font-size="10.2" font-style="italic" fill="#8f6a99" stroke="#fff" stroke-opacity=".75" stroke-width="1.600" paint-order="stroke" stroke-linejoin="round" textLength="36.6" lengthAdjust="spacing">Sachsen-</text>
<text x="1384.3" y="353.7" text-anchor="middle" font-size="10.8" font-style="normal" fill="#3d3d3d" stroke="#fff" stroke-opacity=".75" stroke-width="1.600" paint-order="stroke" stroke-linejoin="round" textLength="37.5" lengthAdjust="spacing">Koszalin</text>
<text x="1352.8" y="385.8" text-anchor="middle" font-size="10.2" font-style="italic" fill="#8f6a99" stroke="#fff" stroke-opacity=".75" stroke-width="1.600" paint-order="stroke" stroke-linejoin="round" textLength="58.5" lengthAdjust="spacing">województwo</text>
<text x="1352.8" y="397.7" text-anchor="middle" font-size="10.2" font-style="italic" fill="#8f6a99" stroke="#fff" stroke-opacity=".75" stroke-width="1.600" paint-order="stroke" stroke-linejoin="round" textLength="91.5" lengthAdjust="spacing">zachodniopomorskie</text>
<text x="1456.2" y="347.4" text-anchor="middle" font-size="10.2" font-style="italic" fill="#8f6a99" stroke="#fff" stroke-opacity=".75" stroke-width="1.600" paint-order="stroke" stroke-linejoin="round" textLength="45.7" lengthAdjust="spacing">pomorskie</text>
<text x="1451.6" y="335.9" text-anchor="middle" font-size="10.2" font-style="italic" fill="#8f6a99" stroke="#fff" stroke-opacity=".75" stroke-width="1.600" paint-order="stroke" stroke-linejoin="round" textLength="58.5" lengthAdjust="spacing">województwo</text>
<text x="1341.9" y="465.6" text-anchor="middle" font-size="10.8" font-style="normal" fill="#3d3d3d" stroke="#fff" stroke-opacity=".75" stroke-width="1.600" paint-order="stroke" stroke-linejoin="round" textLength="35.7" lengthAdjust="spacing">Gorzów</text>
<text x="1341.9" y="477.1" text-anchor="middle" font-size="10.8" font-style="normal" fill="#3d3d3d" stroke="#fff" stroke-opacity=".75" stroke-width="1.600" paint-order="stroke" stroke-linejoin="round" textLength="57.6" lengthAdjust="spacing">Wielkopolski</text>
<text x="1353.7" y="497.1" text-anchor="middle" font-size="10.8" font-style="normal" fill="#3d3d3d" stroke="#fff" stroke-opacity=".75" stroke-width="1.600" paint-order="stroke" stroke-linejoin="round" textLength="33.8" lengthAdjust="spacing">Zielona</text>
<text x="1353.7" y="508.6" text-anchor="middle" font-size="10.8" font-style="normal" fill="#3d3d3d" stroke="#fff" stroke-opacity=".75" stroke-width="1.600" paint-order="stroke" stroke-linejoin="round" textLength="21.9" lengthAdjust="spacing">Góra</text>
<text x="1421.4" y="490.1" text-anchor="middle" font-size="10.2" font-style="italic" fill="#8f6a99" stroke="#fff" stroke-opacity=".75" stroke-width="1.600" paint-order="stroke" stroke-linejoin="round" textLength="58.5" lengthAdjust="spacing">województwo</text>
<text x="1421.4" y="501.6" text-anchor="middle" font-size="10.2" font-style="italic" fill="#8f6a99" stroke="#fff" stroke-opacity=".75" stroke-width="1.600" paint-order="stroke" stroke-linejoin="round" textLength="58.5" lengthAdjust="spacing">wielkopolskie</text>
<text x="1257.0" y="464.9" text-anchor="middle" font-size="14" font-style="normal" fill="#2e2e2e" stroke="#fff" stroke-opacity=".75" stroke-width="1.600" paint-order="stroke" stroke-linejoin="round" textLength="32.4" lengthAdjust="spacing">Berlin</text>
<text x="1277.8" y="517.0" text-anchor="middle" font-size="10.2" font-style="italic" fill="#8f6a99" stroke="#fff" stroke-opacity=".75" stroke-width="1.600" paint-order="stroke" stroke-linejoin="round" textLength="58.5" lengthAdjust="spacing">Brandenburg</text>
<text x="1480.0" y="463.8" text-anchor="middle" font-size="10.8" font-style="normal" fill="#3d3d3d" stroke="#fff" stroke-opacity=".75" stroke-width="1.600" paint-order="stroke" stroke-linejoin="round" textLength="45.7" lengthAdjust="spacing">Włocławek</text>
<text x="1476.3" y="487.2" text-anchor="middle" font-size="10.8" font-style="normal" fill="#3d3d3d" stroke="#fff" stroke-opacity=".75" stroke-width="1.600" paint-order="stroke" stroke-linejoin="round" textLength="23.8" lengthAdjust="spacing">Konin</text>
<text x="1476.3" y="521.4" text-anchor="middle" font-size="10.8" font-style="normal" fill="#3d3d3d" stroke="#fff" stroke-opacity=".75" stroke-width="1.600" paint-order="stroke" stroke-linejoin="round" textLength="29.3" lengthAdjust="spacing">Kalisz</text>
<text x="1487.3" y="420.6" text-anchor="middle" font-size="10.2" font-style="italic" fill="#8f6a99" stroke="#fff" stroke-opacity=".75" stroke-width="1.600" paint-order="stroke" stroke-linejoin="round" textLength="58.5" lengthAdjust="spacing">województwo</text>
<text x="1487.3" y="432.5" text-anchor="middle" font-size="10.2" font-style="italic" fill="#8f6a99" stroke="#fff" stroke-opacity=".75" stroke-width="1.600" paint-order="stroke" stroke-linejoin="round" textLength="42.1" lengthAdjust="spacing">kujawsko-</text>
<text x="1487.3" y="444.4" text-anchor="middle" font-size="10.2" font-style="italic" fill="#8f6a99" stroke="#fff" stroke-opacity=".75" stroke-width="1.600" paint-order="stroke" stroke-linejoin="round" textLength="45.7" lengthAdjust="spacing">pomorskie</text>
<text x="1500.1" y="392.4" text-anchor="middle" font-size="10.8" font-style="normal" fill="#3d3d3d" stroke="#fff" stroke-opacity=".75" stroke-width="1.600" paint-order="stroke" stroke-linejoin="round" textLength="42.1" lengthAdjust="spacing">Grudziądz</text>
<text x="832.6" y="527.6" text-anchor="middle" font-size="10.8" font-style="normal" fill="#3d3d3d" stroke="#fff" stroke-opacity=".75" stroke-width="1.600" paint-order="stroke" stroke-linejoin="round" textLength="46.6" lengthAdjust="spacing">Dordrecht</text>
<text x="890.2" y="543.2" text-anchor="middle" font-size="10.8" font-style="normal" fill="#3d3d3d" stroke="#fff" stroke-opacity=".75" stroke-width="1.600" paint-order="stroke" stroke-linejoin="round" textLength="80.5" lengthAdjust="spacing">'s-Hertogenbosch</text>
<text x="848.1" y="560.5" text-anchor="middle" font-size="12.3" font-style="normal" fill="#333" stroke="#fff" stroke-opacity=".75" stroke-width="1.600" paint-order="stroke" stroke-linejoin="round" textLength="61.3" lengthAdjust="spacing">Antwerpen</text>
<text x="803.3" y="581.6" text-anchor="middle" font-size="10.8" font-style="normal" fill="#3d3d3d" stroke="#fff" stroke-opacity=".75" stroke-width="1.600" paint-order="stroke" stroke-linejoin="round" textLength="20.1" lengthAdjust="spacing">Gent</text>
<text x="787.8" y="602.5" text-anchor="middle" font-size="10.5" font-style="normal" fill="#777" stroke="#fff" stroke-opacity=".75" stroke-width="1.600" paint-order="stroke" stroke-linejoin="round" textLength="21.0" lengthAdjust="spacing">Lille</text>
<text x="860.9" y="587.9" text-anchor="middle" font-size="13" font-style="normal" fill="#85548a" stroke="#fff" stroke-opacity=".75" stroke-width="1.600" paint-order="stroke" stroke-linejoin="round" textLength="43.9" lengthAdjust="spacing">België /</text>
<text x="860.9" y="602.5" text-anchor="middle" font-size="13" font-style="normal" fill="#85548a" stroke="#fff" stroke-opacity=".75" stroke-width="1.600" paint-order="stroke" stroke-linejoin="round" textLength="59.1" lengthAdjust="spacing">Belgique /</text>
<text x="860.9" y="617.1" text-anchor="middle" font-size="13" font-style="normal" fill="#85548a" stroke="#fff" stroke-opacity=".75" stroke-width="1.600" paint-order="stroke" stroke-linejoin="round" textLength="43.9" lengthAdjust="spacing">Belgien</text>
<text x="894.2" y="633.0" text-anchor="middle" font-size="10.2" font-style="italic" fill="#8f6a99" stroke="#fff" stroke-opacity=".75" stroke-width="1.600" paint-order="stroke" stroke-linejoin="round" textLength="37.5" lengthAdjust="spacing">Wallonie</text>
<text x="925.0" y="673.8" text-anchor="middle" font-size="13" font-style="normal" fill="#85548a" stroke="#fff" stroke-opacity=".75" stroke-width="1.600" paint-order="stroke" stroke-linejoin="round" textLength="65.8" lengthAdjust="spacing">Lëtzebuerg</text>
<text x="956.6" y="580.0" text-anchor="middle" font-size="14" font-style="normal" fill="#2e2e2e" stroke="#fff" stroke-opacity=".75" stroke-width="1.600" paint-order="stroke" stroke-linejoin="round" textLength="60.7" lengthAdjust="spacing">Düsseldorf</text>
<text x="925.0" y="594.0" text-anchor="middle" font-size="10.8" font-style="normal" fill="#3d3d3d" stroke="#fff" stroke-opacity=".75" stroke-width="1.600" paint-order="stroke" stroke-linejoin="round" textLength="33.8" lengthAdjust="spacing">Aachen</text>
<text x="970.7" y="596.8" text-anchor="middle" font-size="10.8" font-style="normal" fill="#3d3d3d" stroke="#fff" stroke-opacity=".75" stroke-width="1.600" paint-order="stroke" stroke-linejoin="round" textLength="23.8" lengthAdjust="spacing">Bonn</text>
<text x="993.7" y="624.0" text-anchor="middle" font-size="10.8" font-style="normal" fill="#3d3d3d" stroke="#fff" stroke-opacity=".75" stroke-width="1.600" paint-order="stroke" stroke-linejoin="round" textLength="36.9" lengthAdjust="spacing">Koblenz</text>
<text x="991.0" y="543.5" text-anchor="middle" font-size="10.2" font-style="italic" fill="#8f6a99" stroke="#fff" stroke-opacity=".75" stroke-width="1.600" paint-order="stroke" stroke-linejoin="round" textLength="45.9" lengthAdjust="spacing">Nordrhein-</text>
<text x="990.4" y="555.8" text-anchor="middle" font-size="10.2" font-style="italic" fill="#8f6a99" stroke="#fff" stroke-opacity=".75" stroke-width="1.600" paint-order="stroke" stroke-linejoin="round" textLength="37.9" lengthAdjust="spacing">Westfalen</text>
<text x="781.4" y="660.9" text-anchor="middle" font-size="10.2" font-style="italic" fill="#aa8cb3" stroke="#fff" stroke-opacity=".75" stroke-width="1.600" paint-order="stroke" stroke-linejoin="round" textLength="33.8" lengthAdjust="spacing">Hauts-de-</text>
<text x="778.6" y="672.5" text-anchor="middle" font-size="10.2" font-style="italic" fill="#aa8cb3" stroke="#fff" stroke-opacity=".75" stroke-width="1.600" paint-order="stroke" stroke-linejoin="round" textLength="27.4" lengthAdjust="spacing">France</text>
<text x="758.5" y="575.1" text-anchor="middle" font-size="10.5" font-style="normal" fill="#777" stroke="#fff" stroke-opacity=".75" stroke-width="1.600" paint-order="stroke" stroke-linejoin="round" textLength="42.1" lengthAdjust="spacing">Dunkerque</text>
<text x="1177.8" y="528.7" text-anchor="middle" font-size="10.2" font-style="italic" fill="#8f6a99" stroke="#fff" stroke-opacity=".75" stroke-width="1.600" paint-order="stroke" stroke-linejoin="round" textLength="28.4" lengthAdjust="spacing">Anhalt</text>
<text x="1079.9" y="555.1" text-anchor="middle" font-size="10.8" font-style="normal" fill="#3d3d3d" stroke="#fff" stroke-opacity=".75" stroke-width="1.600" paint-order="stroke" stroke-linejoin="round" textLength="27.4" lengthAdjust="spacing">Kassel</text>
<text x="1211.6" y="553.1" text-anchor="middle" font-size="14" font-style="normal" fill="#2e2e2e" stroke="#fff" stroke-opacity=".75" stroke-width="1.600" paint-order="stroke" stroke-linejoin="round" textLength="36.6" lengthAdjust="spacing">Leipzig</text>
<text x="1186.9" y="591.7" text-anchor="middle" font-size="10.8" font-style="normal" fill="#3d3d3d" stroke="#fff" stroke-opacity=".75" stroke-width="1.600" paint-order="stroke" stroke-linejoin="round" textLength="18.3" lengthAdjust="spacing">Jena</text>
<text x="1142.5" y="595.6" text-anchor="middle" font-size="10.2" font-style="italic" fill="#8f6a99" stroke="#fff" stroke-opacity=".75" stroke-width="1.600" paint-order="stroke" stroke-linejoin="round" textLength="43.9" lengthAdjust="spacing">Thüringen</text>
<text x="1013.0" y="587.1" text-anchor="middle" font-size="10.8" font-style="normal" fill="#3d3d3d" stroke="#fff" stroke-opacity=".75" stroke-width="1.600" paint-order="stroke" stroke-linejoin="round" textLength="29.8" lengthAdjust="spacing">Siegen</text>
<text x="1057.0" y="612.5" text-anchor="middle" font-size="10.2" font-style="italic" fill="#8f6a99" stroke="#fff" stroke-opacity=".75" stroke-width="1.600" paint-order="stroke" stroke-linejoin="round" textLength="30.2" lengthAdjust="spacing">Hessen</text>
<text x="1236.9" y="605.4" text-anchor="middle" font-size="10.8" font-style="normal" fill="#3d3d3d" stroke="#fff" stroke-opacity=".75" stroke-width="1.600" paint-order="stroke" stroke-linejoin="round" textLength="41.5" lengthAdjust="spacing">Chemnitz</text>
<text x="1040.6" y="659.2" text-anchor="middle" font-size="14" font-style="normal" fill="#2e2e2e" stroke="#fff" stroke-opacity=".75" stroke-width="1.600" paint-order="stroke" stroke-linejoin="round" textLength="76.8" lengthAdjust="spacing">Frankfurt am</text>
<text x="1043.3" y="674.6" text-anchor="middle" font-size="14" font-style="normal" fill="#2e2e2e" stroke="#fff" stroke-opacity=".75" stroke-width="1.600" paint-order="stroke" stroke-linejoin="round" textLength="27.4" lengthAdjust="spacing">Main</text>
<text x="1128.0" y="671.6" text-anchor="middle" font-size="10.8" font-style="normal" fill="#3d3d3d" stroke="#fff" stroke-opacity=".75" stroke-width="1.600" paint-order="stroke" stroke-linejoin="round" textLength="43.9" lengthAdjust="spacing">Würzburg</text>
<text x="1033.3" y="700.1" text-anchor="middle" font-size="10.8" font-style="normal" fill="#3d3d3d" stroke="#fff" stroke-opacity=".75" stroke-width="1.600" paint-order="stroke" stroke-linejoin="round" textLength="49.4" lengthAdjust="spacing">Mannheim</text>
<text x="1152.2" y="703.8" text-anchor="middle" font-size="12.3" font-style="normal" fill="#333" stroke="#fff" stroke-opacity=".75" stroke-width="1.600" paint-order="stroke" stroke-linejoin="round" textLength="53.0" lengthAdjust="spacing">Nürnberg</text>
<text x="1300.7" y="538.1" text-anchor="middle" font-size="10.8" font-style="normal" fill="#3d3d3d" stroke="#fff" stroke-opacity=".75" stroke-width="1.600" paint-order="stroke" stroke-linejoin="round" textLength="35.7" lengthAdjust="spacing">Cottbus</text>
<text x="1300.7" y="550.1" text-anchor="middle" font-size="10.8" font-style="normal" fill="#3d3d3d" stroke="#fff" stroke-opacity=".75" stroke-width="1.600" paint-order="stroke" stroke-linejoin="round" textLength="51.2" lengthAdjust="spacing">- Chóśebuz</text>
<text x="1394.9" y="569.1" text-anchor="middle" font-size="10.2" font-style="italic" fill="#8f6a99" stroke="#fff" stroke-opacity=".75" stroke-width="1.600" paint-order="stroke" stroke-linejoin="round" textLength="58.5" lengthAdjust="spacing">województwo</text>
<text x="1394.9" y="580.5" text-anchor="middle" font-size="10.2" font-style="italic" fill="#8f6a99" stroke="#fff" stroke-opacity=".75" stroke-width="1.600" paint-order="stroke" stroke-linejoin="round" textLength="54.9" lengthAdjust="spacing">dolnośląskie</text>
<text x="1333.6" y="594.4" text-anchor="middle" font-size="10.8" font-style="normal" fill="#3d3d3d" stroke="#fff" stroke-opacity=".75" stroke-width="1.600" paint-order="stroke" stroke-linejoin="round" textLength="32.9" lengthAdjust="spacing">Liberec</text>
<text x="1388.9" y="610.1" text-anchor="middle" font-size="10.8" font-style="normal" fill="#3d3d3d" stroke="#fff" stroke-opacity=".75" stroke-width="1.600" paint-order="stroke" stroke-linejoin="round" textLength="47.6" lengthAdjust="spacing">Wałbrzych</text>
<text x="1463.5" y="601.7" text-anchor="middle" font-size="10.8" font-style="normal" fill="#3d3d3d" stroke="#fff" stroke-opacity=".75" stroke-width="1.600" paint-order="stroke" stroke-linejoin="round" textLength="27.4" lengthAdjust="spacing">Opole</text>
<text x="1389.4" y="636.5" text-anchor="middle" font-size="10.8" font-style="normal" fill="#3d3d3d" stroke="#fff" stroke-opacity=".75" stroke-width="1.600" paint-order="stroke" stroke-linejoin="round" textLength="32.9" lengthAdjust="spacing">Hradec</text>
<text x="1389.8" y="647.8" text-anchor="middle" font-size="10.8" font-style="normal" fill="#3d3d3d" stroke="#fff" stroke-opacity=".75" stroke-width="1.600" paint-order="stroke" stroke-linejoin="round" textLength="34.8" lengthAdjust="spacing">Králové</text>
<text x="1329.1" y="664.7" text-anchor="middle" font-size="12" font-style="normal" fill="#85548a" stroke="#fff" stroke-opacity=".75" stroke-width="1.600" paint-order="stroke" stroke-linejoin="round" textLength="34.8" lengthAdjust="spacing">Česko</text>
<text x="1256.8" y="681.8" text-anchor="middle" font-size="10.8" font-style="normal" fill="#3d3d3d" stroke="#fff" stroke-opacity=".75" stroke-width="1.600" paint-order="stroke" stroke-linejoin="round" textLength="24.7" lengthAdjust="spacing">Plzeň</text>
<text x="1476.3" y="661.2" text-anchor="middle" font-size="10.8" font-style="normal" fill="#3d3d3d" stroke="#fff" stroke-opacity=".75" stroke-width="1.600" paint-order="stroke" stroke-linejoin="round" textLength="34.8" lengthAdjust="spacing">Ostrava</text>
<text x="1437.9" y="683.8" text-anchor="middle" font-size="10.2" font-style="italic" fill="#8f6a99" stroke="#fff" stroke-opacity=".75" stroke-width="1.600" paint-order="stroke" stroke-linejoin="round" textLength="32.0" lengthAdjust="spacing">Střední</text>
<text x="1437.9" y="695.7" text-anchor="middle" font-size="10.2" font-style="italic" fill="#8f6a99" stroke="#fff" stroke-opacity=".75" stroke-width="1.600" paint-order="stroke" stroke-linejoin="round" textLength="32.9" lengthAdjust="spacing">Morava</text>
<text x="1262.3" y="628.6" text-anchor="middle" font-size="10.2" font-style="italic" fill="#8f6a99" stroke="#fff" stroke-opacity=".75" stroke-width="1.600" paint-order="stroke" stroke-linejoin="round" textLength="53.0" lengthAdjust="spacing">Severozápad</text>
<text x="1255.0" y="582.8" text-anchor="middle" font-size="10.2" font-style="italic" fill="#8f6a99" stroke="#fff" stroke-opacity=".75" stroke-width="1.600" paint-order="stroke" stroke-linejoin="round" textLength="36.6" lengthAdjust="spacing">Sachsen</text>
<text x="1480.0" y="628.0" text-anchor="middle" font-size="10.2" font-style="italic" fill="#8f6a99" stroke="#fff" stroke-opacity=".75" stroke-width="1.600" paint-order="stroke" stroke-linejoin="round" textLength="16.5" lengthAdjust="spacing">woj.</text>
<text x="831.3" y="716.2" text-anchor="middle" font-size="10.8" font-style="normal" fill="#3d3d3d" stroke="#fff" stroke-opacity=".75" stroke-width="1.600" paint-order="stroke" stroke-linejoin="round" textLength="28.4" lengthAdjust="spacing">Reims</text>
<text x="966.1" y="718.6" text-anchor="middle" font-size="10.8" font-style="normal" fill="#3d3d3d" stroke="#fff" stroke-opacity=".75" stroke-width="1.600" paint-order="stroke" stroke-linejoin="round" textLength="58.5" lengthAdjust="spacing">Saarbrücken</text>
<text x="903.4" y="739.4" text-anchor="middle" font-size="10.2" font-style="italic" fill="#8f6a99" stroke="#fff" stroke-opacity=".75" stroke-width="1.600" paint-order="stroke" stroke-linejoin="round" textLength="27.4" lengthAdjust="spacing">Grand</text>
<text x="903.4" y="751.3" text-anchor="middle" font-size="10.2" font-style="italic" fill="#8f6a99" stroke="#fff" stroke-opacity=".75" stroke-width="1.600" paint-order="stroke" stroke-linejoin="round" textLength="13.7" lengthAdjust="spacing">Est</text>
<text x="964.3" y="756.9" text-anchor="middle" font-size="14" font-style="normal" fill="#2e2e2e" stroke="#fff" stroke-opacity=".75" stroke-width="1.600" paint-order="stroke" stroke-linejoin="round" textLength="62.2" lengthAdjust="spacing">Strasbourg</text>
<text x="854.9" y="843.3" text-anchor="middle" font-size="10.2" font-style="italic" fill="#8f6a99" stroke="#fff" stroke-opacity=".75" stroke-width="1.600" paint-order="stroke" stroke-linejoin="round" textLength="51.2" lengthAdjust="spacing">Bourgogne-</text>
<text x="854.9" y="855.0" text-anchor="middle" font-size="10.2" font-style="italic" fill="#8f6a99" stroke="#fff" stroke-opacity=".75" stroke-width="1.600" paint-order="stroke" stroke-linejoin="round" textLength="38.4" lengthAdjust="spacing">Franche-</text>
<text x="854.9" y="866.6" text-anchor="middle" font-size="10.2" font-style="italic" fill="#8f6a99" stroke="#fff" stroke-opacity=".75" stroke-width="1.600" paint-order="stroke" stroke-linejoin="round" textLength="28.4" lengthAdjust="spacing">Comté</text>
<text x="922.2" y="854.9" text-anchor="middle" font-size="10.8" font-style="normal" fill="#3d3d3d" stroke="#fff" stroke-opacity=".75" stroke-width="1.600" paint-order="stroke" stroke-linejoin="round" textLength="44.8" lengthAdjust="spacing">Besançon</text>
<text x="992.6" y="817.9" text-anchor="middle" font-size="10.8" font-style="normal" fill="#3d3d3d" stroke="#fff" stroke-opacity=".75" stroke-width="1.600" paint-order="stroke" stroke-linejoin="round" textLength="22.9" lengthAdjust="spacing">Basel</text>
<text x="1003.4" y="854.8" text-anchor="middle" font-size="13" font-style="normal" fill="#85548a" stroke="#fff" stroke-opacity=".75" stroke-width="1.600" paint-order="stroke" stroke-linejoin="round" textLength="50.7" lengthAdjust="spacing">Schweiz/</text>
<text x="1004.2" y="869.4" text-anchor="middle" font-size="13" font-style="normal" fill="#85548a" stroke="#fff" stroke-opacity=".75" stroke-width="1.600" paint-order="stroke" stroke-linejoin="round" textLength="96.8" lengthAdjust="spacing">Suisse/Svizzera/</text>
<text x="1004.2" y="883.1" text-anchor="middle" font-size="13" font-style="normal" fill="#85548a" stroke="#fff" stroke-opacity=".75" stroke-width="1.600" paint-order="stroke" stroke-linejoin="round" textLength="34.6" lengthAdjust="spacing">Svizra</text>
<text x="757.0" y="727.6" text-anchor="middle" font-size="10.5" font-style="normal" fill="#777" stroke="#fff" stroke-opacity=".75" stroke-width="1.600" paint-order="stroke" stroke-linejoin="round" textLength="18.3" lengthAdjust="spacing">Paris</text>
<text x="1030.5" y="733.8" text-anchor="middle" font-size="10.8" font-style="normal" fill="#3d3d3d" stroke="#fff" stroke-opacity=".75" stroke-width="1.600" paint-order="stroke" stroke-linejoin="round" textLength="44.8" lengthAdjust="spacing">Karlsruhe</text>
<text x="1182.3" y="739.1" text-anchor="middle" font-size="10.2" font-style="italic" fill="#8f6a99" stroke="#fff" stroke-opacity=".75" stroke-width="1.600" paint-order="stroke" stroke-linejoin="round" textLength="30.2" lengthAdjust="spacing">Bayern</text>
<text x="1056.7" y="755.9" text-anchor="middle" font-size="10.2" font-style="italic" fill="#8f6a99" stroke="#fff" stroke-opacity=".75" stroke-width="1.600" paint-order="stroke" stroke-linejoin="round" textLength="30.2" lengthAdjust="spacing">Baden-</text>
<text x="1056.7" y="767.8" text-anchor="middle" font-size="10.2" font-style="italic" fill="#8f6a99" stroke="#fff" stroke-opacity=".75" stroke-width="1.600" paint-order="stroke" stroke-linejoin="round" textLength="58.5" lengthAdjust="spacing">Württemberg</text>
<text x="1143.9" y="763.1" text-anchor="middle" font-size="10.8" font-style="normal" fill="#3d3d3d" stroke="#fff" stroke-opacity=".75" stroke-width="1.600" paint-order="stroke" stroke-linejoin="round" textLength="44.8" lengthAdjust="spacing">Augsburg</text>
<text x="1028.7" y="789.9" text-anchor="middle" font-size="10.8" font-style="normal" fill="#3d3d3d" stroke="#fff" stroke-opacity=".75" stroke-width="1.600" paint-order="stroke" stroke-linejoin="round" textLength="37.5" lengthAdjust="spacing">Freiburg</text>
<text x="1038.8" y="801.8" text-anchor="middle" font-size="10.8" font-style="normal" fill="#3d3d3d" stroke="#fff" stroke-opacity=".75" stroke-width="1.600" paint-order="stroke" stroke-linejoin="round" textLength="51.2" lengthAdjust="spacing">im Breisgau</text>
<text x="1174.1" y="797.1" text-anchor="middle" font-size="14" font-style="normal" fill="#2e2e2e" stroke="#fff" stroke-opacity=".75" stroke-width="1.600" paint-order="stroke" stroke-linejoin="round" textLength="49.4" lengthAdjust="spacing">München</text>
<text x="1241.8" y="801.5" text-anchor="middle" font-size="10.8" font-style="normal" fill="#3d3d3d" stroke="#fff" stroke-opacity=".75" stroke-width="1.600" paint-order="stroke" stroke-linejoin="round" textLength="39.3" lengthAdjust="spacing">Salzburg</text>
<text x="1036.9" y="830.2" text-anchor="middle" font-size="10.8" font-style="normal" fill="#3d3d3d" stroke="#fff" stroke-opacity=".75" stroke-width="1.600" paint-order="stroke" stroke-linejoin="round" textLength="29.3" lengthAdjust="spacing">Zürich</text>
<text x="1166.8" y="837.0" text-anchor="middle" font-size="10.8" font-style="normal" fill="#3d3d3d" stroke="#fff" stroke-opacity=".75" stroke-width="1.600" paint-order="stroke" stroke-linejoin="round" textLength="46.6" lengthAdjust="spacing">Innsbruck</text>
<text x="1081.2" y="864.9" text-anchor="middle" font-size="12.3" font-style="normal" fill="#333" stroke="#fff" stroke-opacity=".75" stroke-width="1.600" paint-order="stroke" stroke-linejoin="round" textLength="33.8" lengthAdjust="spacing">Vaduz</text>
<text x="1139.7" y="852.5" text-anchor="middle" font-size="10.2" font-style="italic" fill="#8f6a99" stroke="#fff" stroke-opacity=".75" stroke-width="1.600" paint-order="stroke" stroke-linejoin="round" textLength="19.2" lengthAdjust="spacing">Tirol</text>
<text x="1157.3" y="892.0" text-anchor="middle" font-size="10.2" font-style="italic" fill="#8f6a99" stroke="#fff" stroke-opacity=".75" stroke-width="1.600" paint-order="stroke" stroke-linejoin="round" textLength="37.5" lengthAdjust="spacing">Trentino-</text>
<text x="1298.9" y="720.8" text-anchor="middle" font-size="10.2" font-style="italic" fill="#8f6a99" stroke="#fff" stroke-opacity=".75" stroke-width="1.600" paint-order="stroke" stroke-linejoin="round" textLength="44.8" lengthAdjust="spacing">Jihozápad</text>
<text x="1385.8" y="714.2" text-anchor="middle" font-size="10.2" font-style="italic" fill="#8f6a99" stroke="#fff" stroke-opacity=".75" stroke-width="1.600" paint-order="stroke" stroke-linejoin="round" textLength="48.5" lengthAdjust="spacing">Jihovýchod</text>
<text x="1393.1" y="771.9" text-anchor="middle" font-size="14" font-style="normal" fill="#2e2e2e" stroke="#fff" stroke-opacity=".75" stroke-width="1.600" paint-order="stroke" stroke-linejoin="round" textLength="27.4" lengthAdjust="spacing">Wien</text>
<text x="1460.8" y="786.2" text-anchor="middle" font-size="14" font-style="normal" fill="#2e2e2e" stroke="#fff" stroke-opacity=".75" stroke-width="1.600" paint-order="stroke" stroke-linejoin="round" textLength="54.9" lengthAdjust="spacing">Bratislava</text>
<text x="1280.2" y="785.7" text-anchor="middle" font-size="10.2" font-style="italic" fill="#8f6a99" stroke="#fff" stroke-opacity=".75" stroke-width="1.600" paint-order="stroke" stroke-linejoin="round" textLength="64.9" lengthAdjust="spacing">Oberösterreich</text>
<text x="1309.8" y="827.0" text-anchor="middle" font-size="13.5" font-style="normal" fill="#85548a" stroke="#fff" stroke-opacity=".75" stroke-width="1.600" paint-order="stroke" stroke-linejoin="round" textLength="62.2" lengthAdjust="spacing">Österreich</text>
<text x="1450.7" y="809.1" text-anchor="middle" font-size="10.8" font-style="normal" fill="#3d3d3d" stroke="#fff" stroke-opacity=".75" stroke-width="1.600" paint-order="stroke" stroke-linejoin="round" textLength="21.9" lengthAdjust="spacing">Győr</text>
<text x="1351.0" y="850.0" text-anchor="middle" font-size="14" font-style="normal" fill="#2e2e2e" stroke="#fff" stroke-opacity=".75" stroke-width="1.600" paint-order="stroke" stroke-linejoin="round" textLength="25.6" lengthAdjust="spacing">Graz</text>
<text x="1446.1" y="850.3" text-anchor="middle" font-size="10.8" font-style="normal" fill="#3d3d3d" stroke="#fff" stroke-opacity=".75" stroke-width="1.600" paint-order="stroke" stroke-linejoin="round" textLength="70.4" lengthAdjust="spacing">Székesfehérvár</text>
<text x="1455.3" y="871.1" text-anchor="middle" font-size="10.2" font-style="italic" fill="#8f6a99" stroke="#fff" stroke-opacity=".75" stroke-width="1.600" paint-order="stroke" stroke-linejoin="round" textLength="41.2" lengthAdjust="spacing">Dunántúl</text>
<text x="1293.8" y="880.3" text-anchor="middle" font-size="10.2" font-style="italic" fill="#8f6a99" stroke="#fff" stroke-opacity=".75" stroke-width="1.600" paint-order="stroke" stroke-linejoin="round" textLength="34.8" lengthAdjust="spacing">Kärnten</text>
<text x="1360.2" y="884.5" text-anchor="middle" font-size="10.8" font-style="normal" fill="#3d3d3d" stroke="#fff" stroke-opacity=".75" stroke-width="1.600" paint-order="stroke" stroke-linejoin="round" textLength="37.5" lengthAdjust="spacing">Maribor</text>
<text x="925.9" y="907.6" text-anchor="middle" font-size="10.5" font-style="normal" fill="#777" stroke="#fff" stroke-opacity=".75" stroke-width="1.600" paint-order="stroke" stroke-linejoin="round" textLength="34.8" lengthAdjust="spacing">Genève</text>
<text x="787.8" y="935.6" text-anchor="middle" font-size="10.5" font-style="normal" fill="#777" stroke="#fff" stroke-opacity=".75" stroke-width="1.600" paint-order="stroke" stroke-linejoin="round" textLength="35.7" lengthAdjust="spacing">Ferrand</text>
<text x="867.7" y="936.7" text-anchor="middle" font-size="13.5" font-style="normal" fill="#777" stroke="#fff" stroke-opacity=".75" stroke-width="1.600" paint-order="stroke" stroke-linejoin="round" textLength="26.5" lengthAdjust="spacing">Lyon</text>
<text x="926.8" y="943.6" text-anchor="middle" font-size="10.5" font-style="normal" fill="#777" stroke="#fff" stroke-opacity=".75" stroke-width="1.600" paint-order="stroke" stroke-linejoin="round" textLength="33.8" lengthAdjust="spacing">Annecy</text>
<text x="864.6" y="960.6" text-anchor="middle" font-size="10.2" font-style="italic" fill="#aa8cb3" stroke="#fff" stroke-opacity=".75" stroke-width="1.600" paint-order="stroke" stroke-linejoin="round" textLength="42.1" lengthAdjust="spacing">Auvergne-</text>
<text x="864.6" y="972.4" text-anchor="middle" font-size="10.2" font-style="italic" fill="#aa8cb3" stroke="#fff" stroke-opacity=".75" stroke-width="1.600" paint-order="stroke" stroke-linejoin="round" textLength="29.3" lengthAdjust="spacing">Rhône-</text>
<text x="785.9" y="924.1" text-anchor="middle" font-size="10.5" font-style="normal" fill="#777" stroke="#fff" stroke-opacity=".75" stroke-width="1.600" paint-order="stroke" stroke-linejoin="round" textLength="42.1" lengthAdjust="spacing">Clermont-</text>
<text x="1049.7" y="933.8" text-anchor="middle" font-size="10.5" font-style="normal" fill="#777" stroke="#fff" stroke-opacity=".75" stroke-width="1.600" paint-order="stroke" stroke-linejoin="round" textLength="30.2" lengthAdjust="spacing">Varese</text>
<text x="1039.7" y="957.0" text-anchor="middle" font-size="10.5" font-style="normal" fill="#777" stroke="#fff" stroke-opacity=".75" stroke-width="1.600" paint-order="stroke" stroke-linejoin="round" textLength="32.9" lengthAdjust="spacing">Novara</text>
<text x="1091.8" y="951.4" text-anchor="middle" font-size="10.2" font-style="italic" fill="#aa8cb3" stroke="#fff" stroke-opacity=".75" stroke-width="1.600" paint-order="stroke" stroke-linejoin="round" textLength="48.5" lengthAdjust="spacing">Lombardia</text>
<text x="1182.3" y="959.6" text-anchor="middle" font-size="10.2" font-style="italic" fill="#aa8cb3" stroke="#fff" stroke-opacity=".75" stroke-width="1.600" paint-order="stroke" stroke-linejoin="round" textLength="29.3" lengthAdjust="spacing">Veneto</text>
<text x="1156.7" y="903.8" text-anchor="middle" font-size="10.2" font-style="italic" fill="#aa8cb3" stroke="#fff" stroke-opacity=".75" stroke-width="1.600" paint-order="stroke" stroke-linejoin="round" textLength="47.6" lengthAdjust="spacing">Alto Adige/</text>
<text x="1157.6" y="915.7" text-anchor="middle" font-size="10.2" font-style="italic" fill="#aa8cb3" stroke="#fff" stroke-opacity=".75" stroke-width="1.600" paint-order="stroke" stroke-linejoin="round" textLength="32.9" lengthAdjust="spacing">Südtirol</text>
<text x="1232.6" y="966.3" text-anchor="middle" font-size="13.5" font-style="normal" fill="#777" stroke="#fff" stroke-opacity=".75" stroke-width="1.600" paint-order="stroke" stroke-linejoin="round" textLength="40.2" lengthAdjust="spacing">Venezia</text>
<text x="1324.5" y="928.8" text-anchor="middle" font-size="12" font-style="normal" fill="#a685aa" stroke="#fff" stroke-opacity=".75" stroke-width="1.600" paint-order="stroke" stroke-linejoin="round" textLength="53.0" lengthAdjust="spacing">Slovenija</text>
<text x="1298.9" y="952.1" text-anchor="middle" font-size="12" font-style="normal" fill="#777" stroke="#fff" stroke-opacity=".75" stroke-width="1.600" paint-order="stroke" stroke-linejoin="round" textLength="36.6" lengthAdjust="spacing">Trieste</text>
<text x="1374.8" y="953.1" text-anchor="middle" font-size="13.5" font-style="normal" fill="#777" stroke="#fff" stroke-opacity=".75" stroke-width="1.600" paint-order="stroke" stroke-linejoin="round" textLength="38.4" lengthAdjust="spacing">Zagreb</text>
<text x="1475.4" y="915.8" text-anchor="middle" font-size="10.5" font-style="normal" fill="#777" stroke="#fff" stroke-opacity=".75" stroke-width="1.600" paint-order="stroke" stroke-linejoin="round" textLength="16.5" lengthAdjust="spacing">Pécs</text>
<text x="1255.0" y="933.2" text-anchor="middle" font-size="10.5" font-style="normal" fill="#777" stroke="#fff" stroke-opacity=".75" stroke-width="1.600" paint-order="stroke" stroke-linejoin="round" textLength="25.6" lengthAdjust="spacing">Udine</text>
<circle cx="1112.8" cy="185.3" r="1.7" fill="#fff" fill-opacity=".8" stroke="#666" stroke-width=".8"/>
<circle cx="1121.1" cy="245.7" r="1.7" fill="#fff" fill-opacity=".8" stroke="#666" stroke-width=".8"/>
<circle cx="1220.2" cy="223.2" r="2.3" fill="#fff" fill-opacity=".8" stroke="#666" stroke-width=".8"/>
<circle cx="1220.2" cy="223.2" r=".9" fill="#555"/>
<circle cx="1226.2" cy="193.9" r="1.7" fill="#fff" fill-opacity=".8" stroke="#666" stroke-width=".8"/>
<circle cx="946.9" cy="416.9" r="1.7" fill="#fff" fill-opacity=".8" stroke="#666" stroke-width=".8"/>
<circle cx="946.9" cy="432.8" r="1.7" fill="#fff" fill-opacity=".8" stroke="#666" stroke-width=".8"/>
<circle cx="843.9" cy="502.0" r="1.7" fill="#fff" fill-opacity=".8" stroke="#666" stroke-width=".8"/>
<circle cx="962.1" cy="492.1" r="1.7" fill="#fff" fill-opacity=".8" stroke="#666" stroke-width=".8"/>
<circle cx="916.7" cy="508.9" r="1.7" fill="#fff" fill-opacity=".8" stroke="#666" stroke-width=".8"/>
<circle cx="1384.3" cy="341.9" r="1.7" fill="#fff" fill-opacity=".8" stroke="#666" stroke-width=".8"/>
<circle cx="1341.9" cy="452.6" r="1.7" fill="#fff" fill-opacity=".8" stroke="#666" stroke-width=".8"/>
<circle cx="1353.7" cy="512.0" r="1.7" fill="#fff" fill-opacity=".8" stroke="#666" stroke-width=".8"/>
<circle cx="1479.0" cy="491.0" r="1.7" fill="#fff" fill-opacity=".8" stroke="#666" stroke-width=".8"/>
<circle cx="860.9" cy="523.7" r="1.7" fill="#fff" fill-opacity=".8" stroke="#666" stroke-width=".8"/>
<circle cx="888.9" cy="530.5" r="1.7" fill="#fff" fill-opacity=".8" stroke="#666" stroke-width=".8"/>
<circle cx="848.1" cy="564.9" r="1.7" fill="#fff" fill-opacity=".8" stroke="#666" stroke-width=".8"/>
<circle cx="818.0" cy="576.8" r="1.7" fill="#fff" fill-opacity=".8" stroke="#666" stroke-width=".8"/>
<circle cx="788.1" cy="607.9" r="1.7" fill="#fff" fill-opacity=".8" stroke="#666" stroke-width=".8"/>
<circle cx="1333.1" cy="597.8" r="1.7" fill="#fff" fill-opacity=".8" stroke="#666" stroke-width=".8"/>
<circle cx="1388.9" cy="597.8" r="1.7" fill="#fff" fill-opacity=".8" stroke="#666" stroke-width=".8"/>
<circle cx="1464.0" cy="604.8" r="1.7" fill="#fff" fill-opacity=".8" stroke="#666" stroke-width=".8"/>
<circle cx="1368.9" cy="637.7" r="1.7" fill="#fff" fill-opacity=".8" stroke="#666" stroke-width=".8"/>
<circle cx="1256.8" cy="669.5" r="1.7" fill="#fff" fill-opacity=".8" stroke="#666" stroke-width=".8"/>
<circle cx="1480.0" cy="663.7" r="1.7" fill="#fff" fill-opacity=".8" stroke="#666" stroke-width=".8"/>
<circle cx="831.1" cy="704.7" r="1.7" fill="#fff" fill-opacity=".8" stroke="#666" stroke-width=".8"/>
<circle cx="1000.9" cy="750.8" r="1.7" fill="#fff" fill-opacity=".8" stroke="#666" stroke-width=".8"/>
<circle cx="921.9" cy="842.8" r="1.7" fill="#fff" fill-opacity=".8" stroke="#666" stroke-width=".8"/>
<circle cx="993.0" cy="820.8" r="1.7" fill="#fff" fill-opacity=".8" stroke="#666" stroke-width=".8"/>
<circle cx="1036.9" cy="832.7" r="1.7" fill="#fff" fill-opacity=".8" stroke="#666" stroke-width=".8"/>
<circle cx="1165.9" cy="840.9" r="1.7" fill="#fff" fill-opacity=".8" stroke="#666" stroke-width=".8"/>
<circle cx="1081.2" cy="848.8" r="2.3" fill="#fff" fill-opacity=".8" stroke="#666" stroke-width=".8"/>
<circle cx="1081.2" cy="848.8" r=".9" fill="#555"/>
<circle cx="1393.1" cy="776.9" r="2.3" fill="#fff" fill-opacity=".8" stroke="#666" stroke-width=".8"/>
<circle cx="1393.1" cy="776.9" r=".9" fill="#555"/>
<circle cx="1426.9" cy="781.1" r="2.3" fill="#fff" fill-opacity=".8" stroke="#666" stroke-width=".8"/>
<circle cx="1426.9" cy="781.1" r=".9" fill="#555"/>
<circle cx="1451.1" cy="811.7" r="1.7" fill="#fff" fill-opacity=".8" stroke="#666" stroke-width=".8"/>
<circle cx="1351.0" cy="853.7" r="1.7" fill="#fff" fill-opacity=".8" stroke="#666" stroke-width=".8"/>
<circle cx="1360.2" cy="888.3" r="1.7" fill="#fff" fill-opacity=".8" stroke="#666" stroke-width=".8"/>
<circle cx="1374.8" cy="936.8" r="2.3" fill="#fff" fill-opacity=".8" stroke="#666" stroke-width=".8"/>
<circle cx="1374.8" cy="936.8" r=".9" fill="#555"/>
<circle cx="1275.1" cy="947.7" r="1.7" fill="#fff" fill-opacity=".8" stroke="#666" stroke-width=".8"/>
<circle cx="1012.8" cy="590.1" r="1.7" fill="#fff" fill-opacity=".8" stroke="#666" stroke-width=".8"/>
<circle cx="1036.9" cy="507.1" r="1.7" fill="#fff" fill-opacity=".8" stroke="#666" stroke-width=".8"/>
<circle cx="868.3" cy="940.8" r="1.7" fill="#fff" fill-opacity=".8" stroke="#666" stroke-width=".8"/>
<circle cx="926.8" cy="930.7" r="1.7" fill="#fff" fill-opacity=".8" stroke="#666" stroke-width=".8"/>
<circle cx="787.8" cy="939.0" r="1.7" fill="#fff" fill-opacity=".8" stroke="#666" stroke-width=".8"/>
<circle cx="1050.1" cy="936.8" r="1.7" fill="#fff" fill-opacity=".8" stroke="#666" stroke-width=".8"/>
<circle cx="1040.0" cy="960.9" r="1.7" fill="#fff" fill-opacity=".8" stroke="#666" stroke-width=".8"/>
<circle cx="1208.9" cy="960.9" r="1.7" fill="#fff" fill-opacity=".8" stroke="#666" stroke-width=".8"/>
<g fill="#fff" fill-opacity=".45" stroke="#3a9ad4" stroke-width="1.200">
<circle cx="1024.9" cy="297.4" r="4.600"/>
<circle cx="1036.6" cy="302.2" r="4.600"/>
<circle cx="1074.3" cy="307.0" r="4.600"/>
<circle cx="1064.7" cy="315.2" r="4.600"/>
<circle cx="1060.6" cy="319.3" r="4.600"/>
<circle cx="1095.6" cy="367.3" r="4.600"/>
<circle cx="1112.1" cy="382.4" r="4.600"/>
<circle cx="1091.9" cy="393.4" r="4.600"/>
<circle cx="970.1" cy="392.7" r="4.600"/>
<circle cx="1006.4" cy="392.4" r="4.600"/>
<circle cx="1014.0" cy="388.6" r="4.600"/>
<circle cx="1020.1" cy="392.4" r="4.600"/>
<circle cx="1019.7" cy="419.1" r="4.600"/>
<circle cx="1073.6" cy="422.2" r="4.600"/>
<circle cx="1122.4" cy="412.6" r="4.600"/>
<circle cx="1081.2" cy="291.2" r="4.600"/>
<circle cx="1081.7" cy="321.1" r="4.600"/>
<circle cx="1107.3" cy="330.2" r="4.600"/>
<circle cx="936.3" cy="343.7" r="4.600"/>
<circle cx="999.0" cy="452.2" r="4.600"/>
<circle cx="991.7" cy="481.8" r="4.600"/>
<circle cx="984.4" cy="485.5" r="4.600"/>
<circle cx="994.5" cy="511.1" r="4.600"/>
<circle cx="946.9" cy="518.4" r="4.600"/>
<circle cx="1003.6" cy="427.0" r="4.600"/>
<circle cx="1123.8" cy="343.7" r="4.600"/>
<circle cx="1157.6" cy="355.3" r="4.600"/>
<circle cx="1134.8" cy="364.8" r="4.600"/>
<circle cx="1219.8" cy="374.8" r="4.600"/>
<circle cx="1125.6" cy="385.8" r="4.600"/>
<circle cx="1102.2" cy="392.2" r="4.600"/>
<circle cx="1241.8" cy="405.9" r="4.600"/>
<circle cx="1241.8" cy="421.5" r="4.600"/>
<circle cx="1022.8" cy="437.6" r="4.600"/>
<circle cx="1171.4" cy="441.6" r="4.600"/>
<circle cx="1104.6" cy="463.6" r="4.600"/>
<circle cx="1138.4" cy="474.2" r="4.600"/>
<circle cx="1133.5" cy="476.7" r="4.600"/>
<circle cx="1062.2" cy="486.4" r="4.600"/>
<circle cx="1014.1" cy="488.2" r="4.600"/>
<circle cx="1100.6" cy="493.2" r="4.600"/>
<circle cx="1262.3" cy="348.3" r="4.600"/>
<circle cx="1248.6" cy="392.2" r="4.600"/>
<circle cx="1267.8" cy="397.3" r="4.600"/>
<circle cx="1254.6" cy="435.6" r="4.600"/>
<circle cx="1261.4" cy="470.0" r="4.600"/>
<circle cx="1308.9" cy="482.2" r="4.600"/>
<circle cx="933.2" cy="527.4" r="4.600"/>
<circle cx="940.5" cy="530.5" r="4.600"/>
<circle cx="988.1" cy="551.2" r="4.600"/>
<circle cx="996.3" cy="567.6" r="4.600"/>
<circle cx="996.3" cy="574.0" r="4.600"/>
<circle cx="991.7" cy="587.8" r="4.600"/>
<circle cx="926.8" cy="596.9" r="4.600"/>
<circle cx="972.5" cy="601.5" r="4.600"/>
<circle cx="965.2" cy="628.0" r="4.600"/>
<circle cx="980.8" cy="625.3" r="4.600"/>
<circle cx="993.6" cy="628.0" r="4.600"/>
<circle cx="993.6" cy="662.4" r="4.600"/>
<circle cx="968.9" cy="684.7" r="4.600"/>
<circle cx="1000.0" cy="692.9" r="4.600"/>
<circle cx="955.7" cy="564.0" r="4.600"/>
<circle cx="1061.6" cy="552.1" r="4.600"/>
<circle cx="1078.6" cy="558.5" r="4.600"/>
<circle cx="1070.8" cy="570.4" r="4.600"/>
<circle cx="1103.1" cy="565.8" r="4.600"/>
<circle cx="1162.6" cy="582.3" r="4.600"/>
<circle cx="1175.4" cy="585.4" r="4.600"/>
<circle cx="1191.5" cy="543.9" r="4.600"/>
<circle cx="1240.0" cy="558.5" r="4.600"/>
<circle cx="1025.9" cy="602.4" r="4.600"/>
<circle cx="1087.8" cy="611.2" r="4.600"/>
<circle cx="1109.7" cy="607.5" r="4.600"/>
<circle cx="1226.6" cy="609.5" r="4.600"/>
<circle cx="1156.7" cy="625.6" r="4.600"/>
<circle cx="1047.0" cy="626.7" r="4.600"/>
<circle cx="1062.5" cy="635.3" r="4.600"/>
<circle cx="1200.6" cy="640.3" r="4.600"/>
<circle cx="1125.6" cy="648.5" r="4.600"/>
<circle cx="1158.6" cy="650.3" r="4.600"/>
<circle cx="1172.3" cy="654.5" r="4.600"/>
<circle cx="1039.7" cy="644.5" r="4.600"/>
<circle cx="1043.3" cy="641.7" r="4.600"/>
<circle cx="1113.7" cy="684.3" r="4.600"/>
<circle cx="1151.8" cy="691.1" r="4.600"/>
<circle cx="1129.8" cy="699.3" r="4.600"/>
<circle cx="1269.6" cy="571.3" r="4.600"/>
<circle cx="1319.4" cy="579.2" r="4.600"/>
<circle cx="961.5" cy="703.7" r="4.600"/>
<circle cx="996.7" cy="789.3" r="4.600"/>
<circle cx="996.7" cy="798.9" r="4.600"/>
<circle cx="1028.7" cy="718.9" r="4.600"/>
<circle cx="1015.3" cy="737.6" r="4.600"/>
<circle cx="1091.8" cy="736.7" r="4.600"/>
<circle cx="1063.4" cy="739.4" r="4.600"/>
<circle cx="1059.8" cy="755.5" r="4.600"/>
<circle cx="1102.8" cy="764.1" r="4.600"/>
<circle cx="1113.7" cy="762.3" r="4.600"/>
<circle cx="1058.0" cy="771.4" r="4.600"/>
<circle cx="1160.4" cy="777.8" r="4.600"/>
<circle cx="1174.1" cy="774.2" r="4.600"/>
<circle cx="1181.1" cy="781.5" r="4.600"/>
<circle cx="1192.4" cy="770.0" r="4.600"/>
<circle cx="1053.4" cy="792.1" r="4.600"/>
<circle cx="1114.3" cy="791.5" r="4.600"/>
<circle cx="1144.5" cy="785.5" r="4.600"/>
<circle cx="1144.5" cy="794.3" r="4.600"/>
<circle cx="1160.9" cy="791.0" r="4.600"/>
<circle cx="1131.5" cy="800.7" r="4.600"/>
<circle cx="1057.0" cy="803.4" r="4.600"/>
<circle cx="1175.6" cy="807.6" r="4.600"/>
<circle cx="1194.2" cy="810.4" r="4.600"/>
<circle cx="1130.2" cy="702.8" r="4.600"/>
<circle cx="1260.8" cy="727.5" r="4.600"/>
<circle cx="1261.9" cy="751.3" r="4.600"/>
<circle cx="1074.3" cy="296.7" r="4.850" stroke-width="1"/>
<circle cx="1104.2" cy="306.3" r="4.850" stroke-width="1"/>
<circle cx="1035.6" cy="311.5" r="4.850" stroke-width="1"/>
<circle cx="1049.0" cy="317.5" r="4.850" stroke-width="1"/>
<circle cx="1082.6" cy="315.2" r="4.850" stroke-width="1"/>
<circle cx="1115.5" cy="317.3" r="4.850" stroke-width="1"/>
<circle cx="1109.3" cy="327.3" r="4.850" stroke-width="1"/>
<circle cx="1039.6" cy="330.7" r="4.850" stroke-width="1"/>
<circle cx="1082.2" cy="331.9" r="4.850" stroke-width="1"/>
<circle cx="987.6" cy="342.6" r="4.850" stroke-width="1"/>
<circle cx="1007.2" cy="342.9" r="4.850" stroke-width="1"/>
<circle cx="1119.3" cy="343.6" r="4.850" stroke-width="1"/>
<circle cx="1051.3" cy="347.2" r="4.850" stroke-width="1"/>
<circle cx="1058.1" cy="351.2" r="4.850" stroke-width="1"/>
<circle cx="1083.5" cy="356.8" r="4.850" stroke-width="1"/>
<circle cx="1017.8" cy="366.9" r="4.850" stroke-width="1"/>
<circle cx="1044.2" cy="366.4" r="4.850" stroke-width="1"/>
<circle cx="1042.1" cy="374.5" r="4.850" stroke-width="1"/>
<circle cx="997.2" cy="374.5" r="4.850" stroke-width="1"/>
<circle cx="973.5" cy="378.6" r="4.850" stroke-width="1"/>
<circle cx="1076.7" cy="377.9" r="4.850" stroke-width="1"/>
<circle cx="1097.7" cy="376.9" r="4.850" stroke-width="1"/>
<circle cx="1102.7" cy="384.5" r="4.850" stroke-width="1"/>
<circle cx="951.5" cy="388.6" r="4.850" stroke-width="1"/>
<circle cx="997.0" cy="390.7" r="4.850" stroke-width="1"/>
<circle cx="1038.4" cy="392.0" r="4.850" stroke-width="1"/>
<circle cx="1063.6" cy="398.9" r="4.850" stroke-width="1"/>
<circle cx="976.9" cy="403.4" r="4.850" stroke-width="1"/>
<circle cx="1034.8" cy="406.0" r="4.850" stroke-width="1"/>
<circle cx="1007.8" cy="427.7" r="4.850" stroke-width="1"/>
<circle cx="1048.5" cy="428.8" r="4.850" stroke-width="1"/>
<circle cx="1030.9" cy="277.2" r="4.850" stroke-width="1"/>
<circle cx="1055.2" cy="294.5" r="4.850" stroke-width="1"/>
<circle cx="1151.2" cy="315.2" r="4.850" stroke-width="1"/>
<circle cx="1217.1" cy="319.2" r="4.850" stroke-width="1"/>
<circle cx="1139.4" cy="332.0" r="4.850" stroke-width="1"/>
<circle cx="1226.6" cy="329.6" r="4.850" stroke-width="1"/>
<circle cx="1259.5" cy="303.3" r="4.850" stroke-width="1"/>
<circle cx="1261.4" cy="327.8" r="4.850" stroke-width="1"/>
<circle cx="1281.5" cy="337.5" r="4.850" stroke-width="1"/>
<circle cx="981.3" cy="436.1" r="4.850" stroke-width="1"/>
<circle cx="980.9" cy="454.4" r="4.850" stroke-width="1"/>
<circle cx="980.8" cy="469.0" r="4.850" stroke-width="1"/>
<circle cx="963.7" cy="501.6" r="4.850" stroke-width="1"/>
<circle cx="998.5" cy="497.8" r="4.850" stroke-width="1"/>
<circle cx="1143.0" cy="349.2" r="4.850" stroke-width="1"/>
<circle cx="1179.2" cy="346.1" r="4.850" stroke-width="1"/>
<circle cx="1197.9" cy="342.5" r="4.850" stroke-width="1"/>
<circle cx="1208.5" cy="350.5" r="4.850" stroke-width="1"/>
<circle cx="1143.7" cy="359.3" r="4.850" stroke-width="1"/>
<circle cx="1221.1" cy="369.4" r="4.850" stroke-width="1"/>
<circle cx="1134.8" cy="371.5" r="4.850" stroke-width="1"/>
<circle cx="1166.2" cy="384.0" r="4.850" stroke-width="1"/>
<circle cx="1198.6" cy="386.7" r="4.850" stroke-width="1"/>
<circle cx="1224.4" cy="393.5" r="4.850" stroke-width="1"/>
<circle cx="1134.2" cy="403.2" r="4.850" stroke-width="1"/>
<circle cx="1190.9" cy="408.3" r="4.850" stroke-width="1"/>
<circle cx="1226.6" cy="407.8" r="4.850" stroke-width="1"/>
<circle cx="1093.6" cy="435.6" r="4.850" stroke-width="1"/>
<circle cx="1111.7" cy="439.0" r="4.850" stroke-width="1"/>
<circle cx="1154.9" cy="435.0" r="4.850" stroke-width="1"/>
<circle cx="1181.8" cy="440.9" r="4.850" stroke-width="1"/>
<circle cx="1212.7" cy="437.4" r="4.850" stroke-width="1"/>
<circle cx="1230.8" cy="440.1" r="4.850" stroke-width="1"/>
<circle cx="1099.7" cy="446.7" r="4.850" stroke-width="1"/>
<circle cx="1027.8" cy="463.9" r="4.850" stroke-width="1"/>
<circle cx="1229.9" cy="461.4" r="4.850" stroke-width="1"/>
<circle cx="1166.4" cy="469.6" r="4.850" stroke-width="1"/>
<circle cx="1077.2" cy="473.2" r="4.850" stroke-width="1"/>
<circle cx="1088.5" cy="473.1" r="4.850" stroke-width="1"/>
<circle cx="1201.5" cy="478.6" r="4.850" stroke-width="1"/>
<circle cx="1219.8" cy="476.4" r="4.850" stroke-width="1"/>
<circle cx="1241.8" cy="479.5" r="4.850" stroke-width="1"/>
<circle cx="1019.5" cy="484.2" r="4.850" stroke-width="1"/>
<circle cx="1123.4" cy="485.9" r="4.850" stroke-width="1"/>
<circle cx="1144.8" cy="490.4" r="4.850" stroke-width="1"/>
<circle cx="1156.7" cy="495.9" r="4.850" stroke-width="1"/>
<circle cx="1046.4" cy="499.2" r="4.850" stroke-width="1"/>
<circle cx="1175.2" cy="499.8" r="4.850" stroke-width="1"/>
<circle cx="1215.3" cy="498.3" r="4.850" stroke-width="1"/>
<circle cx="1075.3" cy="501.4" r="4.850" stroke-width="1"/>
<circle cx="1094.5" cy="510.4" r="4.850" stroke-width="1"/>
<circle cx="1025.9" cy="512.9" r="4.850" stroke-width="1"/>
<circle cx="1223.5" cy="515.7" r="4.850" stroke-width="1"/>
<circle cx="1069.8" cy="517.1" r="4.850" stroke-width="1"/>
<circle cx="1138.1" cy="518.1" r="4.850" stroke-width="1"/>
<circle cx="1241.8" cy="513.9" r="4.850" stroke-width="1"/>
<circle cx="1258.3" cy="349.2" r="4.850" stroke-width="1"/>
<circle cx="1288.4" cy="375.8" r="4.850" stroke-width="1"/>
<circle cx="1253.5" cy="387.1" r="4.850" stroke-width="1"/>
<circle cx="1258.6" cy="408.7" r="4.850" stroke-width="1"/>
<circle cx="1282.4" cy="409.0" r="4.850" stroke-width="1"/>
<circle cx="1284.6" cy="430.6" r="4.850" stroke-width="1"/>
<circle cx="1277.8" cy="451.7" r="4.850" stroke-width="1"/>
<circle cx="1253.5" cy="465.9" r="4.850" stroke-width="1"/>
<circle cx="1258.3" cy="472.7" r="4.850" stroke-width="1"/>
<circle cx="1263.8" cy="479.5" r="4.850" stroke-width="1"/>
<circle cx="1290.6" cy="469.0" r="4.850" stroke-width="1"/>
<circle cx="1309.8" cy="466.8" r="4.850" stroke-width="1"/>
<circle cx="1290.6" cy="491.9" r="4.850" stroke-width="1"/>
<circle cx="1262.3" cy="503.2" r="4.850" stroke-width="1"/>
<circle cx="975.3" cy="527.4" r="4.850" stroke-width="1"/>
<circle cx="965.2" cy="551.2" r="4.850" stroke-width="1"/>
<circle cx="955.7" cy="559.4" r="4.850" stroke-width="1"/>
<circle cx="976.2" cy="562.2" r="4.850" stroke-width="1"/>
<circle cx="995.8" cy="563.1" r="4.850" stroke-width="1"/>
<circle cx="937.4" cy="570.8" r="4.850" stroke-width="1"/>
<circle cx="973.4" cy="590.5" r="4.850" stroke-width="1"/>
<circle cx="950.9" cy="592.9" r="4.850" stroke-width="1"/>
<circle cx="922.2" cy="595.4" r="4.850" stroke-width="1"/>
<circle cx="975.3" cy="600.0" r="4.850" stroke-width="1"/>
<circle cx="945.1" cy="616.7" r="4.850" stroke-width="1"/>
<circle cx="985.3" cy="621.6" r="4.850" stroke-width="1"/>
<circle cx="960.6" cy="626.7" r="4.850" stroke-width="1"/>
<circle cx="938.3" cy="630.4" r="4.850" stroke-width="1"/>
<circle cx="969.2" cy="639.9" r="4.850" stroke-width="1"/>
<circle cx="978.4" cy="656.4" r="4.850" stroke-width="1"/>
<circle cx="950.9" cy="670.1" r="4.850" stroke-width="1"/>
<circle cx="968.9" cy="669.2" r="4.850" stroke-width="1"/>
<circle cx="981.3" cy="673.9" r="4.850" stroke-width="1"/>
<circle cx="1000.0" cy="680.1" r="4.850" stroke-width="1"/>
<circle cx="941.4" cy="686.0" r="4.850" stroke-width="1"/>
<circle cx="968.3" cy="689.3" r="4.850" stroke-width="1"/>
<circle cx="1050.1" cy="523.7" r="4.850" stroke-width="1"/>
<circle cx="1100.6" cy="526.1" r="4.850" stroke-width="1"/>
<circle cx="1130.2" cy="528.3" r="4.850" stroke-width="1"/>
<circle cx="1131.1" cy="522.8" r="4.850" stroke-width="1"/>
<circle cx="1154.4" cy="522.8" r="4.850" stroke-width="1"/>
<circle cx="1154.5" cy="533.4" r="4.850" stroke-width="1"/>
<circle cx="1006.7" cy="538.9" r="4.850" stroke-width="1"/>
<circle cx="1044.2" cy="539.8" r="4.850" stroke-width="1"/>
<circle cx="1062.5" cy="544.2" r="4.850" stroke-width="1"/>
<circle cx="1100.6" cy="544.4" r="4.850" stroke-width="1"/>
<circle cx="1204.8" cy="549.0" r="4.850" stroke-width="1"/>
<circle cx="1012.8" cy="550.6" r="4.850" stroke-width="1"/>
<circle cx="1117.4" cy="552.1" r="4.850" stroke-width="1"/>
<circle cx="1161.7" cy="553.6" r="4.850" stroke-width="1"/>
<circle cx="1173.2" cy="552.5" r="4.850" stroke-width="1"/>
<circle cx="1188.4" cy="552.5" r="4.850" stroke-width="1"/>
<circle cx="1214.4" cy="558.1" r="4.850" stroke-width="1"/>
<circle cx="1242.7" cy="559.4" r="4.850" stroke-width="1"/>
<circle cx="1060.2" cy="557.6" r="4.850" stroke-width="1"/>
<circle cx="1073.9" cy="560.0" r="4.850" stroke-width="1"/>
<circle cx="1034.5" cy="567.6" r="4.850" stroke-width="1"/>
<circle cx="1051.9" cy="574.6" r="4.850" stroke-width="1"/>
<circle cx="1190.6" cy="574.4" r="4.850" stroke-width="1"/>
<circle cx="1024.5" cy="579.9" r="4.850" stroke-width="1"/>
<circle cx="1119.2" cy="580.6" r="4.850" stroke-width="1"/>
<circle cx="1146.7" cy="581.9" r="4.850" stroke-width="1"/>
<circle cx="1199.7" cy="589.4" r="4.850" stroke-width="1"/>
<circle cx="1091.1" cy="591.2" r="4.850" stroke-width="1"/>
<circle cx="1233.9" cy="595.6" r="4.850" stroke-width="1"/>
<circle cx="1058.5" cy="598.7" r="4.850" stroke-width="1"/>
<circle cx="1069.5" cy="598.6" r="4.850" stroke-width="1"/>
<circle cx="1010.4" cy="605.1" r="4.850" stroke-width="1"/>
<circle cx="1213.8" cy="603.3" r="4.850" stroke-width="1"/>
<circle cx="1172.3" cy="603.7" r="4.850" stroke-width="1"/>
<circle cx="1138.1" cy="605.5" r="4.850" stroke-width="1"/>
<circle cx="1041.5" cy="609.7" r="4.850" stroke-width="1"/>
<circle cx="1070.2" cy="610.6" r="4.850" stroke-width="1"/>
<circle cx="1067.7" cy="616.1" r="4.850" stroke-width="1"/>
<circle cx="1120.5" cy="612.1" r="4.850" stroke-width="1"/>
<circle cx="1185.1" cy="611.9" r="4.850" stroke-width="1"/>
<circle cx="1100.4" cy="616.7" r="4.850" stroke-width="1"/>
<circle cx="1154.5" cy="616.5" r="4.850" stroke-width="1"/>
<circle cx="1199.9" cy="617.9" r="4.850" stroke-width="1"/>
<circle cx="1221.7" cy="621.6" r="4.850" stroke-width="1"/>
<circle cx="1237.6" cy="622.0" r="4.850" stroke-width="1"/>
<circle cx="1018.6" cy="624.3" r="4.850" stroke-width="1"/>
<circle cx="1123.4" cy="628.6" r="4.850" stroke-width="1"/>
<circle cx="1147.0" cy="630.4" r="4.850" stroke-width="1"/>
<circle cx="1188.4" cy="630.2" r="4.850" stroke-width="1"/>
<circle cx="1073.5" cy="633.1" r="4.850" stroke-width="1"/>
<circle cx="1106.4" cy="636.2" r="4.850" stroke-width="1"/>
<circle cx="1032.4" cy="636.6" r="4.850" stroke-width="1"/>
<circle cx="1195.7" cy="641.2" r="4.850" stroke-width="1"/>
<circle cx="1047.9" cy="645.9" r="4.850" stroke-width="1"/>
<circle cx="1193.0" cy="650.1" r="4.850" stroke-width="1"/>
<circle cx="1036.0" cy="650.3" r="4.850" stroke-width="1"/>
<circle cx="1186.4" cy="653.6" r="4.850" stroke-width="1"/>
<circle cx="1009.9" cy="653.1" r="4.850" stroke-width="1"/>
<circle cx="1076.8" cy="651.6" r="4.850" stroke-width="1"/>
<circle cx="1144.8" cy="661.3" r="4.850" stroke-width="1"/>
<circle cx="1100.9" cy="668.2" r="4.850" stroke-width="1"/>
<circle cx="1062.2" cy="672.1" r="4.850" stroke-width="1"/>
<circle cx="1202.3" cy="675.9" r="4.850" stroke-width="1"/>
<circle cx="1075.7" cy="682.0" r="4.850" stroke-width="1"/>
<circle cx="1055.9" cy="683.2" r="4.850" stroke-width="1"/>
<circle cx="1037.5" cy="687.1" r="4.850" stroke-width="1"/>
<circle cx="1115.9" cy="686.2" r="4.850" stroke-width="1"/>
<circle cx="1151.2" cy="687.5" r="4.850" stroke-width="1"/>
<circle cx="1189.5" cy="692.6" r="4.850" stroke-width="1"/>
<circle cx="1225.3" cy="694.8" r="4.850" stroke-width="1"/>
<circle cx="1017.7" cy="696.2" r="4.850" stroke-width="1"/>
<circle cx="1299.8" cy="523.7" r="4.850" stroke-width="1"/>
<circle cx="1246.7" cy="525.0" r="4.850" stroke-width="1"/>
<circle cx="1265.6" cy="533.8" r="4.850" stroke-width="1"/>
<circle cx="1296.7" cy="548.1" r="4.850" stroke-width="1"/>
<circle cx="1328.1" cy="568.9" r="4.850" stroke-width="1"/>
<circle cx="1273.8" cy="571.3" r="4.850" stroke-width="1"/>
<circle cx="1253.1" cy="577.2" r="4.850" stroke-width="1"/>
<circle cx="1294.9" cy="585.0" r="4.850" stroke-width="1"/>
<circle cx="1319.0" cy="588.1" r="4.850" stroke-width="1"/>
<circle cx="1273.8" cy="600.0" r="4.850" stroke-width="1"/>
<circle cx="1246.2" cy="606.1" r="4.850" stroke-width="1"/>
<circle cx="952.4" cy="703.7" r="4.850" stroke-width="1"/>
<circle cx="971.6" cy="707.4" r="4.850" stroke-width="1"/>
<circle cx="1003.3" cy="765.9" r="4.850" stroke-width="1"/>
<circle cx="1003.3" cy="789.3" r="4.850" stroke-width="1"/>
<circle cx="993.2" cy="811.3" r="4.850" stroke-width="1"/>
<circle cx="1053.4" cy="702.8" r="4.850" stroke-width="1"/>
<circle cx="1170.8" cy="703.7" r="4.850" stroke-width="1"/>
<circle cx="1080.8" cy="708.0" r="4.850" stroke-width="1"/>
<circle cx="1218.6" cy="707.4" r="4.850" stroke-width="1"/>
<circle cx="1153.1" cy="707.8" r="4.850" stroke-width="1"/>
<circle cx="1064.4" cy="713.4" r="4.850" stroke-width="1"/>
<circle cx="1119.6" cy="711.1" r="4.850" stroke-width="1"/>
<circle cx="1136.1" cy="712.9" r="4.850" stroke-width="1"/>
<circle cx="1108.6" cy="716.2" r="4.850" stroke-width="1"/>
<circle cx="1198.4" cy="719.3" r="4.850" stroke-width="1"/>
<circle cx="1145.4" cy="721.5" r="4.850" stroke-width="1"/>
<circle cx="1027.4" cy="724.4" r="4.850" stroke-width="1"/>
<circle cx="1051.9" cy="724.4" r="4.850" stroke-width="1"/>
<circle cx="1043.9" cy="727.2" r="4.850" stroke-width="1"/>
<circle cx="1168.1" cy="726.1" r="4.850" stroke-width="1"/>
<circle cx="1088.7" cy="728.1" r="4.850" stroke-width="1"/>
<circle cx="1195.5" cy="732.1" r="4.850" stroke-width="1"/>
<circle cx="1066.6" cy="734.3" r="4.850" stroke-width="1"/>
<circle cx="1080.5" cy="735.8" r="4.850" stroke-width="1"/>
<circle cx="1219.5" cy="734.5" r="4.850" stroke-width="1"/>
<circle cx="1135.3" cy="736.9" r="4.850" stroke-width="1"/>
<circle cx="1067.5" cy="744.0" r="4.850" stroke-width="1"/>
<circle cx="1096.7" cy="745.4" r="4.850" stroke-width="1"/>
<circle cx="1158.2" cy="742.7" r="4.850" stroke-width="1"/>
<circle cx="1172.8" cy="742.7" r="4.850" stroke-width="1"/>
<circle cx="1218.9" cy="745.8" r="4.850" stroke-width="1"/>
<circle cx="1021.4" cy="748.9" r="4.850" stroke-width="1"/>
<circle cx="1114.7" cy="757.7" r="4.850" stroke-width="1"/>
<circle cx="1030.9" cy="759.9" r="4.850" stroke-width="1"/>
<circle cx="1099.5" cy="760.8" r="4.850" stroke-width="1"/>
<circle cx="1146.1" cy="762.3" r="4.850" stroke-width="1"/>
<circle cx="1180.0" cy="763.7" r="4.850" stroke-width="1"/>
<circle cx="1185.6" cy="767.2" r="4.850" stroke-width="1"/>
<circle cx="1079.5" cy="764.7" r="4.850" stroke-width="1"/>
<circle cx="1216.7" cy="772.0" r="4.850" stroke-width="1"/>
<circle cx="1098.8" cy="776.0" r="4.850" stroke-width="1"/>
<circle cx="1141.6" cy="778.4" r="4.850" stroke-width="1"/>
<circle cx="1173.2" cy="780.2" r="4.850" stroke-width="1"/>
<circle cx="1054.9" cy="779.7" r="4.850" stroke-width="1"/>
<circle cx="1046.4" cy="783.7" r="4.850" stroke-width="1"/>
<circle cx="1035.6" cy="792.5" r="4.850" stroke-width="1"/>
<circle cx="1109.5" cy="792.1" r="4.850" stroke-width="1"/>
<circle cx="1202.1" cy="794.3" r="4.850" stroke-width="1"/>
<circle cx="1229.4" cy="793.9" r="4.850" stroke-width="1"/>
<circle cx="1089.6" cy="796.5" r="4.850" stroke-width="1"/>
<circle cx="1155.5" cy="799.2" r="4.850" stroke-width="1"/>
<circle cx="1218.6" cy="799.2" r="4.850" stroke-width="1"/>
<circle cx="1012.2" cy="799.8" r="4.850" stroke-width="1"/>
<circle cx="1142.5" cy="802.0" r="4.850" stroke-width="1"/>
<circle cx="1149.1" cy="804.9" r="4.850" stroke-width="1"/>
<circle cx="1085.4" cy="804.3" r="4.850" stroke-width="1"/>
<circle cx="1062.2" cy="804.0" r="4.850" stroke-width="1"/>
<circle cx="1104.6" cy="804.9" r="4.850" stroke-width="1"/>
<circle cx="1207.6" cy="803.4" r="4.850" stroke-width="1"/>
<circle cx="1118.3" cy="809.8" r="4.850" stroke-width="1"/>
<circle cx="1045.5" cy="811.3" r="4.850" stroke-width="1"/>
<circle cx="1066.2" cy="812.6" r="4.850" stroke-width="1"/>
<circle cx="1021.0" cy="812.0" r="4.850" stroke-width="1"/>
<circle cx="1019.5" cy="817.7" r="4.850" stroke-width="1"/>
<circle cx="1079.4" cy="815.0" r="4.850" stroke-width="1"/>
<circle cx="1139.4" cy="816.2" r="4.850" stroke-width="1"/>
<circle cx="1088.5" cy="822.1" r="4.850" stroke-width="1"/>
<circle cx="1151.8" cy="825.9" r="4.850" stroke-width="1"/>
<circle cx="1160.4" cy="830.0" r="4.850" stroke-width="1"/>
<circle cx="1147.6" cy="830.5" r="4.850" stroke-width="1"/>
<circle cx="1115.6" cy="832.0" r="4.850" stroke-width="1"/>
<circle cx="1244.9" cy="713.8" r="4.850" stroke-width="1"/>
<circle cx="1250.4" cy="720.2" r="4.850" stroke-width="1"/>
<circle cx="1255.3" cy="753.7" r="4.850" stroke-width="1"/>
<circle cx="1248.0" cy="765.9" r="4.850" stroke-width="1"/>
</g><g stroke="#111" stroke-width="1.150">
<circle cx="1030.9" cy="277.2" r="3.850" fill="#ffff00"/>
<circle cx="1055.2" cy="294.5" r="3.850" fill="#ffff00"/>
<circle cx="1074.3" cy="296.7" r="3.850" fill="#96ff00"/>
<circle cx="1259.5" cy="303.3" r="3.850" fill="#ffb400"/>
<circle cx="1104.2" cy="306.3" r="3.850" fill="#ffff00"/>
<circle cx="1035.6" cy="311.5" r="3.850" fill="#ffb400"/>
<circle cx="1151.2" cy="315.2" r="3.850" fill="#ffb400"/>
<circle cx="1082.6" cy="315.2" r="3.850" fill="#ffff00"/>
<circle cx="1115.5" cy="317.3" r="3.850" fill="#ffb400"/>
<circle cx="1049.0" cy="317.5" r="3.850" fill="#ffff00"/>
<circle cx="1217.1" cy="319.2" r="3.850" fill="#ffb400"/>
<circle cx="1109.3" cy="327.3" r="3.850" fill="#ffff00"/>
<circle cx="1261.4" cy="327.8" r="3.850" fill="#ffff00"/>
<circle cx="1226.6" cy="329.6" r="3.850" fill="#ffff00"/>
<circle cx="1039.6" cy="330.7" r="3.850" fill="#ffb400"/>
<circle cx="1082.2" cy="331.9" r="3.850" fill="#ffff00"/>
<circle cx="1139.4" cy="332.0" r="3.850" fill="#ffb400"/>
<circle cx="1281.5" cy="337.5" r="3.850" fill="#ffb400"/>
<circle cx="1197.9" cy="342.5" r="3.850" fill="#ffb400"/>
<circle cx="987.6" cy="342.6" r="3.850" fill="#ffb400"/>
<circle cx="1007.2" cy="342.9" r="3.850" fill="#ffb400"/>
<circle cx="1119.3" cy="343.6" r="3.850" fill="#ffff00"/>
<circle cx="1179.2" cy="346.1" r="3.850" fill="#ffb400"/>
<circle cx="1051.3" cy="347.2" r="3.850" fill="#ffb400"/>
<circle cx="1143.0" cy="349.2" r="3.850" fill="#ffb400"/>
<circle cx="1258.3" cy="349.2" r="3.850" fill="#ffff00"/>
<circle cx="1208.5" cy="350.5" r="3.850" fill="#ffff00"/>
<circle cx="1058.1" cy="351.2" r="3.850" fill="#ffff00"/>
<circle cx="1083.5" cy="356.8" r="3.850" fill="#ffff00"/>
<circle cx="1143.7" cy="359.3" r="3.850" fill="#ffb400"/>
<circle cx="1044.2" cy="366.4" r="3.850" fill="#ffb400"/>
<circle cx="1017.8" cy="366.9" r="3.850" fill="#e67800"/>
<circle cx="1221.1" cy="369.4" r="3.850" fill="#ffff00"/>
<circle cx="1134.8" cy="371.5" r="3.850" fill="#ffff00"/>
<circle cx="1042.1" cy="374.5" r="3.850" fill="#ffff00"/>
<circle cx="997.2" cy="374.5" r="3.850" fill="#e67800"/>
<circle cx="1288.4" cy="375.8" r="3.850" fill="#ffff00"/>
<circle cx="1097.7" cy="376.9" r="3.850" fill="#ffff00"/>
<circle cx="1076.7" cy="377.9" r="3.850" fill="#ffb400"/>
<circle cx="973.5" cy="378.6" r="3.850" fill="#e67800"/>
<circle cx="1166.2" cy="384.0" r="3.850" fill="#ffff00"/>
<circle cx="1102.7" cy="384.5" r="3.850" fill="#ffff00"/>
<circle cx="1198.6" cy="386.7" r="3.850" fill="#ffff00"/>
<circle cx="1253.5" cy="387.1" r="3.850" fill="#ffff00"/>
<circle cx="951.5" cy="388.6" r="3.850" fill="#e67800"/>
<circle cx="997.0" cy="390.7" r="3.850" fill="#ffb400"/>
<circle cx="1038.4" cy="392.0" r="3.850" fill="#ffb400"/>
<circle cx="1224.4" cy="393.5" r="3.850" fill="#ffff00"/>
<circle cx="1063.6" cy="398.9" r="3.850" fill="#ffb400"/>
<circle cx="1134.2" cy="403.2" r="3.850" fill="#ffb400"/>
<circle cx="976.9" cy="403.4" r="3.850" fill="#e67800"/>
<circle cx="1034.8" cy="406.0" r="3.850" fill="#ffb400"/>
<circle cx="1226.6" cy="407.8" r="3.850" fill="#ffff00"/>
<circle cx="1190.9" cy="408.3" r="3.850" fill="#ffff00"/>
<circle cx="1258.6" cy="408.7" r="3.850" fill="#ffff00"/>
<circle cx="1282.4" cy="409.0" r="3.850" fill="#ffb400"/>
<circle cx="1007.8" cy="427.7" r="3.850" fill="#ff0014"/>
<circle cx="1048.5" cy="428.8" r="3.850" fill="#ff0014"/>
<circle cx="1284.6" cy="430.6" r="3.850" fill="#ffb400"/>
<circle cx="1154.9" cy="435.0" r="3.850" fill="#ffb400"/>
<circle cx="1093.6" cy="435.6" r="3.850" fill="#e67800"/>
<circle cx="981.3" cy="436.1" r="3.850" fill="#e67800"/>
<circle cx="1212.7" cy="437.4" r="3.850" fill="#ffb400"/>
<circle cx="1111.7" cy="439.0" r="3.850" fill="#e67800"/>
<circle cx="1230.8" cy="440.1" r="3.850" fill="#ffb400"/>
<circle cx="1181.8" cy="440.9" r="3.850" fill="#e67800"/>
<circle cx="1099.7" cy="446.7" r="3.850" fill="#ffb400"/>
<circle cx="1277.8" cy="451.7" r="3.850" fill="#ffb400"/>
<circle cx="980.9" cy="454.4" r="3.850" fill="#ff0014"/>
<circle cx="1229.9" cy="461.4" r="3.850" fill="#e67800"/>
<circle cx="1027.8" cy="463.9" r="3.850" fill="#ff0014"/>
<circle cx="1253.5" cy="465.9" r="3.850" fill="#e67800"/>
<circle cx="1309.8" cy="466.8" r="3.850" fill="#e67800"/>
<circle cx="980.8" cy="469.0" r="3.850" fill="#ff0014"/>
<circle cx="1290.6" cy="469.0" r="3.850" fill="#ffb400"/>
<circle cx="1166.4" cy="469.6" r="3.850" fill="#e67800"/>
<circle cx="1258.3" cy="472.7" r="3.850" fill="#e67800"/>
<circle cx="1088.5" cy="473.1" r="3.850" fill="#ff0014"/>
<circle cx="1077.2" cy="473.2" r="3.850" fill="#ff00ff"/>
<circle cx="1219.8" cy="476.4" r="3.850" fill="#e67800"/>
<circle cx="1201.5" cy="478.6" r="3.850" fill="#e67800"/>
<circle cx="1241.8" cy="479.5" r="3.850" fill="#ff0014"/>
<circle cx="1263.8" cy="479.5" r="3.850" fill="#e67800"/>
<circle cx="1019.5" cy="484.2" r="3.850" fill="#ff00ff"/>
<circle cx="1123.4" cy="485.9" r="3.850" fill="#ff0014"/>
<circle cx="1144.8" cy="490.4" r="3.850" fill="#ff00ff"/>
<circle cx="1290.6" cy="491.9" r="3.850" fill="#e67800"/>
<circle cx="1156.7" cy="495.9" r="3.850" fill="#ff0014"/>
<circle cx="998.5" cy="497.8" r="3.850" fill="#ff00ff"/>
<circle cx="1215.3" cy="498.3" r="3.850" fill="#ff0014"/>
<circle cx="1046.4" cy="499.2" r="3.850" fill="#ff0014"/>
<circle cx="1175.2" cy="499.8" r="3.850" fill="#ff0014"/>
<circle cx="1075.3" cy="501.4" r="3.850" fill="#ff00ff"/>
<circle cx="963.7" cy="501.6" r="3.850" fill="#ff00ff"/>
<circle cx="1262.3" cy="503.2" r="3.850" fill="#ff0014"/>
<circle cx="1094.5" cy="510.4" r="3.850" fill="#ff0014"/>
<circle cx="1025.9" cy="512.9" r="3.850" fill="#ff00ff"/>
<circle cx="1241.8" cy="513.9" r="3.850" fill="#e67800"/>
<circle cx="1223.5" cy="515.7" r="3.850" fill="#ff0014"/>
<circle cx="1069.8" cy="517.1" r="3.850" fill="#ff0014"/>
<circle cx="1138.1" cy="518.1" r="3.850" fill="#ff00ff"/>
<circle cx="1131.1" cy="522.8" r="3.850" fill="#ff00ff"/>
<circle cx="1154.4" cy="522.8" r="3.850" fill="#ff00ff"/>
<circle cx="1050.1" cy="523.7" r="3.850" fill="#ff00ff"/>
<circle cx="1299.8" cy="523.7" r="3.850" fill="#e67800"/>
<circle cx="1246.7" cy="525.0" r="3.850" fill="#ff00ff"/>
<circle cx="1100.6" cy="526.1" r="3.850" fill="#ff0014"/>
<circle cx="975.3" cy="527.4" r="3.850" fill="#ff00ff"/>
<circle cx="1130.2" cy="528.3" r="3.850" fill="#ff0014"/>
<circle cx="1154.5" cy="533.4" r="3.850" fill="#ff00ff"/>
<circle cx="1265.6" cy="533.8" r="3.850" fill="#ff0014"/>
<circle cx="1006.7" cy="538.9" r="3.850" fill="#ff00ff"/>
<circle cx="1044.2" cy="539.8" r="3.850" fill="#ff00ff"/>
<circle cx="1062.5" cy="544.2" r="3.850" fill="#ff00ff"/>
<circle cx="1100.6" cy="544.4" r="3.850" fill="#ff00ff"/>
<circle cx="1296.7" cy="548.1" r="3.850" fill="#ff0014"/>
<circle cx="1204.8" cy="549.0" r="3.850" fill="#ff00ff"/>
<circle cx="1012.8" cy="550.6" r="3.850" fill="#ff0014"/>
<circle cx="965.2" cy="551.2" r="3.850" fill="#ff0014"/>
<circle cx="1117.4" cy="552.1" r="3.850" fill="#ff0014"/>
<circle cx="1173.2" cy="552.5" r="3.850" fill="#ff00ff"/>
<circle cx="1188.4" cy="552.5" r="3.850" fill="#ff00ff"/>
<circle cx="1161.7" cy="553.6" r="3.850" fill="#ff00ff"/>
<circle cx="1060.2" cy="557.6" r="3.850" fill="#ff0014"/>
<circle cx="1214.4" cy="558.1" r="3.850" fill="#ff0014"/>
<circle cx="955.7" cy="559.4" r="3.850" fill="#ff00ff"/>
<circle cx="1242.7" cy="559.4" r="3.850" fill="#ff00ff"/>
<circle cx="1073.9" cy="560.0" r="3.850" fill="#ff0014"/>
<circle cx="976.2" cy="562.2" r="3.850" fill="#ff00ff"/>
<circle cx="995.8" cy="563.1" r="3.850" fill="#ff00ff"/>
<circle cx="1034.5" cy="567.6" r="3.850" fill="#ff00ff"/>
<circle cx="1328.1" cy="568.9" r="3.850" fill="#ff00ff"/>
<circle cx="937.4" cy="570.8" r="3.850" fill="#ff0014"/>
<circle cx="1273.8" cy="571.3" r="3.850" fill="#ff00ff"/>
<circle cx="1190.6" cy="574.4" r="3.850" fill="#ff00ff"/>
<circle cx="1051.9" cy="574.6" r="3.850" fill="#ff00ff"/>
<circle cx="1253.1" cy="577.2" r="3.850" fill="#ff00ff"/>
<circle cx="1024.5" cy="579.9" r="3.850" fill="#ff00ff"/>
<circle cx="1119.2" cy="580.6" r="3.850" fill="#ff0014"/>
<circle cx="1146.7" cy="581.9" r="3.850" fill="#ff00ff"/>
<circle cx="1294.9" cy="585.0" r="3.850" fill="#ff0014"/>
<circle cx="1319.0" cy="588.1" r="3.850" fill="#ff0014"/>
<circle cx="1199.7" cy="589.4" r="3.850" fill="#ff00ff"/>
<circle cx="973.4" cy="590.5" r="3.850" fill="#ff00ff"/>
<circle cx="1091.1" cy="591.2" r="3.850" fill="#ff0014"/>
<circle cx="950.9" cy="592.9" r="3.850" fill="#ff00ff"/>
<circle cx="922.2" cy="595.4" r="3.850" fill="#ff00ff"/>
<circle cx="1233.9" cy="595.6" r="3.850" fill="#ff00ff"/>
<circle cx="1069.5" cy="598.6" r="3.850" fill="#ff0014"/>
<circle cx="1058.5" cy="598.7" r="3.850" fill="#ff00ff"/>
<circle cx="975.3" cy="600.0" r="3.850" fill="#ff0014"/>
<circle cx="1273.8" cy="600.0" r="3.850" fill="#ff0014"/>
<circle cx="1213.8" cy="603.3" r="3.850" fill="#ff0014"/>
<circle cx="1172.3" cy="603.7" r="3.850" fill="#ff0014"/>
<circle cx="1010.4" cy="605.1" r="3.850" fill="#ff0014"/>
<circle cx="1138.1" cy="605.5" r="3.850" fill="#ff00ff"/>
<circle cx="1246.2" cy="606.1" r="3.850" fill="#ff0014"/>
<circle cx="1041.5" cy="609.7" r="3.850" fill="#ff0014"/>
<circle cx="1070.2" cy="610.6" r="3.850" fill="#ff0014"/>
<circle cx="1185.1" cy="611.9" r="3.850" fill="#ff00ff"/>
<circle cx="1120.5" cy="612.1" r="3.850" fill="#ff0014"/>
<circle cx="1067.7" cy="616.1" r="3.850" fill="#ff00ff"/>
<circle cx="1154.5" cy="616.5" r="3.850" fill="#ff0014"/>
<circle cx="945.1" cy="616.7" r="3.850" fill="#ff0014"/>
<circle cx="1100.4" cy="616.7" r="3.850" fill="#ff00ff"/>
<circle cx="1199.9" cy="617.9" r="3.850" fill="#ffb400"/>
<circle cx="985.3" cy="621.6" r="3.850" fill="#e67800"/>
<circle cx="1221.7" cy="621.6" r="3.850" fill="#e67800"/>
<circle cx="1237.6" cy="622.0" r="3.850" fill="#ff00ff"/>
<circle cx="1018.6" cy="624.3" r="3.850" fill="#ff0014"/>
<circle cx="960.6" cy="626.7" r="3.850" fill="#ff0014"/>
<circle cx="1123.4" cy="628.6" r="3.850" fill="#e67800"/>
<circle cx="1188.4" cy="630.2" r="3.850" fill="#e67800"/>
<circle cx="938.3" cy="630.4" r="3.850" fill="#ff0014"/>
<circle cx="1147.0" cy="630.4" r="3.850" fill="#e67800"/>
<circle cx="1073.5" cy="633.1" r="3.850" fill="#e67800"/>
<circle cx="1106.4" cy="636.2" r="3.850" fill="#ff0014"/>
<circle cx="1032.4" cy="636.6" r="3.850" fill="#ff0014"/>
<circle cx="969.2" cy="639.9" r="3.850" fill="#e67800"/>
<circle cx="1195.7" cy="641.2" r="3.850" fill="#e67800"/>
<circle cx="1047.9" cy="645.9" r="3.850" fill="#ff0014"/>
<circle cx="1193.0" cy="650.1" r="3.850" fill="#ff0014"/>
<circle cx="1036.0" cy="650.3" r="3.850" fill="#e67800"/>
<circle cx="1076.8" cy="651.6" r="3.850" fill="#ff0014"/>
<circle cx="1009.9" cy="653.1" r="3.850" fill="#e67800"/>
<circle cx="1186.4" cy="653.6" r="3.850" fill="#e67800"/>
<circle cx="978.4" cy="656.4" r="3.850" fill="#ff0014"/>
<circle cx="1144.8" cy="661.3" r="3.850" fill="#ffb400"/>
<circle cx="1100.9" cy="668.2" r="3.850" fill="#e67800"/>
<circle cx="968.9" cy="669.2" r="3.850" fill="#ff0014"/>
<circle cx="950.9" cy="670.1" r="3.850" fill="#e67800"/>
<circle cx="1062.2" cy="672.1" r="3.850" fill="#e67800"/>
<circle cx="981.3" cy="673.9" r="3.850" fill="#ff0014"/>
<circle cx="1202.3" cy="675.9" r="3.850" fill="#ffb400"/>
<circle cx="1000.0" cy="680.1" r="3.850" fill="#ff00ff"/>
<circle cx="1075.7" cy="682.0" r="3.850" fill="#ff0014"/>
<circle cx="1055.9" cy="683.2" r="3.850" fill="#ffb400"/>
<circle cx="941.4" cy="686.0" r="3.850" fill="#ff0014"/>
<circle cx="1115.9" cy="686.2" r="3.850" fill="#ff00ff"/>
<circle cx="1037.5" cy="687.1" r="3.850" fill="#ffb400"/>
<circle cx="1151.2" cy="687.5" r="3.850" fill="#ff0014"/>
<circle cx="968.3" cy="689.3" r="3.850" fill="#e67800"/>
<circle cx="1189.5" cy="692.6" r="3.850" fill="#e67800"/>
<circle cx="1225.3" cy="694.8" r="3.850" fill="#e67800"/>
<circle cx="1017.7" cy="696.2" r="3.850" fill="#ff00ff"/>
<circle cx="1053.4" cy="702.8" r="3.850" fill="#e67800"/>
<circle cx="952.4" cy="703.7" r="3.850" fill="#ff0014"/>
<circle cx="1170.8" cy="703.7" r="3.850" fill="#ffb400"/>
<circle cx="971.6" cy="707.4" r="3.850" fill="#e67800"/>
<circle cx="1218.6" cy="707.4" r="3.850" fill="#ffb400"/>
<circle cx="1153.1" cy="707.8" r="3.850" fill="#e67800"/>
<circle cx="1080.8" cy="708.0" r="3.850" fill="#ff0014"/>
<circle cx="1119.6" cy="711.1" r="3.850" fill="#e67800"/>
<circle cx="1136.1" cy="712.9" r="3.850" fill="#e67800"/>
<circle cx="1064.4" cy="713.4" r="3.850" fill="#e67800"/>
<circle cx="1244.9" cy="713.8" r="3.850" fill="#ff00ff"/>
<circle cx="1108.6" cy="716.2" r="3.850" fill="#e67800"/>
<circle cx="1198.4" cy="719.3" r="3.850" fill="#ffb400"/>
<circle cx="1250.4" cy="720.2" r="3.850" fill="#ffb400"/>
<circle cx="1145.4" cy="721.5" r="3.850" fill="#ffb400"/>
<circle cx="1027.4" cy="724.4" r="3.850" fill="#e67800"/>
<circle cx="1051.9" cy="724.4" r="3.850" fill="#e67800"/>
<circle cx="1168.1" cy="726.1" r="3.850" fill="#ffb400"/>
<circle cx="1043.9" cy="727.2" r="3.850" fill="#e67800"/>
<circle cx="1088.7" cy="728.1" r="3.850" fill="#e67800"/>
<circle cx="1195.5" cy="732.1" r="3.850" fill="#e67800"/>
<circle cx="1066.6" cy="734.3" r="3.850" fill="#ffb400"/>
<circle cx="1219.5" cy="734.5" r="3.850" fill="#e67800"/>
<circle cx="1080.5" cy="735.8" r="3.850" fill="#ffb400"/>
<circle cx="1135.3" cy="736.9" r="3.850" fill="#e67800"/>
<circle cx="1158.2" cy="742.7" r="3.850" fill="#e67800"/>
<circle cx="1172.8" cy="742.7" r="3.850" fill="#e67800"/>
<circle cx="1067.5" cy="744.0" r="3.850" fill="#e67800"/>
<circle cx="1096.7" cy="745.4" r="3.850" fill="#ff00ff"/>
<circle cx="1218.9" cy="745.8" r="3.850" fill="#e67800"/>
<circle cx="1021.4" cy="748.9" r="3.850" fill="#ff00ff"/>
<circle cx="1255.3" cy="753.7" r="3.850" fill="#e67800"/>
<circle cx="1114.7" cy="757.7" r="3.850" fill="#e67800"/>
<circle cx="1030.9" cy="759.9" r="3.850" fill="#e67800"/>
<circle cx="1099.5" cy="760.8" r="3.850" fill="#ffb400"/>
<circle cx="1146.1" cy="762.3" r="3.850" fill="#ff0014"/>
<circle cx="1180.0" cy="763.7" r="3.850" fill="#ff0014"/>
<circle cx="1079.5" cy="764.7" r="3.850" fill="#ffb400"/>
<circle cx="1003.3" cy="765.9" r="3.850" fill="#e67800"/>
<circle cx="1248.0" cy="765.9" r="3.850" fill="#ffb400"/>
<circle cx="1185.6" cy="767.2" r="3.850" fill="#ff0014"/>
<circle cx="1216.7" cy="772.0" r="3.850" fill="#e67800"/>
<circle cx="1098.8" cy="776.0" r="3.850" fill="#e67800"/>
<circle cx="1141.6" cy="778.4" r="3.850" fill="#ff0014"/>
<circle cx="1054.9" cy="779.7" r="3.850" fill="#ffb400"/>
<circle cx="1173.2" cy="780.2" r="3.850" fill="#ff0014"/>
<circle cx="1046.4" cy="783.7" r="3.850" fill="#e67800"/>
<circle cx="1003.3" cy="789.3" r="3.850" fill="#e67800"/>
<circle cx="1109.5" cy="792.1" r="3.850" fill="#e67800"/>
<circle cx="1035.6" cy="792.5" r="3.850" fill="#ffb400"/>
<circle cx="1229.4" cy="793.9" r="3.850" fill="#e67800"/>
<circle cx="1202.1" cy="794.3" r="3.850" fill="#e67800"/>
<circle cx="1089.6" cy="796.5" r="3.850" fill="#ff0014"/>
<circle cx="1155.5" cy="799.2" r="3.850" fill="#e67800"/>
<circle cx="1218.6" cy="799.2" r="3.850" fill="#ffb400"/>
<circle cx="1012.2" cy="799.8" r="3.850" fill="#ff00ff"/>
<circle cx="1142.5" cy="802.0" r="3.850" fill="#ff0014"/>
<circle cx="1207.6" cy="803.4" r="3.850" fill="#ffb400"/>
<circle cx="1062.2" cy="804.0" r="3.850" fill="#e67800"/>
<circle cx="1085.4" cy="804.3" r="3.850" fill="#ffb400"/>
<circle cx="1149.1" cy="804.9" r="3.850" fill="#ff00ff"/>
<circle cx="1104.6" cy="804.9" r="3.850" fill="#e67800"/>
<circle cx="1118.3" cy="809.8" r="3.850" fill="#ffb400"/>
<circle cx="993.2" cy="811.3" r="3.850" fill="#ffb400"/>
<circle cx="1045.5" cy="811.3" r="3.850" fill="#e67800"/>
<circle cx="1021.0" cy="812.0" r="3.850" fill="#ffb400"/>
<circle cx="1066.2" cy="812.6" r="3.850" fill="#ff0014"/>
<circle cx="1079.4" cy="815.0" r="3.850" fill="#e67800"/>
<circle cx="1139.4" cy="816.2" r="3.850" fill="#ff0014"/>
<circle cx="1019.5" cy="817.7" r="3.850" fill="#ffb400"/>
<circle cx="1088.5" cy="822.1" r="3.850" fill="#e67800"/>
<circle cx="1151.8" cy="825.9" r="3.850" fill="#ffff00"/>
<circle cx="1160.4" cy="830.0" r="3.850" fill="#ffb400"/>
<circle cx="1147.6" cy="830.5" r="3.850" fill="#ff00ff"/>
<circle cx="1115.6" cy="832.0" r="3.850" fill="#ffff00"/>
</g>
</svg>
<div class="a" style="left:770px;top:168.300px;width:28px;height:48px;background:rgba(255,255,255,.4);border-radius:4px"></div>
<div class="a" style="left:773px;top:171.200px;width:22px;height:20.500px;background:rgba(0,60,136,.5);border-radius:2px 2px 0 0"></div>
<div class="a" style="left:773px;top:193.200px;width:22px;height:20.500px;background:rgba(0,60,136,.5);border-radius:0 0 2px 2px"></div>
<svg style="left:773px;top:171px" width="22" height="43" viewBox="0 0 22 43"><path d="M6 10.500h10M11 5.500v10M6 32.500h10" stroke="#fff" stroke-width="1.300" fill="none"/></svg>
<div class="a" style="left:764px;top:289px;width:40px;height:446px;background:rgba(255,255,255,.45);border-radius:0 4px 4px 0"></div>
<svg style="left:771.5px;top:296.0px" width="24" height="24" viewBox="0 0 24 24"><path fill="#222" d="M11.990 18.540l-7.370-5.730L3 14.070l9 7 9-7-1.630-1.270-7.380 5.740zM12 16l7.360-5.730L21 9l-9-7-9 7 1.630 1.270L12 16z"/></svg>
<svg style="left:771.5px;top:336.5px" width="24" height="24" viewBox="0 0 24 24"><path fill="#2d4b9b" d="M12 2C6.480 2 2 6.480 2 12s4.480 10 10 10 10-4.480 10-10S17.520 2 12 2zm1 15h-2v-6h2v6zm0-8h-2V7h2v2z"/></svg>
<svg style="left:769.5px;top:375px" width="28" height="28" viewBox="0 0 24 24"><path d="M8.300 15L2.200 22.600h19.600L15.700 15" fill="none" stroke="#222" stroke-width="1.300"/><path d="M12 2C8.700 2 6 4.700 6 8c0 4.700 6 12.200 6 12.200s6-7.500 6-12.200c0-3.300-2.700-6-6-6z" fill="#222"/><path d="M12 4.500v7M8.500 8h7" stroke="#fff" stroke-width="1.700" fill="none"/></svg>
<svg style="left:772.0px;top:417.5px" width="23" height="23" viewBox="0 0 24 24"><path fill="#222" d="M12 8c-2.210 0-4 1.790-4 4s1.790 4 4 4 4-1.790 4-4-1.790-4-4-4zm-7 7H3v4c0 1.100.9 2 2 2h4v-2H5v-4zM5 5h4V3H5c-1.100 0-2 .9-2 2v4h2V5zm14-2h-4v2h4v4h2V5c0-1.100-.9-2-2-2zm0 16h-4v2h4c1.100 0 2-.9 2-2v-4h-2v4z"/></svg>
<svg style="left:769.5px;top:455px" width="28" height="28" viewBox="0 0 24 24"><ellipse cx="12" cy="20.500" rx="9" ry="2.500" fill="none" stroke="#222" stroke-width="1.300"/><path d="M12 2C8.700 2 6 4.700 6 8c0 4.700 6 12.200 6 12.200s6-7.500 6-12.200c0-3.300-2.700-6-6-6z" fill="#222"/><path d="M8.800 8.100l2.300 2.300 4.200-4.600" stroke="#fff" stroke-width="1.800" fill="none"/></svg>
<svg style="left:769.5px;top:495px" width="28" height="28" viewBox="0 0 24 24"><path d="M8.300 15L2.200 22.600h19.600L15.700 15" fill="none" stroke="#222" stroke-width="1.300"/><path d="M12 2C8.700 2 6 4.700 6 8c0 4.700 6 12.200 6 12.200s6-7.500 6-12.200c0-3.300-2.700-6-6-6z" fill="#222"/><path d="M8.800 8.100l2.300 2.300 4.200-4.600" stroke="#fff" stroke-width="1.800" fill="none"/></svg>
<svg style="left:769.5px;top:535px" width="28" height="28" viewBox="0 0 24 24"><ellipse cx="12" cy="20.500" rx="9" ry="2.500" fill="none" stroke="#222" stroke-width="1.300"/><path d="M12 2C8.700 2 6 4.700 6 8c0 4.700 6 12.200 6 12.200s6-7.500 6-12.200c0-3.300-2.700-6-6-6z" fill="#222"/><circle cx="12" cy="8" r="2.600" fill="#fff"/></svg>
<svg style="left:771.5px;top:577.0px" width="24" height="24" viewBox="0 0 24 24"><path fill="#222" d="M15 3l2.300 2.300-2.890 2.870 1.420 1.420L18.700 6.700 21 9V3zM3 9l2.300-2.300 2.870 2.890 1.420-1.420L6.700 5.300 9 3H3zm6 12l-2.300-2.300 2.890-2.870-1.420-1.420L5.300 17.300 3 15v6zm12-6l-2.300 2.300-2.870-2.890-1.420 1.420 2.890 2.870L15 21h6z"/></svg>
<svg style="left:771.5px;top:617.0px" width="26" height="26" viewBox="0 0 24 24"><g stroke="#222" stroke-width="2.200" fill="#222"><path d="M3 3l6 6M21 3l-6 6M3 21l6-6M21 21l-6-6" fill="none"/><path d="M10.500 4.500v6h-6zM13.500 4.500v6h6zM10.500 19.500v-6h-6zM13.500 19.500v-6h6z" stroke="none"/></g></svg>
<svg style="left:771.5px;top:657.0px" width="24" height="24" viewBox="0 0 24 24"><path fill="#222" d="M19 9h-4V3H9v6H5l7 7 7-7zM5 18v2h14v-2H5z"/></svg>
<svg style="left:771.5px;top:697.0px" width="24" height="24" viewBox="0 0 24 24"><path fill="#222" d="M19 8H5c-1.660 0-3 1.340-3 3v6h4v4h12v-4h4v-6c0-1.660-1.340-3-3-3zm-3 11H8v-5h8v5zm3-7c-.550 0-1-.450-1-1s.450-1 1-1 1 .450 1 1-.450 1-1 1zm-1-9H6v4h12V3z"/></svg>
<div class="a" style="left:764px;top:891px;width:720px;height:84px;background:rgba(255,255,255,.5)"></div>
<span class="a" id="t_leg" style="letter-spacing:-0.151px;left:770px;top:901px;font-size:14px;color:#222">Daily station observations of maximum wind gust at 10 m above ground in m/s - 2018-01-18</span>
<div class="a" style="left:770.00px;top:918px;width:71.73px;height:10px;background:#00d42b"></div>
<div class="a" style="left:841.43px;top:918px;width:71.73px;height:10px;background:#96ff00"></div>
<div class="a" style="left:912.86px;top:918px;width:71.73px;height:10px;background:#ffff00"></div>
<div class="a" style="left:984.29px;top:918px;width:71.73px;height:10px;background:#ffb400"></div>
<div class="a" style="left:1055.71px;top:918px;width:71.73px;height:10px;background:#e67800"></div>
<div class="a" style="left:1127.14px;top:918px;width:71.73px;height:10px;background:#ff0014"></div>
<div class="a" style="left:1198.57px;top:918px;width:71.73px;height:10px;background:#ff00ff"></div>
<span class="a" id="t_l5" style="left:840px;top:932px;font-size:12.500px;color:#222;-webkit-text-stroke:.3px #222">5</span>
<span class="a" id="t_l15" style="left:983px;top:932px;font-size:12.500px;color:#222;-webkit-text-stroke:.3px #222">15</span>
<span class="a" id="t_l25" style="left:1126px;top:932px;font-size:12.500px;color:#222;-webkit-text-stroke:.3px #222">25</span>
<span class="a" id="t_lms" style="left:1250px;top:932px;font-size:12.500px;color:#222;-webkit-text-stroke:.3px #222">m/s</span>
<span class="a" id="t_db" style="letter-spacing:-0.535px;left:1358px;top:958px;font-size:14px;color:#222">Data base DWD</span>
<svg style="left:1461.0px;top:893.0px" width="20" height="20" viewBox="0 0 24 24"><path fill="#333" d="M12 8l-6 6 1.410 1.410L12 10.830l4.590 4.580L18 14z"/></svg>
<svg style="left:1461.0px;top:950.0px" width="20" height="20" viewBox="0 0 24 24"><path fill="#333" d="M12 8l-6 6 1.410 1.410L12 10.830l4.590 4.580L18 14z"/></svg>
</body></html>
